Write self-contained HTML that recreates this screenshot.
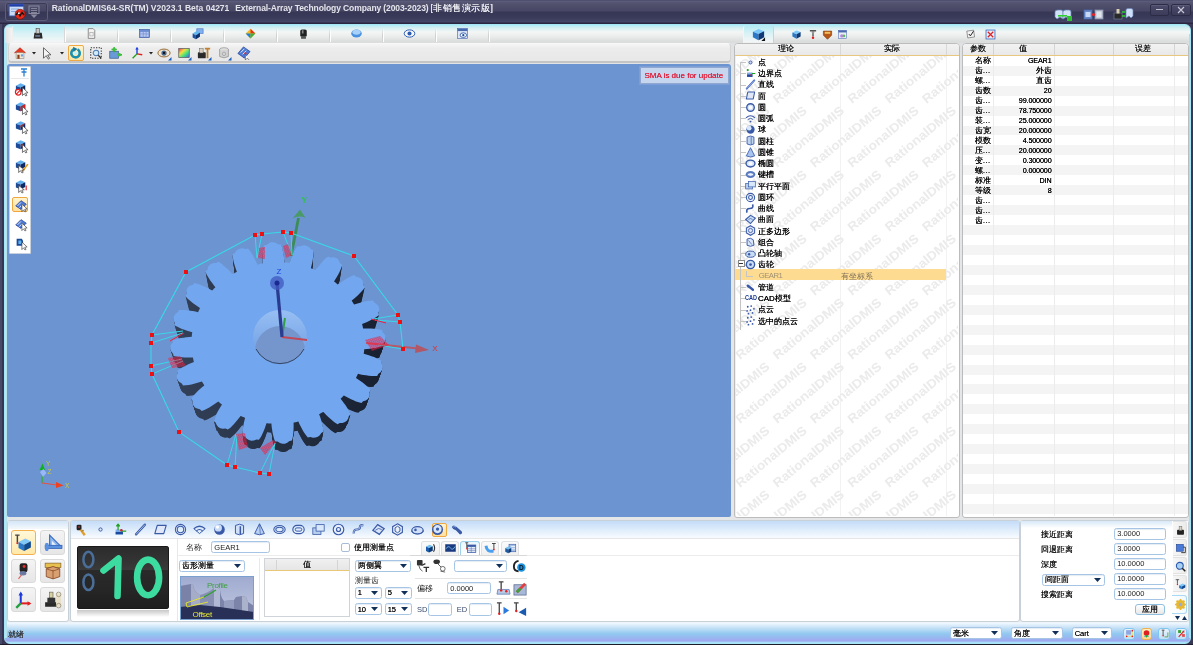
<!DOCTYPE html><html><head><meta charset="utf-8"><style>
*{box-sizing:border-box;margin:0;padding:0}
html,body{width:1193px;height:645px;overflow:hidden;background:linear-gradient(90deg,#484868 0,#484868 2px,#363654 2px,#363654 4px,#3a3a56 4px,#3a3a56 1191px,#383852 1191px);font-family:"Liberation Sans",sans-serif;color:#222}
.a{position:absolute}
.t{position:absolute;white-space:nowrap;line-height:1}
svg{overflow:visible}
body{will-change:transform}
</style></head><body>
<div class="a" style="left:0px;top:0px;width:1193px;height:24px;background:linear-gradient(#4a4a68 0,#5a5a7a 1.5px,#53536f 3px,#474765 11px,#363655 12px,#393959 17px,#444466 22px,#2a2540 23px)"></div>
<div class="a" style="left:4.5px;top:2px;width:43px;height:18.5px;border:1px solid #5e5e7c;border-radius:3px;box-shadow:inset 0 0 0 1px #3a3a56"></div>
<svg class="a" style="left:8px;top:3px" width="18" height="18" viewBox="0 0 18 18"><rect x="1.2" y="1.2" width="14.5" height="11.7" fill="#c8dcf8" stroke="#3a6ad0" stroke-width="0.8"/><rect x="1.2" y="1.2" width="14.5" height="2.4" fill="#1e3ea8"/><rect x="3" y="5.5" width="8" height="1" fill="#8aa8d8"/><rect x="3" y="8" width="6" height="1" fill="#8aa8d8"/><circle cx="12.1" cy="11.3" r="5" fill="#e82818" stroke="#801008" stroke-width="0.6"/><path d="M8,12 L10,9.5 L12,12.8 L14,9.5 L16,12" fill="none" stroke="#111" stroke-width="1.4"/><circle cx="10.8" cy="10.2" r="1" fill="#e8f0f0"/></svg>
<svg class="a" style="left:28px;top:5px" width="12" height="14" viewBox="0 0 12 14"><rect x="1" y="1" width="10" height="7.5" fill="none" stroke="#8a8aa0" stroke-width="1"/><rect x="3" y="3" width="6" height="0.9" fill="#8a8aa0"/><rect x="3" y="5" width="6" height="0.9" fill="#8a8aa0"/><rect x="3" y="7" width="6" height="0.9" fill="#8a8aa0"/><path d="M2.5,9.5 L9.5,9.5 L6,13Z" fill="#8a8aa0"/></svg>
<div class="t" style="left:51.7px;top:3.7px;font-size:8.5px;font-weight:bold;color:#e4e4ec">RationalDMIS64-SR(TM) V2023.1 Beta 04271</div>
<div class="t" style="left:235.3px;top:3.7px;font-size:8.5px;font-weight:bold;color:#e4e4ec;letter-spacing:-0.1px">External-Array Technology Company (2003-2023)</div>
<div class="t" style="left:430.5px;top:3.9px;font-size:8.6px;color:#e8e8f0;letter-spacing:0.5px;text-shadow:0 0 0.4px #fff">[非销售演示版]</div>
<svg class="a" style="left:1054px;top:9px" width="19" height="12" viewBox="0 0 19 12"><path d="M1,3 Q1,1 4,1 L7,1 Q9,1 9,3 L9,10 L6,8 L3,10 L1,8Z" fill="#cfe0f8" stroke="#6a88b8" stroke-width="0.7"/><path d="M9,3 Q9,1 12,1 L15,1 Q17,1 17,3 L17,8 L15,10 L12,8 L9,10Z" fill="#cfe0f8" stroke="#6a88b8" stroke-width="0.7"/><rect x="4" y="6" width="9" height="1.6" fill="#30d030"/><rect x="13" y="7" width="5" height="5" fill="#30c030"/></svg>
<svg class="a" style="left:1083px;top:9px" width="22" height="11" viewBox="0 0 22 11"><rect x="1" y="1" width="8" height="9" fill="#6a8ac8" stroke="#4a6aa8" stroke-width="0.8"/><rect x="2.5" y="3" width="5" height="5" fill="#c8d8f8"/><rect x="12" y="1" width="8" height="9" fill="#b8c0d0" stroke="#8890a8" stroke-width="0.8"/><rect x="13.5" y="2.5" width="5" height="6" fill="#e0e4ec"/><circle cx="10.5" cy="5.5" r="1.6" fill="#f02020"/></svg>
<svg class="a" style="left:1113px;top:8px" width="22" height="12" viewBox="0 0 22 12"><rect x="1" y="5" width="8" height="6" fill="#2a2a2a" stroke="#7a88a8" stroke-width="0.6"/><rect x="3.5" y="1" width="3" height="4.5" fill="#d8d0b0"/><path d="M13,2 Q13,0.5 15,0.5 L18,0.5 Q20,0.5 20,2.5 L20,8 L18,10 L16,8 L13,10Z" fill="#cfe0f8" stroke="#6a88b8" stroke-width="0.7"/><path d="M9,4 L12.5,4 M9,8 L12.5,8" stroke="#30d030" stroke-width="1.6"/></svg>
<div class="a" style="left:1149.5px;top:3.5px;width:19.5px;height:12px;border:1px solid #2c2c46;border-radius:2px;background:linear-gradient(#4c4c6a,#3c3c5a);box-shadow:inset 0 1px 0 #5c5c7a"></div>
<div class="a" style="left:1171px;top:3.5px;width:20px;height:12px;border:1px solid #2c2c46;border-radius:2px;background:linear-gradient(#4c4c6a,#3c3c5a);box-shadow:inset 0 1px 0 #5c5c7a"></div>
<div class="a" style="left:1155.5px;top:8.5px;width:7px;height:1.3px;background:#c0c0d0"></div>
<svg class="a" style="left:1177px;top:5.5px" width="8" height="8" viewBox="0 0 8 8"><path d="M1,1 L7,7 M7,1 L1,7" stroke="#c8c8d8" stroke-width="1.1"/></svg>
<div class="a" style="left:4px;top:24px;width:1187px;height:620px;border:1px solid #a4e6f6;border-radius:6px 6px 6px 6px;background:linear-gradient(#aeeaf6 0,#d6eef2 3px,#f4f6f6 7px,#eceeee 11px,#dadcdc 17px,#e0e2e4 19px,#e4e6e8 100px,#e4e6e8 596px,#f0f8ff 598px,#c4e0f6 603px,#90c8f0 609px,#a0a8f0 616px,#a8e0f8 617.5px)"></div>
<div class="a" style="left:1188.5px;top:34px;width:1.5px;height:604px;background:#a8e0f4"></div>
<div class="a" style="left:5px;top:34px;width:2px;height:604px;background:linear-gradient(90deg,#b0ecfc,#b8dce4)"></div>
<div class="a" style="left:0px;top:644px;width:1193px;height:1px;background:#201c30"></div>
<div class="a" style="left:65px;top:28px;width:1px;height:14px;background:linear-gradient(rgba(255,255,255,0),#ffffff 40%,#ffffff)"></div>
<div class="a" style="left:64px;top:28px;width:1px;height:14px;background:linear-gradient(rgba(200,200,200,0),#d0d0d0 50%,#d4d4d4)"></div>
<div class="a" style="left:118px;top:28px;width:1px;height:14px;background:linear-gradient(rgba(255,255,255,0),#ffffff 40%,#ffffff)"></div>
<div class="a" style="left:117px;top:28px;width:1px;height:14px;background:linear-gradient(rgba(200,200,200,0),#d0d0d0 50%,#d4d4d4)"></div>
<div class="a" style="left:171px;top:28px;width:1px;height:14px;background:linear-gradient(rgba(255,255,255,0),#ffffff 40%,#ffffff)"></div>
<div class="a" style="left:170px;top:28px;width:1px;height:14px;background:linear-gradient(rgba(200,200,200,0),#d0d0d0 50%,#d4d4d4)"></div>
<div class="a" style="left:224px;top:28px;width:1px;height:14px;background:linear-gradient(rgba(255,255,255,0),#ffffff 40%,#ffffff)"></div>
<div class="a" style="left:223px;top:28px;width:1px;height:14px;background:linear-gradient(rgba(200,200,200,0),#d0d0d0 50%,#d4d4d4)"></div>
<div class="a" style="left:277px;top:28px;width:1px;height:14px;background:linear-gradient(rgba(255,255,255,0),#ffffff 40%,#ffffff)"></div>
<div class="a" style="left:276px;top:28px;width:1px;height:14px;background:linear-gradient(rgba(200,200,200,0),#d0d0d0 50%,#d4d4d4)"></div>
<div class="a" style="left:330px;top:28px;width:1px;height:14px;background:linear-gradient(rgba(255,255,255,0),#ffffff 40%,#ffffff)"></div>
<div class="a" style="left:329px;top:28px;width:1px;height:14px;background:linear-gradient(rgba(200,200,200,0),#d0d0d0 50%,#d4d4d4)"></div>
<div class="a" style="left:383px;top:28px;width:1px;height:14px;background:linear-gradient(rgba(255,255,255,0),#ffffff 40%,#ffffff)"></div>
<div class="a" style="left:382px;top:28px;width:1px;height:14px;background:linear-gradient(rgba(200,200,200,0),#d0d0d0 50%,#d4d4d4)"></div>
<div class="a" style="left:436px;top:28px;width:1px;height:14px;background:linear-gradient(rgba(255,255,255,0),#ffffff 40%,#ffffff)"></div>
<div class="a" style="left:435px;top:28px;width:1px;height:14px;background:linear-gradient(rgba(200,200,200,0),#d0d0d0 50%,#d4d4d4)"></div>
<div class="a" style="left:489px;top:28px;width:1px;height:14px;background:linear-gradient(rgba(255,255,255,0),#ffffff 40%,#ffffff)"></div>
<div class="a" style="left:488px;top:28px;width:1px;height:14px;background:linear-gradient(rgba(200,200,200,0),#d0d0d0 50%,#d4d4d4)"></div>
<div class="a" style="left:12px;top:25.5px;width:53px;height:18px;background:linear-gradient(#b4eaf4,#d8f2f6 40%,#f2f6f6 85%,#ececec);border-left:1px solid #f0f0f0;border-right:1px solid #d8d8d8;border-radius:2px 2px 0 0"></div>
<div class="a" style="left:5px;top:28px;width:7px;height:15px;background:linear-gradient(90deg,#e0e0e0,#f4f4f4);border-radius:2px 0 0 0"></div>
<svg class="a" style="left:31.5px;top:26.5px" width="13" height="13" viewBox="0 0 16 16"><path d="M3,7 L12,7 L13,14 L2,14Z" fill="#2a2a2a"/><rect x="5" y="2" width="4" height="6" fill="#c8c8c8" stroke="#444" stroke-width="0.7"/><rect x="4" y="10" width="6" height="2" fill="#6a7a90"/></svg>
<svg class="a" style="left:84.5px;top:26.5px" width="13" height="13" viewBox="0 0 16 16"><path d="M4,2 L10,2 L12,4 L12,14 L4,14Z" fill="#f4f4f4" stroke="#777" stroke-width="1"/><rect x="6" y="7" width="4" height="4" fill="none" stroke="#999" stroke-width="0.7"/></svg>
<svg class="a" style="left:137.5px;top:26.5px" width="13" height="13" viewBox="0 0 16 16"><rect x="2" y="3" width="12" height="10" fill="#6a8cd0" stroke="#3a5aa0" stroke-width="0.8"/><rect x="3" y="6" width="10" height="6" fill="#b8c8f0"/><path d="M3,8.5 H13 M6.5,6 V12 M10,6 V12" stroke="#6a8cd0" stroke-width="0.8"/></svg>
<svg class="a" style="left:190.5px;top:26.5px" width="13" height="13" viewBox="0 0 16 16"><path d="M7,2 L15,2 L15,8 L7,8Z" fill="#80b0f0" stroke="#3a60b0" stroke-width="0.6"/><path d="M2,8 L7,5 L11,7 L6,10Z" fill="#60b8f0"/><path d="M2,8 L6,10 L6,15 L2,13Z" fill="#1a50a0"/><path d="M6,10 L11,7 L11,12 L6,15Z" fill="#0a3070"/></svg>
<svg class="a" style="left:243.5px;top:26.5px" width="13" height="13" viewBox="0 0 16 16"><path d="M8,2 L14,8 L8,14 L2,8Z" fill="#f0c020"/><path d="M8,2 L14,8 L8,8Z" fill="#e83020"/><path d="M2,8 L8,14 L8,8Z" fill="#2080e0"/><path d="M8,8 L14,8 L8,14Z" fill="#40b040"/></svg>
<svg class="a" style="left:296.5px;top:26.5px" width="13" height="13" viewBox="0 0 16 16"><rect x="4" y="3" width="8" height="9" rx="2" fill="#222"/><rect x="5" y="12" width="6" height="2.5" fill="#555"/><rect x="6" y="4" width="2" height="4" fill="#888"/></svg>
<svg class="a" style="left:349.5px;top:26.5px" width="13" height="13" viewBox="0 0 16 16"><ellipse cx="8" cy="8" rx="6.5" ry="5" fill="#4890e0"/><ellipse cx="8" cy="6.5" rx="5" ry="3" fill="#a8d0f8"/></svg>
<svg class="a" style="left:402.5px;top:26.5px" width="13" height="13" viewBox="0 0 16 16"><ellipse cx="8" cy="8" rx="6.5" ry="4.5" fill="#f8f8fc" stroke="#2a5ab0" stroke-width="1.2"/><circle cx="8" cy="8" r="2.5" fill="#2a5ab0"/></svg>
<svg class="a" style="left:455.5px;top:26.5px" width="13" height="13" viewBox="0 0 16 16"><rect x="2" y="2" width="12" height="12" fill="#dce6f8" stroke="#4a6ab0" stroke-width="0.8"/><rect x="2" y="2" width="12" height="3" fill="#4a6ab0"/><ellipse cx="9" cy="10" rx="4" ry="2.8" fill="#fff" stroke="#1a4aa0" stroke-width="1"/><circle cx="9" cy="10" r="1.4" fill="#1a4aa0"/></svg>
<div class="a" style="left:8px;top:42.5px;width:723px;height:20px;background:linear-gradient(#f6f6f6,#ececec 25%,#e8e8e8);border:1px solid #d4d4d4;border-top-color:#f8f8f8;border-bottom:2px solid #c4c4c4;border-radius:4px"></div>
<svg class="a" style="left:13.0px;top:45.5px" width="14" height="14" viewBox="0 0 16 16"><path d="M1.5,8 L8,2 L14.5,8" fill="#e83a20" stroke="#b02010" stroke-width="0.8"/><rect x="3.5" y="7.5" width="9" height="7" fill="#f0e8d8" stroke="#8a7060" stroke-width="0.6"/><rect x="5" y="10" width="2.5" height="4.5" fill="#8a3a10"/><rect x="9" y="9.5" width="2.5" height="2.5" fill="#6aa0e0"/></svg>
<svg class="a" style="left:31.5px;top:51.5px" width="4" height="2.5" viewBox="0 0 4 2.5"><path d="M0,0 L4,0 L2,2.5Z" fill="#222"/></svg>
<svg class="a" style="left:40.0px;top:45.5px" width="14" height="14" viewBox="0 0 16 16"><path d="M4,2 L4,14 L7,11 L9.5,15 L11,14 L8.7,10.3 L12.5,10Z" fill="#f4f4f4" stroke="#444" stroke-width="0.9"/></svg>
<svg class="a" style="left:59.5px;top:51.5px" width="4" height="2.5" viewBox="0 0 4 2.5"><path d="M0,0 L4,0 L2,2.5Z" fill="#222"/></svg>
<div class="a" style="left:68px;top:45px;width:15.5px;height:15.5px;background:linear-gradient(#fff4d0,#ffe4a0);border:1px solid #f0a840;border-radius:2px"></div>
<svg class="a" style="left:69.0px;top:46.0px" width="13" height="13" viewBox="0 0 16 16"><path d="M10.5,4.2 A5.2,5.2 0 1 1 6.5,3.8" fill="none" stroke="#1a90b0" stroke-width="3.2"/><path d="M5,0.8 L10.5,3.6 L5.5,7.5Z" fill="#1a7aa0"/><circle cx="8" cy="9" r="2.2" fill="#c8f0f8"/></svg>
<svg class="a" style="left:88.5px;top:45.5px" width="14" height="14" viewBox="0 0 16 16"><rect x="2" y="2" width="12" height="12" fill="none" stroke="#333" stroke-width="1.2" stroke-dasharray="1.5,1.5"/><circle cx="8" cy="8" r="3.2" fill="#d0e8f8" stroke="#4a7ab0" stroke-width="1.2"/><path d="M10.5,10.5 L14,14" stroke="#333" stroke-width="1.5"/></svg>
<svg class="a" style="left:108.0px;top:45.5px" width="14" height="14" viewBox="0 0 16 16"><rect x="2" y="6" width="10" height="8" fill="#6a9ad8" stroke="#3a5a90" stroke-width="0.8"/><path d="M7,1 L7,7 M4,4 H10 M11,10 H16" stroke="#30b030" stroke-width="1.5"/><circle cx="7" cy="4" r="2" fill="#40c040"/><circle cx="13" cy="10" r="2" fill="#40c040"/></svg>
<svg class="a" style="left:130.0px;top:45.5px" width="14" height="14" viewBox="0 0 16 16"><path d="M8,9 L8,2" stroke="#2040e0" stroke-width="1.6"/><path d="M6,4 L8,1 L10,4Z" fill="#2040e0"/><path d="M8,9 L14,10" stroke="#e02020" stroke-width="1.6"/><path d="M8,9 L3,14" stroke="#20a020" stroke-width="1.6"/></svg>
<svg class="a" style="left:148.5px;top:51.5px" width="4" height="2.5" viewBox="0 0 4 2.5"><path d="M0,0 L4,0 L2,2.5Z" fill="#222"/></svg>
<svg class="a" style="left:157.0px;top:45.5px" width="14" height="14" viewBox="0 0 16 16"><ellipse cx="8" cy="8" rx="7" ry="4.5" fill="#f0e4d0" stroke="#8a5a20" stroke-width="1"/><circle cx="8" cy="8" r="3" fill="#4a6a90"/><circle cx="8" cy="8" r="1.3" fill="#111"/></svg>
<svg class="a" style="left:168px;top:56.5px" width="3.5" height="3.5" viewBox="0 0 3.5 3.5"><path d="M3.5,0 L3.5,3.5 L0,3.5Z" fill="#1a60c0"/></svg>
<svg class="a" style="left:176.6px;top:45.5px" width="14" height="14" viewBox="0 0 16 16"><defs><linearGradient id="rb" x1="0" y1="0" x2="1" y2="1"><stop offset="0" stop-color="#f03060"/><stop offset="0.35" stop-color="#f0e040"/><stop offset="0.65" stop-color="#40e080"/><stop offset="1" stop-color="#4060f0"/></linearGradient></defs><rect x="2" y="3" width="12" height="10" fill="url(#rb)" stroke="#555" stroke-width="0.8"/></svg>
<svg class="a" style="left:187.6px;top:56.5px" width="3.5" height="3.5" viewBox="0 0 3.5 3.5"><path d="M3.5,0 L3.5,3.5 L0,3.5Z" fill="#1a60c0"/></svg>
<svg class="a" style="left:197.0px;top:45.5px" width="14" height="14" viewBox="0 0 16 16"><rect x="1" y="7" width="9" height="7" rx="1" fill="#2a2a2a"/><rect x="3" y="3" width="4" height="5" fill="#d8d0c0" stroke="#555" stroke-width="0.5"/><path d="M9,3 H15 M12,3 V14" stroke="#c08030" stroke-width="2"/></svg>
<svg class="a" style="left:208px;top:56.5px" width="3.5" height="3.5" viewBox="0 0 3.5 3.5"><path d="M3.5,0 L3.5,3.5 L0,3.5Z" fill="#1a60c0"/></svg>
<svg class="a" style="left:216.5px;top:45.5px" width="14" height="14" viewBox="0 0 16 16"><ellipse cx="8" cy="4" rx="5" ry="2" fill="#e8e8e8" stroke="#888" stroke-width="0.8"/><path d="M3,4 V12 Q8,15 13,12 V4" fill="#d4d4d4" stroke="#888" stroke-width="0.8"/><circle cx="8" cy="9" r="2" fill="none" stroke="#999" stroke-width="0.8"/></svg>
<svg class="a" style="left:227.5px;top:56.5px" width="3.5" height="3.5" viewBox="0 0 3.5 3.5"><path d="M3.5,0 L3.5,3.5 L0,3.5Z" fill="#1a60c0"/></svg>
<svg class="a" style="left:236.1px;top:45.0px" width="15" height="15" viewBox="0 0 16 16"><path d="M2,9 L8,2 L15,7 L9,14Z" fill="#4a7ad8" stroke="#2a4a98" stroke-width="0.8"/><path d="M5,8 L9,4 M7,10 L11,6" stroke="#f0f0ff" stroke-width="1"/><circle cx="10" cy="9" r="1.2" fill="#e03030"/><path d="M10,10 L10,16 L12,14 L14,16" fill="#fff" stroke="#333" stroke-width="0.6"/></svg>
<div class="a" style="left:7px;top:64px;width:724px;height:453px;background:#6c94d0;border-radius:3px 3px 2px 2px"></div>
<div class="a" style="left:640px;top:67px;width:88.5px;height:17px;background:#c6d6ee;border:1px solid #90a8d0;box-shadow:0 0 0 1px #7c9ed8"></div>
<div class="t" style="left:644.5px;top:71.8px;font-size:8px;color:#e0203c;text-shadow:0 0 0.3px #e0203c">SMA is due for update</div>
<div class="a" style="left:9px;top:65.5px;width:22px;height:188.5px;background:#fff;border:1px solid #c8d0dc;border-radius:1px"></div>
<div class="a" style="left:11px;top:77.5px;width:18px;height:1px;background:#e8e8e8"></div>
<svg class="a" style="left:20px;top:68px" width="8" height="9" viewBox="0 0 8 9"><path d="M1,1 H7 M4,1 V4 M1.5,4 H6.5 M4,4 V8.5" stroke="#2a80d0" stroke-width="1.3"/></svg>
<svg class="a" style="left:13.5px;top:81.1px" width="15" height="15" viewBox="0 0 16 16"><path d="M2,5 L7,2.5 L12,4.5 L7,7Z" fill="#60b0f0"/><path d="M2,5 L7,7 L7,12 L2,10Z" fill="#1a4a98"/><path d="M7,7 L12,4.5 L12,9.5 L7,12Z" fill="#0a2a68"/><circle cx="4.5" cy="12" r="3" fill="#fff" stroke="#e02020" stroke-width="1.3"/><path d="M2.5,14 L6.5,10" stroke="#e02020" stroke-width="1.2"/><path d="M9,7 L9,15.5 L11,13.5 L12.5,16 L13.8,15.3 L12.3,12.8 L15,12.5Z" fill="#fff" stroke="#333" stroke-width="0.7"/></svg>
<svg class="a" style="left:13.5px;top:100.2px" width="15" height="15" viewBox="0 0 16 16"><path d="M2,5 L7,2.5 L12,4.5 L7,7Z" fill="#60b0f0"/><path d="M2,5 L7,7 L7,12 L2,10Z" fill="#1a4a98"/><path d="M7,7 L12,4.5 L12,9.5 L7,12Z" fill="#0a2a68"/><path d="M7,7 L12,4.5 L12,9.5 L7,12Z" fill="#e02020"/><path d="M9,7 L9,15.5 L11,13.5 L12.5,16 L13.8,15.3 L12.3,12.8 L15,12.5Z" fill="#fff" stroke="#333" stroke-width="0.7"/></svg>
<svg class="a" style="left:13.5px;top:119.2px" width="15" height="15" viewBox="0 0 16 16"><path d="M2,5 L7,2.5 L12,4.5 L7,7Z" fill="#60b0f0"/><path d="M2,5 L7,7 L7,12 L2,10Z" fill="#1a4a98"/><path d="M7,7 L12,4.5 L12,9.5 L7,12Z" fill="#0a2a68"/><path d="M7,7 L12,4.5 L10,7 L7,9Z" fill="#e02020"/><path d="M9,7 L9,15.5 L11,13.5 L12.5,16 L13.8,15.3 L12.3,12.8 L15,12.5Z" fill="#fff" stroke="#333" stroke-width="0.7"/></svg>
<svg class="a" style="left:13.5px;top:138.2px" width="15" height="15" viewBox="0 0 16 16"><path d="M2,5 L7,2.5 L12,4.5 L7,7Z" fill="#60b0f0"/><path d="M2,5 L7,7 L7,12 L2,10Z" fill="#1a4a98"/><path d="M7,7 L12,4.5 L12,9.5 L7,12Z" fill="#0a2a68"/><circle cx="9" cy="8" r="1.6" fill="#e02020"/><path d="M9,7 L9,15.5 L11,13.5 L12.5,16 L13.8,15.3 L12.3,12.8 L15,12.5Z" fill="#fff" stroke="#333" stroke-width="0.7"/></svg>
<svg class="a" style="left:13.5px;top:157.5px" width="15" height="15" viewBox="0 0 16 16"><path d="M2,5 L7,2.5 L12,4.5 L7,7Z" fill="#60b0f0"/><path d="M2,5 L7,7 L7,12 L2,10Z" fill="#1a4a98"/><path d="M7,7 L12,4.5 L12,9.5 L7,12Z" fill="#0a2a68"/><path d="M8,14 L14,6 L15.5,7 L9.5,15Z" fill="#e0a020"/><path d="M5,8 L5,15.5 L7,13.5 L8.5,16 L9.8,15.3 L8.3,12.8 L11,12.5Z" fill="#fff" stroke="#333" stroke-width="0.7"/></svg>
<svg class="a" style="left:13.5px;top:177.5px" width="15" height="15" viewBox="0 0 16 16"><path d="M2,5 L7,2.5 L12,4.5 L7,7Z" fill="#60b0f0"/><path d="M2,5 L7,7 L7,12 L2,10Z" fill="#1a4a98"/><path d="M7,7 L12,4.5 L12,9.5 L7,12Z" fill="#0a2a68"/><path d="M13,8 L13,13" stroke="#e02020" stroke-width="1.2"/><path d="M5,8 L5,15.5 L7,13.5 L8.5,16 L9.8,15.3 L8.3,12.8 L11,12.5Z" fill="#fff" stroke="#333" stroke-width="0.7"/></svg>
<div class="a" style="left:12.4px;top:197.3px;width:15.5px;height:15px;background:linear-gradient(#fff4d0,#ffe0a0);border:1px solid #f0a840;border-radius:2px"></div>
<svg class="a" style="left:14.0px;top:197.8px" width="14" height="14" viewBox="0 0 16 16"><path d="M2,9 L8,3 L14,7 L8,13Z" fill="#4a7ad8" stroke="#1a3a88" stroke-width="0.8"/><path d="M4,9 L8,5 M6,11 L10,7" stroke="#fff" stroke-width="0.9"/><circle cx="9" cy="9" r="1" fill="#e02020"/><path d="M9,7 L9,15.5 L11,13.5 L12.5,16 L13.8,15.3 L12.3,12.8 L15,12.5Z" fill="#fff" stroke="#333" stroke-width="0.7"/></svg>
<svg class="a" style="left:14.0px;top:217.0px" width="14" height="14" viewBox="0 0 16 16"><path d="M2,9 L8,3 L14,7 L8,13Z" fill="#4a7ad8" stroke="#1a3a88" stroke-width="0.8"/><path d="M4,9 L8,5 M6,11 L10,7" stroke="#fff" stroke-width="0.9"/><path d="M9,7 L9,15.5 L11,13.5 L12.5,16 L13.8,15.3 L12.3,12.8 L15,12.5Z" fill="#fff" stroke="#333" stroke-width="0.7"/></svg>
<svg class="a" style="left:14.0px;top:235.5px" width="14" height="14" viewBox="0 0 16 16"><path d="M3,3 L9,3 Q12,7 9,11 L3,11Z" fill="#1a4a98"/><path d="M5,5 L8,5 Q9.5,7 8,9 L5,9Z" fill="#60b0f0"/><path d="M9,7 L9,15.5 L11,13.5 L12.5,16 L13.8,15.3 L12.3,12.8 L15,12.5Z" fill="#fff" stroke="#333" stroke-width="0.7"/></svg>
<svg class="a" style="left:0;top:0" width="1193" height="645" viewBox="0 0 1193 645"><defs><linearGradient id="wall" x1="0" y1="0" x2="1" y2="0"><stop offset="0" stop-color="#34425a"/><stop offset="0.5" stop-color="#243044"/><stop offset="1" stop-color="#182030"/></linearGradient><linearGradient id="bore" x1="0" y1="0" x2="0" y2="1"><stop offset="0" stop-color="#98c0f4"/><stop offset="1" stop-color="#6a98e0"/></linearGradient></defs><path transform="matrix(0.9620,0,0,0.9620,10.60,25.16)" d="M266.5,244.9L268.8,243.2L271.1,242.3L273.6,242.2L276.0,242.9L278.4,244.4L280.9,244.6L281.9,247.1L282.6,249.7L283.2,252.2L283.7,254.7L284.0,257.3L284.4,259.8L284.6,262.4L285.6,262.4L286.6,262.5L287.5,262.6L288.5,262.7L289.5,262.8L290.3,260.4L291.1,258.0L292.1,255.6L293.1,253.2L294.2,250.8L295.5,248.5L297.1,246.2L299.5,246.4L302.2,245.5L304.7,245.3L307.1,245.9L309.2,247.2L311.0,249.3L313.3,250.2L313.4,252.9L313.3,255.6L313.0,258.1L312.6,260.7L312.1,263.2L311.5,265.7L310.9,268.2L311.8,268.6L312.7,268.9L313.6,269.3L314.5,269.7L315.4,270.1L317.0,268.0L318.6,265.9L320.3,263.9L322.0,261.9L323.9,260.0L325.9,258.1L328.2,256.4L330.4,257.4L333.3,257.2L335.7,257.8L337.8,259.0L339.3,260.9L340.4,263.4L342.2,264.9L341.4,267.6L340.4,270.0L339.3,272.4L338.1,274.7L336.8,277.0L335.4,279.2L334.0,281.4L334.8,282.0L335.5,282.6L336.2,283.2L337.0,283.8L337.7,284.5L339.9,282.9L342.1,281.4L344.4,280.0L346.7,278.6L349.1,277.3L351.6,276.1L354.3,275.1L356.1,276.7L358.9,277.4L361.1,278.6L362.6,280.4L363.5,282.7L363.6,285.4L364.9,287.3L363.3,289.6L361.5,291.6L359.6,293.6L357.7,295.4L355.7,297.2L353.7,298.9L351.7,300.6L352.2,301.4L352.7,302.2L353.2,303.0L353.6,303.8L354.1,304.6L356.7,303.7L359.3,303.0L361.9,302.3L364.6,301.6L367.3,301.1L370.1,300.7L373.0,300.5L374.2,302.5L376.6,304.0L378.3,305.8L379.2,307.9L379.2,310.3L378.5,312.9L379.0,315.1L376.7,316.8L374.4,318.3L372.0,319.6L369.5,320.8L367.1,321.9L364.6,322.9L362.1,324.0L362.3,324.8L362.5,325.7L362.7,326.6L362.9,327.5L363.1,328.4L365.8,328.4L368.5,328.4L371.3,328.5L374.0,328.7L376.8,328.9L379.6,329.4L382.4,330.0L382.9,332.3L384.7,334.4L385.7,336.6L385.8,338.9L385.1,341.2L383.5,343.4L383.3,345.7L380.6,346.6L377.8,347.3L375.1,347.9L372.4,348.3L369.7,348.7L367.0,348.9L364.2,349.2L364.2,350.1L364.1,351.0L364.0,351.9L363.9,352.8L363.7,353.7L366.3,354.5L368.9,355.3L371.5,356.2L374.1,357.1L376.6,358.2L379.1,359.4L381.6,360.8L381.3,363.1L382.3,365.6L382.5,368.0L381.9,370.2L380.5,372.2L378.2,373.9L377.2,376.0L374.3,376.1L371.5,376.0L368.7,375.7L366.0,375.3L363.3,374.9L360.6,374.4L358.0,373.8L357.6,374.6L357.2,375.5L356.8,376.3L356.4,377.1L356.0,378.0L358.2,379.4L360.4,381.0L362.6,382.5L364.7,384.2L366.8,385.9L368.8,387.8L370.6,389.9L369.6,392.0L369.7,394.7L369.2,397.0L367.8,398.9L365.8,400.4L363.1,401.3L361.5,403.0L358.7,402.3L356.0,401.4L353.5,400.3L351.0,399.2L348.6,398.0L346.2,396.7L343.9,395.4L343.3,396.1L342.6,396.8L342.0,397.5L341.3,398.1L340.6,398.8L342.2,400.8L343.8,402.9L345.4,405.0L346.8,407.2L348.2,409.5L349.5,411.8L350.6,414.4L348.9,416.0L348.2,418.6L346.8,420.7L345.0,422.1L342.5,422.9L339.7,423.0L337.6,424.2L335.1,422.7L332.9,421.1L330.9,419.3L328.9,417.5L327.0,415.7L325.1,413.8L323.4,411.9L322.5,412.3L321.7,412.8L320.8,413.3L320.0,413.7L319.1,414.2L320.0,416.6L320.8,419.0L321.6,421.5L322.3,424.0L322.8,426.5L323.3,429.1L323.4,431.8L321.3,432.9L319.8,435.2L317.8,436.8L315.5,437.6L313.0,437.7L310.2,436.9L307.8,437.4L306.0,435.3L304.4,433.1L303.1,430.9L301.8,428.6L300.6,426.3L299.4,423.9L298.4,421.6L297.4,421.8L296.5,422.0L295.5,422.2L294.5,422.4L293.6,422.6L293.6,425.1L293.6,427.7L293.5,430.2L293.3,432.8L293.0,435.4L292.6,438.0L291.9,440.6L289.5,441.1L287.2,442.8L284.9,443.7L282.4,443.8L280.0,443.1L277.6,441.6L275.1,441.4L274.1,438.9L273.4,436.3L272.8,433.8L272.3,431.3L272.0,428.7L271.6,426.2L271.4,423.6L270.4,423.6L269.4,423.5L268.5,423.4L267.5,423.3L266.5,423.2L265.7,425.6L264.9,428.0L263.9,430.4L262.9,432.8L261.8,435.2L260.5,437.5L258.9,439.8L256.5,439.6L253.8,440.5L251.3,440.7L248.9,440.1L246.8,438.8L245.0,436.7L242.7,435.8L242.6,433.1L242.7,430.4L243.0,427.9L243.4,425.3L243.9,422.8L244.5,420.3L245.1,417.8L244.2,417.4L243.3,417.1L242.4,416.7L241.5,416.3L240.6,415.9L239.0,418.0L237.4,420.1L235.7,422.1L234.0,424.1L232.1,426.0L230.1,427.9L227.8,429.6L225.6,428.6L222.7,428.8L220.3,428.2L218.2,427.0L216.7,425.1L215.6,422.6L213.8,421.1L214.6,418.4L215.6,416.0L216.7,413.6L217.9,411.3L219.2,409.0L220.6,406.8L222.0,404.6L221.2,404.0L220.5,403.4L219.8,402.8L219.0,402.2L218.3,401.5L216.1,403.1L213.9,404.6L211.6,406.0L209.3,407.4L206.9,408.7L204.4,409.9L201.7,410.9L199.9,409.3L197.1,408.6L194.9,407.4L193.4,405.6L192.5,403.3L192.4,400.6L191.1,398.7L192.7,396.4L194.5,394.4L196.4,392.4L198.3,390.6L200.3,388.8L202.3,387.1L204.3,385.4L203.8,384.6L203.3,383.8L202.8,383.0L202.4,382.2L201.9,381.4L199.3,382.3L196.7,383.0L194.1,383.7L191.4,384.4L188.7,384.9L185.9,385.3L183.0,385.5L181.8,383.5L179.4,382.0L177.7,380.2L176.8,378.1L176.8,375.7L177.5,373.1L177.0,370.9L179.3,369.2L181.6,367.7L184.0,366.4L186.5,365.2L188.9,364.1L191.4,363.1L193.9,362.0L193.7,361.2L193.5,360.3L193.3,359.4L193.1,358.5L192.9,357.6L190.2,357.6L187.5,357.6L184.7,357.5L182.0,357.3L179.2,357.1L176.4,356.6L173.6,356.0L173.1,353.7L171.3,351.6L170.3,349.4L170.2,347.1L170.9,344.8L172.5,342.6L172.7,340.3L175.4,339.4L178.2,338.7L180.9,338.1L183.6,337.7L186.3,337.3L189.0,337.1L191.8,336.8L191.8,335.9L191.9,335.0L192.0,334.1L192.1,333.2L192.3,332.3L189.7,331.5L187.1,330.7L184.5,329.8L181.9,328.9L179.4,327.8L176.9,326.6L174.4,325.2L174.7,322.9L173.7,320.4L173.5,318.0L174.1,315.8L175.5,313.8L177.8,312.1L178.8,310.0L181.7,309.9L184.5,310.0L187.3,310.3L190.0,310.7L192.7,311.1L195.4,311.6L198.0,312.2L198.4,311.4L198.8,310.5L199.2,309.7L199.6,308.9L200.0,308.0L197.8,306.6L195.6,305.0L193.4,303.5L191.3,301.8L189.2,300.1L187.2,298.2L185.4,296.1L186.4,294.0L186.3,291.3L186.8,289.0L188.2,287.1L190.2,285.6L192.9,284.7L194.5,283.0L197.3,283.7L200.0,284.6L202.5,285.7L205.0,286.8L207.4,288.0L209.8,289.3L212.1,290.6L212.7,289.9L213.4,289.2L214.0,288.5L214.7,287.9L215.4,287.2L213.8,285.2L212.2,283.1L210.6,281.0L209.2,278.8L207.8,276.5L206.5,274.2L205.4,271.6L207.1,270.0L207.8,267.4L209.2,265.3L211.0,263.9L213.5,263.1L216.3,263.0L218.4,261.8L220.9,263.3L223.1,264.9L225.1,266.7L227.1,268.5L229.0,270.3L230.9,272.2L232.6,274.1L233.5,273.7L234.3,273.2L235.2,272.7L236.0,272.3L236.9,271.8L236.0,269.4L235.2,267.0L234.4,264.5L233.7,262.0L233.2,259.5L232.7,256.9L232.6,254.2L234.7,253.1L236.2,250.8L238.2,249.2L240.5,248.4L243.0,248.3L245.8,249.1L248.2,248.6L250.0,250.7L251.6,252.9L252.9,255.1L254.2,257.4L255.4,259.7L256.6,262.1L257.6,264.4L258.6,264.2L259.5,264.0L260.5,263.8L261.5,263.6L262.4,263.4L262.4,260.9L262.4,258.3L262.5,255.8L262.7,253.2L263.0,250.6L263.4,248.0L264.1,245.4Z" fill="url(#wall)"/><path transform="matrix(0.9644,0,0,0.9644,9.94,23.58)" d="M266.5,244.9L268.8,243.2L271.1,242.3L273.6,242.2L276.0,242.9L278.4,244.4L280.9,244.6L281.9,247.1L282.6,249.7L283.2,252.2L283.7,254.7L284.0,257.3L284.4,259.8L284.6,262.4L285.6,262.4L286.6,262.5L287.5,262.6L288.5,262.7L289.5,262.8L290.3,260.4L291.1,258.0L292.1,255.6L293.1,253.2L294.2,250.8L295.5,248.5L297.1,246.2L299.5,246.4L302.2,245.5L304.7,245.3L307.1,245.9L309.2,247.2L311.0,249.3L313.3,250.2L313.4,252.9L313.3,255.6L313.0,258.1L312.6,260.7L312.1,263.2L311.5,265.7L310.9,268.2L311.8,268.6L312.7,268.9L313.6,269.3L314.5,269.7L315.4,270.1L317.0,268.0L318.6,265.9L320.3,263.9L322.0,261.9L323.9,260.0L325.9,258.1L328.2,256.4L330.4,257.4L333.3,257.2L335.7,257.8L337.8,259.0L339.3,260.9L340.4,263.4L342.2,264.9L341.4,267.6L340.4,270.0L339.3,272.4L338.1,274.7L336.8,277.0L335.4,279.2L334.0,281.4L334.8,282.0L335.5,282.6L336.2,283.2L337.0,283.8L337.7,284.5L339.9,282.9L342.1,281.4L344.4,280.0L346.7,278.6L349.1,277.3L351.6,276.1L354.3,275.1L356.1,276.7L358.9,277.4L361.1,278.6L362.6,280.4L363.5,282.7L363.6,285.4L364.9,287.3L363.3,289.6L361.5,291.6L359.6,293.6L357.7,295.4L355.7,297.2L353.7,298.9L351.7,300.6L352.2,301.4L352.7,302.2L353.2,303.0L353.6,303.8L354.1,304.6L356.7,303.7L359.3,303.0L361.9,302.3L364.6,301.6L367.3,301.1L370.1,300.7L373.0,300.5L374.2,302.5L376.6,304.0L378.3,305.8L379.2,307.9L379.2,310.3L378.5,312.9L379.0,315.1L376.7,316.8L374.4,318.3L372.0,319.6L369.5,320.8L367.1,321.9L364.6,322.9L362.1,324.0L362.3,324.8L362.5,325.7L362.7,326.6L362.9,327.5L363.1,328.4L365.8,328.4L368.5,328.4L371.3,328.5L374.0,328.7L376.8,328.9L379.6,329.4L382.4,330.0L382.9,332.3L384.7,334.4L385.7,336.6L385.8,338.9L385.1,341.2L383.5,343.4L383.3,345.7L380.6,346.6L377.8,347.3L375.1,347.9L372.4,348.3L369.7,348.7L367.0,348.9L364.2,349.2L364.2,350.1L364.1,351.0L364.0,351.9L363.9,352.8L363.7,353.7L366.3,354.5L368.9,355.3L371.5,356.2L374.1,357.1L376.6,358.2L379.1,359.4L381.6,360.8L381.3,363.1L382.3,365.6L382.5,368.0L381.9,370.2L380.5,372.2L378.2,373.9L377.2,376.0L374.3,376.1L371.5,376.0L368.7,375.7L366.0,375.3L363.3,374.9L360.6,374.4L358.0,373.8L357.6,374.6L357.2,375.5L356.8,376.3L356.4,377.1L356.0,378.0L358.2,379.4L360.4,381.0L362.6,382.5L364.7,384.2L366.8,385.9L368.8,387.8L370.6,389.9L369.6,392.0L369.7,394.7L369.2,397.0L367.8,398.9L365.8,400.4L363.1,401.3L361.5,403.0L358.7,402.3L356.0,401.4L353.5,400.3L351.0,399.2L348.6,398.0L346.2,396.7L343.9,395.4L343.3,396.1L342.6,396.8L342.0,397.5L341.3,398.1L340.6,398.8L342.2,400.8L343.8,402.9L345.4,405.0L346.8,407.2L348.2,409.5L349.5,411.8L350.6,414.4L348.9,416.0L348.2,418.6L346.8,420.7L345.0,422.1L342.5,422.9L339.7,423.0L337.6,424.2L335.1,422.7L332.9,421.1L330.9,419.3L328.9,417.5L327.0,415.7L325.1,413.8L323.4,411.9L322.5,412.3L321.7,412.8L320.8,413.3L320.0,413.7L319.1,414.2L320.0,416.6L320.8,419.0L321.6,421.5L322.3,424.0L322.8,426.5L323.3,429.1L323.4,431.8L321.3,432.9L319.8,435.2L317.8,436.8L315.5,437.6L313.0,437.7L310.2,436.9L307.8,437.4L306.0,435.3L304.4,433.1L303.1,430.9L301.8,428.6L300.6,426.3L299.4,423.9L298.4,421.6L297.4,421.8L296.5,422.0L295.5,422.2L294.5,422.4L293.6,422.6L293.6,425.1L293.6,427.7L293.5,430.2L293.3,432.8L293.0,435.4L292.6,438.0L291.9,440.6L289.5,441.1L287.2,442.8L284.9,443.7L282.4,443.8L280.0,443.1L277.6,441.6L275.1,441.4L274.1,438.9L273.4,436.3L272.8,433.8L272.3,431.3L272.0,428.7L271.6,426.2L271.4,423.6L270.4,423.6L269.4,423.5L268.5,423.4L267.5,423.3L266.5,423.2L265.7,425.6L264.9,428.0L263.9,430.4L262.9,432.8L261.8,435.2L260.5,437.5L258.9,439.8L256.5,439.6L253.8,440.5L251.3,440.7L248.9,440.1L246.8,438.8L245.0,436.7L242.7,435.8L242.6,433.1L242.7,430.4L243.0,427.9L243.4,425.3L243.9,422.8L244.5,420.3L245.1,417.8L244.2,417.4L243.3,417.1L242.4,416.7L241.5,416.3L240.6,415.9L239.0,418.0L237.4,420.1L235.7,422.1L234.0,424.1L232.1,426.0L230.1,427.9L227.8,429.6L225.6,428.6L222.7,428.8L220.3,428.2L218.2,427.0L216.7,425.1L215.6,422.6L213.8,421.1L214.6,418.4L215.6,416.0L216.7,413.6L217.9,411.3L219.2,409.0L220.6,406.8L222.0,404.6L221.2,404.0L220.5,403.4L219.8,402.8L219.0,402.2L218.3,401.5L216.1,403.1L213.9,404.6L211.6,406.0L209.3,407.4L206.9,408.7L204.4,409.9L201.7,410.9L199.9,409.3L197.1,408.6L194.9,407.4L193.4,405.6L192.5,403.3L192.4,400.6L191.1,398.7L192.7,396.4L194.5,394.4L196.4,392.4L198.3,390.6L200.3,388.8L202.3,387.1L204.3,385.4L203.8,384.6L203.3,383.8L202.8,383.0L202.4,382.2L201.9,381.4L199.3,382.3L196.7,383.0L194.1,383.7L191.4,384.4L188.7,384.9L185.9,385.3L183.0,385.5L181.8,383.5L179.4,382.0L177.7,380.2L176.8,378.1L176.8,375.7L177.5,373.1L177.0,370.9L179.3,369.2L181.6,367.7L184.0,366.4L186.5,365.2L188.9,364.1L191.4,363.1L193.9,362.0L193.7,361.2L193.5,360.3L193.3,359.4L193.1,358.5L192.9,357.6L190.2,357.6L187.5,357.6L184.7,357.5L182.0,357.3L179.2,357.1L176.4,356.6L173.6,356.0L173.1,353.7L171.3,351.6L170.3,349.4L170.2,347.1L170.9,344.8L172.5,342.6L172.7,340.3L175.4,339.4L178.2,338.7L180.9,338.1L183.6,337.7L186.3,337.3L189.0,337.1L191.8,336.8L191.8,335.9L191.9,335.0L192.0,334.1L192.1,333.2L192.3,332.3L189.7,331.5L187.1,330.7L184.5,329.8L181.9,328.9L179.4,327.8L176.9,326.6L174.4,325.2L174.7,322.9L173.7,320.4L173.5,318.0L174.1,315.8L175.5,313.8L177.8,312.1L178.8,310.0L181.7,309.9L184.5,310.0L187.3,310.3L190.0,310.7L192.7,311.1L195.4,311.6L198.0,312.2L198.4,311.4L198.8,310.5L199.2,309.7L199.6,308.9L200.0,308.0L197.8,306.6L195.6,305.0L193.4,303.5L191.3,301.8L189.2,300.1L187.2,298.2L185.4,296.1L186.4,294.0L186.3,291.3L186.8,289.0L188.2,287.1L190.2,285.6L192.9,284.7L194.5,283.0L197.3,283.7L200.0,284.6L202.5,285.7L205.0,286.8L207.4,288.0L209.8,289.3L212.1,290.6L212.7,289.9L213.4,289.2L214.0,288.5L214.7,287.9L215.4,287.2L213.8,285.2L212.2,283.1L210.6,281.0L209.2,278.8L207.8,276.5L206.5,274.2L205.4,271.6L207.1,270.0L207.8,267.4L209.2,265.3L211.0,263.9L213.5,263.1L216.3,263.0L218.4,261.8L220.9,263.3L223.1,264.9L225.1,266.7L227.1,268.5L229.0,270.3L230.9,272.2L232.6,274.1L233.5,273.7L234.3,273.2L235.2,272.7L236.0,272.3L236.9,271.8L236.0,269.4L235.2,267.0L234.4,264.5L233.7,262.0L233.2,259.5L232.7,256.9L232.6,254.2L234.7,253.1L236.2,250.8L238.2,249.2L240.5,248.4L243.0,248.3L245.8,249.1L248.2,248.6L250.0,250.7L251.6,252.9L252.9,255.1L254.2,257.4L255.4,259.7L256.6,262.1L257.6,264.4L258.6,264.2L259.5,264.0L260.5,263.8L261.5,263.6L262.4,263.4L262.4,260.9L262.4,258.3L262.5,255.8L262.7,253.2L263.0,250.6L263.4,248.0L264.1,245.4Z" fill="url(#wall)"/><path transform="matrix(0.9667,0,0,0.9667,9.28,22.01)" d="M266.5,244.9L268.8,243.2L271.1,242.3L273.6,242.2L276.0,242.9L278.4,244.4L280.9,244.6L281.9,247.1L282.6,249.7L283.2,252.2L283.7,254.7L284.0,257.3L284.4,259.8L284.6,262.4L285.6,262.4L286.6,262.5L287.5,262.6L288.5,262.7L289.5,262.8L290.3,260.4L291.1,258.0L292.1,255.6L293.1,253.2L294.2,250.8L295.5,248.5L297.1,246.2L299.5,246.4L302.2,245.5L304.7,245.3L307.1,245.9L309.2,247.2L311.0,249.3L313.3,250.2L313.4,252.9L313.3,255.6L313.0,258.1L312.6,260.7L312.1,263.2L311.5,265.7L310.9,268.2L311.8,268.6L312.7,268.9L313.6,269.3L314.5,269.7L315.4,270.1L317.0,268.0L318.6,265.9L320.3,263.9L322.0,261.9L323.9,260.0L325.9,258.1L328.2,256.4L330.4,257.4L333.3,257.2L335.7,257.8L337.8,259.0L339.3,260.9L340.4,263.4L342.2,264.9L341.4,267.6L340.4,270.0L339.3,272.4L338.1,274.7L336.8,277.0L335.4,279.2L334.0,281.4L334.8,282.0L335.5,282.6L336.2,283.2L337.0,283.8L337.7,284.5L339.9,282.9L342.1,281.4L344.4,280.0L346.7,278.6L349.1,277.3L351.6,276.1L354.3,275.1L356.1,276.7L358.9,277.4L361.1,278.6L362.6,280.4L363.5,282.7L363.6,285.4L364.9,287.3L363.3,289.6L361.5,291.6L359.6,293.6L357.7,295.4L355.7,297.2L353.7,298.9L351.7,300.6L352.2,301.4L352.7,302.2L353.2,303.0L353.6,303.8L354.1,304.6L356.7,303.7L359.3,303.0L361.9,302.3L364.6,301.6L367.3,301.1L370.1,300.7L373.0,300.5L374.2,302.5L376.6,304.0L378.3,305.8L379.2,307.9L379.2,310.3L378.5,312.9L379.0,315.1L376.7,316.8L374.4,318.3L372.0,319.6L369.5,320.8L367.1,321.9L364.6,322.9L362.1,324.0L362.3,324.8L362.5,325.7L362.7,326.6L362.9,327.5L363.1,328.4L365.8,328.4L368.5,328.4L371.3,328.5L374.0,328.7L376.8,328.9L379.6,329.4L382.4,330.0L382.9,332.3L384.7,334.4L385.7,336.6L385.8,338.9L385.1,341.2L383.5,343.4L383.3,345.7L380.6,346.6L377.8,347.3L375.1,347.9L372.4,348.3L369.7,348.7L367.0,348.9L364.2,349.2L364.2,350.1L364.1,351.0L364.0,351.9L363.9,352.8L363.7,353.7L366.3,354.5L368.9,355.3L371.5,356.2L374.1,357.1L376.6,358.2L379.1,359.4L381.6,360.8L381.3,363.1L382.3,365.6L382.5,368.0L381.9,370.2L380.5,372.2L378.2,373.9L377.2,376.0L374.3,376.1L371.5,376.0L368.7,375.7L366.0,375.3L363.3,374.9L360.6,374.4L358.0,373.8L357.6,374.6L357.2,375.5L356.8,376.3L356.4,377.1L356.0,378.0L358.2,379.4L360.4,381.0L362.6,382.5L364.7,384.2L366.8,385.9L368.8,387.8L370.6,389.9L369.6,392.0L369.7,394.7L369.2,397.0L367.8,398.9L365.8,400.4L363.1,401.3L361.5,403.0L358.7,402.3L356.0,401.4L353.5,400.3L351.0,399.2L348.6,398.0L346.2,396.7L343.9,395.4L343.3,396.1L342.6,396.8L342.0,397.5L341.3,398.1L340.6,398.8L342.2,400.8L343.8,402.9L345.4,405.0L346.8,407.2L348.2,409.5L349.5,411.8L350.6,414.4L348.9,416.0L348.2,418.6L346.8,420.7L345.0,422.1L342.5,422.9L339.7,423.0L337.6,424.2L335.1,422.7L332.9,421.1L330.9,419.3L328.9,417.5L327.0,415.7L325.1,413.8L323.4,411.9L322.5,412.3L321.7,412.8L320.8,413.3L320.0,413.7L319.1,414.2L320.0,416.6L320.8,419.0L321.6,421.5L322.3,424.0L322.8,426.5L323.3,429.1L323.4,431.8L321.3,432.9L319.8,435.2L317.8,436.8L315.5,437.6L313.0,437.7L310.2,436.9L307.8,437.4L306.0,435.3L304.4,433.1L303.1,430.9L301.8,428.6L300.6,426.3L299.4,423.9L298.4,421.6L297.4,421.8L296.5,422.0L295.5,422.2L294.5,422.4L293.6,422.6L293.6,425.1L293.6,427.7L293.5,430.2L293.3,432.8L293.0,435.4L292.6,438.0L291.9,440.6L289.5,441.1L287.2,442.8L284.9,443.7L282.4,443.8L280.0,443.1L277.6,441.6L275.1,441.4L274.1,438.9L273.4,436.3L272.8,433.8L272.3,431.3L272.0,428.7L271.6,426.2L271.4,423.6L270.4,423.6L269.4,423.5L268.5,423.4L267.5,423.3L266.5,423.2L265.7,425.6L264.9,428.0L263.9,430.4L262.9,432.8L261.8,435.2L260.5,437.5L258.9,439.8L256.5,439.6L253.8,440.5L251.3,440.7L248.9,440.1L246.8,438.8L245.0,436.7L242.7,435.8L242.6,433.1L242.7,430.4L243.0,427.9L243.4,425.3L243.9,422.8L244.5,420.3L245.1,417.8L244.2,417.4L243.3,417.1L242.4,416.7L241.5,416.3L240.6,415.9L239.0,418.0L237.4,420.1L235.7,422.1L234.0,424.1L232.1,426.0L230.1,427.9L227.8,429.6L225.6,428.6L222.7,428.8L220.3,428.2L218.2,427.0L216.7,425.1L215.6,422.6L213.8,421.1L214.6,418.4L215.6,416.0L216.7,413.6L217.9,411.3L219.2,409.0L220.6,406.8L222.0,404.6L221.2,404.0L220.5,403.4L219.8,402.8L219.0,402.2L218.3,401.5L216.1,403.1L213.9,404.6L211.6,406.0L209.3,407.4L206.9,408.7L204.4,409.9L201.7,410.9L199.9,409.3L197.1,408.6L194.9,407.4L193.4,405.6L192.5,403.3L192.4,400.6L191.1,398.7L192.7,396.4L194.5,394.4L196.4,392.4L198.3,390.6L200.3,388.8L202.3,387.1L204.3,385.4L203.8,384.6L203.3,383.8L202.8,383.0L202.4,382.2L201.9,381.4L199.3,382.3L196.7,383.0L194.1,383.7L191.4,384.4L188.7,384.9L185.9,385.3L183.0,385.5L181.8,383.5L179.4,382.0L177.7,380.2L176.8,378.1L176.8,375.7L177.5,373.1L177.0,370.9L179.3,369.2L181.6,367.7L184.0,366.4L186.5,365.2L188.9,364.1L191.4,363.1L193.9,362.0L193.7,361.2L193.5,360.3L193.3,359.4L193.1,358.5L192.9,357.6L190.2,357.6L187.5,357.6L184.7,357.5L182.0,357.3L179.2,357.1L176.4,356.6L173.6,356.0L173.1,353.7L171.3,351.6L170.3,349.4L170.2,347.1L170.9,344.8L172.5,342.6L172.7,340.3L175.4,339.4L178.2,338.7L180.9,338.1L183.6,337.7L186.3,337.3L189.0,337.1L191.8,336.8L191.8,335.9L191.9,335.0L192.0,334.1L192.1,333.2L192.3,332.3L189.7,331.5L187.1,330.7L184.5,329.8L181.9,328.9L179.4,327.8L176.9,326.6L174.4,325.2L174.7,322.9L173.7,320.4L173.5,318.0L174.1,315.8L175.5,313.8L177.8,312.1L178.8,310.0L181.7,309.9L184.5,310.0L187.3,310.3L190.0,310.7L192.7,311.1L195.4,311.6L198.0,312.2L198.4,311.4L198.8,310.5L199.2,309.7L199.6,308.9L200.0,308.0L197.8,306.6L195.6,305.0L193.4,303.5L191.3,301.8L189.2,300.1L187.2,298.2L185.4,296.1L186.4,294.0L186.3,291.3L186.8,289.0L188.2,287.1L190.2,285.6L192.9,284.7L194.5,283.0L197.3,283.7L200.0,284.6L202.5,285.7L205.0,286.8L207.4,288.0L209.8,289.3L212.1,290.6L212.7,289.9L213.4,289.2L214.0,288.5L214.7,287.9L215.4,287.2L213.8,285.2L212.2,283.1L210.6,281.0L209.2,278.8L207.8,276.5L206.5,274.2L205.4,271.6L207.1,270.0L207.8,267.4L209.2,265.3L211.0,263.9L213.5,263.1L216.3,263.0L218.4,261.8L220.9,263.3L223.1,264.9L225.1,266.7L227.1,268.5L229.0,270.3L230.9,272.2L232.6,274.1L233.5,273.7L234.3,273.2L235.2,272.7L236.0,272.3L236.9,271.8L236.0,269.4L235.2,267.0L234.4,264.5L233.7,262.0L233.2,259.5L232.7,256.9L232.6,254.2L234.7,253.1L236.2,250.8L238.2,249.2L240.5,248.4L243.0,248.3L245.8,249.1L248.2,248.6L250.0,250.7L251.6,252.9L252.9,255.1L254.2,257.4L255.4,259.7L256.6,262.1L257.6,264.4L258.6,264.2L259.5,264.0L260.5,263.8L261.5,263.6L262.4,263.4L262.4,260.9L262.4,258.3L262.5,255.8L262.7,253.2L263.0,250.6L263.4,248.0L264.1,245.4Z" fill="url(#wall)"/><path transform="matrix(0.9691,0,0,0.9691,8.61,20.44)" d="M266.5,244.9L268.8,243.2L271.1,242.3L273.6,242.2L276.0,242.9L278.4,244.4L280.9,244.6L281.9,247.1L282.6,249.7L283.2,252.2L283.7,254.7L284.0,257.3L284.4,259.8L284.6,262.4L285.6,262.4L286.6,262.5L287.5,262.6L288.5,262.7L289.5,262.8L290.3,260.4L291.1,258.0L292.1,255.6L293.1,253.2L294.2,250.8L295.5,248.5L297.1,246.2L299.5,246.4L302.2,245.5L304.7,245.3L307.1,245.9L309.2,247.2L311.0,249.3L313.3,250.2L313.4,252.9L313.3,255.6L313.0,258.1L312.6,260.7L312.1,263.2L311.5,265.7L310.9,268.2L311.8,268.6L312.7,268.9L313.6,269.3L314.5,269.7L315.4,270.1L317.0,268.0L318.6,265.9L320.3,263.9L322.0,261.9L323.9,260.0L325.9,258.1L328.2,256.4L330.4,257.4L333.3,257.2L335.7,257.8L337.8,259.0L339.3,260.9L340.4,263.4L342.2,264.9L341.4,267.6L340.4,270.0L339.3,272.4L338.1,274.7L336.8,277.0L335.4,279.2L334.0,281.4L334.8,282.0L335.5,282.6L336.2,283.2L337.0,283.8L337.7,284.5L339.9,282.9L342.1,281.4L344.4,280.0L346.7,278.6L349.1,277.3L351.6,276.1L354.3,275.1L356.1,276.7L358.9,277.4L361.1,278.6L362.6,280.4L363.5,282.7L363.6,285.4L364.9,287.3L363.3,289.6L361.5,291.6L359.6,293.6L357.7,295.4L355.7,297.2L353.7,298.9L351.7,300.6L352.2,301.4L352.7,302.2L353.2,303.0L353.6,303.8L354.1,304.6L356.7,303.7L359.3,303.0L361.9,302.3L364.6,301.6L367.3,301.1L370.1,300.7L373.0,300.5L374.2,302.5L376.6,304.0L378.3,305.8L379.2,307.9L379.2,310.3L378.5,312.9L379.0,315.1L376.7,316.8L374.4,318.3L372.0,319.6L369.5,320.8L367.1,321.9L364.6,322.9L362.1,324.0L362.3,324.8L362.5,325.7L362.7,326.6L362.9,327.5L363.1,328.4L365.8,328.4L368.5,328.4L371.3,328.5L374.0,328.7L376.8,328.9L379.6,329.4L382.4,330.0L382.9,332.3L384.7,334.4L385.7,336.6L385.8,338.9L385.1,341.2L383.5,343.4L383.3,345.7L380.6,346.6L377.8,347.3L375.1,347.9L372.4,348.3L369.7,348.7L367.0,348.9L364.2,349.2L364.2,350.1L364.1,351.0L364.0,351.9L363.9,352.8L363.7,353.7L366.3,354.5L368.9,355.3L371.5,356.2L374.1,357.1L376.6,358.2L379.1,359.4L381.6,360.8L381.3,363.1L382.3,365.6L382.5,368.0L381.9,370.2L380.5,372.2L378.2,373.9L377.2,376.0L374.3,376.1L371.5,376.0L368.7,375.7L366.0,375.3L363.3,374.9L360.6,374.4L358.0,373.8L357.6,374.6L357.2,375.5L356.8,376.3L356.4,377.1L356.0,378.0L358.2,379.4L360.4,381.0L362.6,382.5L364.7,384.2L366.8,385.9L368.8,387.8L370.6,389.9L369.6,392.0L369.7,394.7L369.2,397.0L367.8,398.9L365.8,400.4L363.1,401.3L361.5,403.0L358.7,402.3L356.0,401.4L353.5,400.3L351.0,399.2L348.6,398.0L346.2,396.7L343.9,395.4L343.3,396.1L342.6,396.8L342.0,397.5L341.3,398.1L340.6,398.8L342.2,400.8L343.8,402.9L345.4,405.0L346.8,407.2L348.2,409.5L349.5,411.8L350.6,414.4L348.9,416.0L348.2,418.6L346.8,420.7L345.0,422.1L342.5,422.9L339.7,423.0L337.6,424.2L335.1,422.7L332.9,421.1L330.9,419.3L328.9,417.5L327.0,415.7L325.1,413.8L323.4,411.9L322.5,412.3L321.7,412.8L320.8,413.3L320.0,413.7L319.1,414.2L320.0,416.6L320.8,419.0L321.6,421.5L322.3,424.0L322.8,426.5L323.3,429.1L323.4,431.8L321.3,432.9L319.8,435.2L317.8,436.8L315.5,437.6L313.0,437.7L310.2,436.9L307.8,437.4L306.0,435.3L304.4,433.1L303.1,430.9L301.8,428.6L300.6,426.3L299.4,423.9L298.4,421.6L297.4,421.8L296.5,422.0L295.5,422.2L294.5,422.4L293.6,422.6L293.6,425.1L293.6,427.7L293.5,430.2L293.3,432.8L293.0,435.4L292.6,438.0L291.9,440.6L289.5,441.1L287.2,442.8L284.9,443.7L282.4,443.8L280.0,443.1L277.6,441.6L275.1,441.4L274.1,438.9L273.4,436.3L272.8,433.8L272.3,431.3L272.0,428.7L271.6,426.2L271.4,423.6L270.4,423.6L269.4,423.5L268.5,423.4L267.5,423.3L266.5,423.2L265.7,425.6L264.9,428.0L263.9,430.4L262.9,432.8L261.8,435.2L260.5,437.5L258.9,439.8L256.5,439.6L253.8,440.5L251.3,440.7L248.9,440.1L246.8,438.8L245.0,436.7L242.7,435.8L242.6,433.1L242.7,430.4L243.0,427.9L243.4,425.3L243.9,422.8L244.5,420.3L245.1,417.8L244.2,417.4L243.3,417.1L242.4,416.7L241.5,416.3L240.6,415.9L239.0,418.0L237.4,420.1L235.7,422.1L234.0,424.1L232.1,426.0L230.1,427.9L227.8,429.6L225.6,428.6L222.7,428.8L220.3,428.2L218.2,427.0L216.7,425.1L215.6,422.6L213.8,421.1L214.6,418.4L215.6,416.0L216.7,413.6L217.9,411.3L219.2,409.0L220.6,406.8L222.0,404.6L221.2,404.0L220.5,403.4L219.8,402.8L219.0,402.2L218.3,401.5L216.1,403.1L213.9,404.6L211.6,406.0L209.3,407.4L206.9,408.7L204.4,409.9L201.7,410.9L199.9,409.3L197.1,408.6L194.9,407.4L193.4,405.6L192.5,403.3L192.4,400.6L191.1,398.7L192.7,396.4L194.5,394.4L196.4,392.4L198.3,390.6L200.3,388.8L202.3,387.1L204.3,385.4L203.8,384.6L203.3,383.8L202.8,383.0L202.4,382.2L201.9,381.4L199.3,382.3L196.7,383.0L194.1,383.7L191.4,384.4L188.7,384.9L185.9,385.3L183.0,385.5L181.8,383.5L179.4,382.0L177.7,380.2L176.8,378.1L176.8,375.7L177.5,373.1L177.0,370.9L179.3,369.2L181.6,367.7L184.0,366.4L186.5,365.2L188.9,364.1L191.4,363.1L193.9,362.0L193.7,361.2L193.5,360.3L193.3,359.4L193.1,358.5L192.9,357.6L190.2,357.6L187.5,357.6L184.7,357.5L182.0,357.3L179.2,357.1L176.4,356.6L173.6,356.0L173.1,353.7L171.3,351.6L170.3,349.4L170.2,347.1L170.9,344.8L172.5,342.6L172.7,340.3L175.4,339.4L178.2,338.7L180.9,338.1L183.6,337.7L186.3,337.3L189.0,337.1L191.8,336.8L191.8,335.9L191.9,335.0L192.0,334.1L192.1,333.2L192.3,332.3L189.7,331.5L187.1,330.7L184.5,329.8L181.9,328.9L179.4,327.8L176.9,326.6L174.4,325.2L174.7,322.9L173.7,320.4L173.5,318.0L174.1,315.8L175.5,313.8L177.8,312.1L178.8,310.0L181.7,309.9L184.5,310.0L187.3,310.3L190.0,310.7L192.7,311.1L195.4,311.6L198.0,312.2L198.4,311.4L198.8,310.5L199.2,309.7L199.6,308.9L200.0,308.0L197.8,306.6L195.6,305.0L193.4,303.5L191.3,301.8L189.2,300.1L187.2,298.2L185.4,296.1L186.4,294.0L186.3,291.3L186.8,289.0L188.2,287.1L190.2,285.6L192.9,284.7L194.5,283.0L197.3,283.7L200.0,284.6L202.5,285.7L205.0,286.8L207.4,288.0L209.8,289.3L212.1,290.6L212.7,289.9L213.4,289.2L214.0,288.5L214.7,287.9L215.4,287.2L213.8,285.2L212.2,283.1L210.6,281.0L209.2,278.8L207.8,276.5L206.5,274.2L205.4,271.6L207.1,270.0L207.8,267.4L209.2,265.3L211.0,263.9L213.5,263.1L216.3,263.0L218.4,261.8L220.9,263.3L223.1,264.9L225.1,266.7L227.1,268.5L229.0,270.3L230.9,272.2L232.6,274.1L233.5,273.7L234.3,273.2L235.2,272.7L236.0,272.3L236.9,271.8L236.0,269.4L235.2,267.0L234.4,264.5L233.7,262.0L233.2,259.5L232.7,256.9L232.6,254.2L234.7,253.1L236.2,250.8L238.2,249.2L240.5,248.4L243.0,248.3L245.8,249.1L248.2,248.6L250.0,250.7L251.6,252.9L252.9,255.1L254.2,257.4L255.4,259.7L256.6,262.1L257.6,264.4L258.6,264.2L259.5,264.0L260.5,263.8L261.5,263.6L262.4,263.4L262.4,260.9L262.4,258.3L262.5,255.8L262.7,253.2L263.0,250.6L263.4,248.0L264.1,245.4Z" fill="url(#wall)"/><path transform="matrix(0.9715,0,0,0.9715,7.95,18.87)" d="M266.5,244.9L268.8,243.2L271.1,242.3L273.6,242.2L276.0,242.9L278.4,244.4L280.9,244.6L281.9,247.1L282.6,249.7L283.2,252.2L283.7,254.7L284.0,257.3L284.4,259.8L284.6,262.4L285.6,262.4L286.6,262.5L287.5,262.6L288.5,262.7L289.5,262.8L290.3,260.4L291.1,258.0L292.1,255.6L293.1,253.2L294.2,250.8L295.5,248.5L297.1,246.2L299.5,246.4L302.2,245.5L304.7,245.3L307.1,245.9L309.2,247.2L311.0,249.3L313.3,250.2L313.4,252.9L313.3,255.6L313.0,258.1L312.6,260.7L312.1,263.2L311.5,265.7L310.9,268.2L311.8,268.6L312.7,268.9L313.6,269.3L314.5,269.7L315.4,270.1L317.0,268.0L318.6,265.9L320.3,263.9L322.0,261.9L323.9,260.0L325.9,258.1L328.2,256.4L330.4,257.4L333.3,257.2L335.7,257.8L337.8,259.0L339.3,260.9L340.4,263.4L342.2,264.9L341.4,267.6L340.4,270.0L339.3,272.4L338.1,274.7L336.8,277.0L335.4,279.2L334.0,281.4L334.8,282.0L335.5,282.6L336.2,283.2L337.0,283.8L337.7,284.5L339.9,282.9L342.1,281.4L344.4,280.0L346.7,278.6L349.1,277.3L351.6,276.1L354.3,275.1L356.1,276.7L358.9,277.4L361.1,278.6L362.6,280.4L363.5,282.7L363.6,285.4L364.9,287.3L363.3,289.6L361.5,291.6L359.6,293.6L357.7,295.4L355.7,297.2L353.7,298.9L351.7,300.6L352.2,301.4L352.7,302.2L353.2,303.0L353.6,303.8L354.1,304.6L356.7,303.7L359.3,303.0L361.9,302.3L364.6,301.6L367.3,301.1L370.1,300.7L373.0,300.5L374.2,302.5L376.6,304.0L378.3,305.8L379.2,307.9L379.2,310.3L378.5,312.9L379.0,315.1L376.7,316.8L374.4,318.3L372.0,319.6L369.5,320.8L367.1,321.9L364.6,322.9L362.1,324.0L362.3,324.8L362.5,325.7L362.7,326.6L362.9,327.5L363.1,328.4L365.8,328.4L368.5,328.4L371.3,328.5L374.0,328.7L376.8,328.9L379.6,329.4L382.4,330.0L382.9,332.3L384.7,334.4L385.7,336.6L385.8,338.9L385.1,341.2L383.5,343.4L383.3,345.7L380.6,346.6L377.8,347.3L375.1,347.9L372.4,348.3L369.7,348.7L367.0,348.9L364.2,349.2L364.2,350.1L364.1,351.0L364.0,351.9L363.9,352.8L363.7,353.7L366.3,354.5L368.9,355.3L371.5,356.2L374.1,357.1L376.6,358.2L379.1,359.4L381.6,360.8L381.3,363.1L382.3,365.6L382.5,368.0L381.9,370.2L380.5,372.2L378.2,373.9L377.2,376.0L374.3,376.1L371.5,376.0L368.7,375.7L366.0,375.3L363.3,374.9L360.6,374.4L358.0,373.8L357.6,374.6L357.2,375.5L356.8,376.3L356.4,377.1L356.0,378.0L358.2,379.4L360.4,381.0L362.6,382.5L364.7,384.2L366.8,385.9L368.8,387.8L370.6,389.9L369.6,392.0L369.7,394.7L369.2,397.0L367.8,398.9L365.8,400.4L363.1,401.3L361.5,403.0L358.7,402.3L356.0,401.4L353.5,400.3L351.0,399.2L348.6,398.0L346.2,396.7L343.9,395.4L343.3,396.1L342.6,396.8L342.0,397.5L341.3,398.1L340.6,398.8L342.2,400.8L343.8,402.9L345.4,405.0L346.8,407.2L348.2,409.5L349.5,411.8L350.6,414.4L348.9,416.0L348.2,418.6L346.8,420.7L345.0,422.1L342.5,422.9L339.7,423.0L337.6,424.2L335.1,422.7L332.9,421.1L330.9,419.3L328.9,417.5L327.0,415.7L325.1,413.8L323.4,411.9L322.5,412.3L321.7,412.8L320.8,413.3L320.0,413.7L319.1,414.2L320.0,416.6L320.8,419.0L321.6,421.5L322.3,424.0L322.8,426.5L323.3,429.1L323.4,431.8L321.3,432.9L319.8,435.2L317.8,436.8L315.5,437.6L313.0,437.7L310.2,436.9L307.8,437.4L306.0,435.3L304.4,433.1L303.1,430.9L301.8,428.6L300.6,426.3L299.4,423.9L298.4,421.6L297.4,421.8L296.5,422.0L295.5,422.2L294.5,422.4L293.6,422.6L293.6,425.1L293.6,427.7L293.5,430.2L293.3,432.8L293.0,435.4L292.6,438.0L291.9,440.6L289.5,441.1L287.2,442.8L284.9,443.7L282.4,443.8L280.0,443.1L277.6,441.6L275.1,441.4L274.1,438.9L273.4,436.3L272.8,433.8L272.3,431.3L272.0,428.7L271.6,426.2L271.4,423.6L270.4,423.6L269.4,423.5L268.5,423.4L267.5,423.3L266.5,423.2L265.7,425.6L264.9,428.0L263.9,430.4L262.9,432.8L261.8,435.2L260.5,437.5L258.9,439.8L256.5,439.6L253.8,440.5L251.3,440.7L248.9,440.1L246.8,438.8L245.0,436.7L242.7,435.8L242.6,433.1L242.7,430.4L243.0,427.9L243.4,425.3L243.9,422.8L244.5,420.3L245.1,417.8L244.2,417.4L243.3,417.1L242.4,416.7L241.5,416.3L240.6,415.9L239.0,418.0L237.4,420.1L235.7,422.1L234.0,424.1L232.1,426.0L230.1,427.9L227.8,429.6L225.6,428.6L222.7,428.8L220.3,428.2L218.2,427.0L216.7,425.1L215.6,422.6L213.8,421.1L214.6,418.4L215.6,416.0L216.7,413.6L217.9,411.3L219.2,409.0L220.6,406.8L222.0,404.6L221.2,404.0L220.5,403.4L219.8,402.8L219.0,402.2L218.3,401.5L216.1,403.1L213.9,404.6L211.6,406.0L209.3,407.4L206.9,408.7L204.4,409.9L201.7,410.9L199.9,409.3L197.1,408.6L194.9,407.4L193.4,405.6L192.5,403.3L192.4,400.6L191.1,398.7L192.7,396.4L194.5,394.4L196.4,392.4L198.3,390.6L200.3,388.8L202.3,387.1L204.3,385.4L203.8,384.6L203.3,383.8L202.8,383.0L202.4,382.2L201.9,381.4L199.3,382.3L196.7,383.0L194.1,383.7L191.4,384.4L188.7,384.9L185.9,385.3L183.0,385.5L181.8,383.5L179.4,382.0L177.7,380.2L176.8,378.1L176.8,375.7L177.5,373.1L177.0,370.9L179.3,369.2L181.6,367.7L184.0,366.4L186.5,365.2L188.9,364.1L191.4,363.1L193.9,362.0L193.7,361.2L193.5,360.3L193.3,359.4L193.1,358.5L192.9,357.6L190.2,357.6L187.5,357.6L184.7,357.5L182.0,357.3L179.2,357.1L176.4,356.6L173.6,356.0L173.1,353.7L171.3,351.6L170.3,349.4L170.2,347.1L170.9,344.8L172.5,342.6L172.7,340.3L175.4,339.4L178.2,338.7L180.9,338.1L183.6,337.7L186.3,337.3L189.0,337.1L191.8,336.8L191.8,335.9L191.9,335.0L192.0,334.1L192.1,333.2L192.3,332.3L189.7,331.5L187.1,330.7L184.5,329.8L181.9,328.9L179.4,327.8L176.9,326.6L174.4,325.2L174.7,322.9L173.7,320.4L173.5,318.0L174.1,315.8L175.5,313.8L177.8,312.1L178.8,310.0L181.7,309.9L184.5,310.0L187.3,310.3L190.0,310.7L192.7,311.1L195.4,311.6L198.0,312.2L198.4,311.4L198.8,310.5L199.2,309.7L199.6,308.9L200.0,308.0L197.8,306.6L195.6,305.0L193.4,303.5L191.3,301.8L189.2,300.1L187.2,298.2L185.4,296.1L186.4,294.0L186.3,291.3L186.8,289.0L188.2,287.1L190.2,285.6L192.9,284.7L194.5,283.0L197.3,283.7L200.0,284.6L202.5,285.7L205.0,286.8L207.4,288.0L209.8,289.3L212.1,290.6L212.7,289.9L213.4,289.2L214.0,288.5L214.7,287.9L215.4,287.2L213.8,285.2L212.2,283.1L210.6,281.0L209.2,278.8L207.8,276.5L206.5,274.2L205.4,271.6L207.1,270.0L207.8,267.4L209.2,265.3L211.0,263.9L213.5,263.1L216.3,263.0L218.4,261.8L220.9,263.3L223.1,264.9L225.1,266.7L227.1,268.5L229.0,270.3L230.9,272.2L232.6,274.1L233.5,273.7L234.3,273.2L235.2,272.7L236.0,272.3L236.9,271.8L236.0,269.4L235.2,267.0L234.4,264.5L233.7,262.0L233.2,259.5L232.7,256.9L232.6,254.2L234.7,253.1L236.2,250.8L238.2,249.2L240.5,248.4L243.0,248.3L245.8,249.1L248.2,248.6L250.0,250.7L251.6,252.9L252.9,255.1L254.2,257.4L255.4,259.7L256.6,262.1L257.6,264.4L258.6,264.2L259.5,264.0L260.5,263.8L261.5,263.6L262.4,263.4L262.4,260.9L262.4,258.3L262.5,255.8L262.7,253.2L263.0,250.6L263.4,248.0L264.1,245.4Z" fill="url(#wall)"/><path transform="matrix(0.9739,0,0,0.9739,7.29,17.29)" d="M266.5,244.9L268.8,243.2L271.1,242.3L273.6,242.2L276.0,242.9L278.4,244.4L280.9,244.6L281.9,247.1L282.6,249.7L283.2,252.2L283.7,254.7L284.0,257.3L284.4,259.8L284.6,262.4L285.6,262.4L286.6,262.5L287.5,262.6L288.5,262.7L289.5,262.8L290.3,260.4L291.1,258.0L292.1,255.6L293.1,253.2L294.2,250.8L295.5,248.5L297.1,246.2L299.5,246.4L302.2,245.5L304.7,245.3L307.1,245.9L309.2,247.2L311.0,249.3L313.3,250.2L313.4,252.9L313.3,255.6L313.0,258.1L312.6,260.7L312.1,263.2L311.5,265.7L310.9,268.2L311.8,268.6L312.7,268.9L313.6,269.3L314.5,269.7L315.4,270.1L317.0,268.0L318.6,265.9L320.3,263.9L322.0,261.9L323.9,260.0L325.9,258.1L328.2,256.4L330.4,257.4L333.3,257.2L335.7,257.8L337.8,259.0L339.3,260.9L340.4,263.4L342.2,264.9L341.4,267.6L340.4,270.0L339.3,272.4L338.1,274.7L336.8,277.0L335.4,279.2L334.0,281.4L334.8,282.0L335.5,282.6L336.2,283.2L337.0,283.8L337.7,284.5L339.9,282.9L342.1,281.4L344.4,280.0L346.7,278.6L349.1,277.3L351.6,276.1L354.3,275.1L356.1,276.7L358.9,277.4L361.1,278.6L362.6,280.4L363.5,282.7L363.6,285.4L364.9,287.3L363.3,289.6L361.5,291.6L359.6,293.6L357.7,295.4L355.7,297.2L353.7,298.9L351.7,300.6L352.2,301.4L352.7,302.2L353.2,303.0L353.6,303.8L354.1,304.6L356.7,303.7L359.3,303.0L361.9,302.3L364.6,301.6L367.3,301.1L370.1,300.7L373.0,300.5L374.2,302.5L376.6,304.0L378.3,305.8L379.2,307.9L379.2,310.3L378.5,312.9L379.0,315.1L376.7,316.8L374.4,318.3L372.0,319.6L369.5,320.8L367.1,321.9L364.6,322.9L362.1,324.0L362.3,324.8L362.5,325.7L362.7,326.6L362.9,327.5L363.1,328.4L365.8,328.4L368.5,328.4L371.3,328.5L374.0,328.7L376.8,328.9L379.6,329.4L382.4,330.0L382.9,332.3L384.7,334.4L385.7,336.6L385.8,338.9L385.1,341.2L383.5,343.4L383.3,345.7L380.6,346.6L377.8,347.3L375.1,347.9L372.4,348.3L369.7,348.7L367.0,348.9L364.2,349.2L364.2,350.1L364.1,351.0L364.0,351.9L363.9,352.8L363.7,353.7L366.3,354.5L368.9,355.3L371.5,356.2L374.1,357.1L376.6,358.2L379.1,359.4L381.6,360.8L381.3,363.1L382.3,365.6L382.5,368.0L381.9,370.2L380.5,372.2L378.2,373.9L377.2,376.0L374.3,376.1L371.5,376.0L368.7,375.7L366.0,375.3L363.3,374.9L360.6,374.4L358.0,373.8L357.6,374.6L357.2,375.5L356.8,376.3L356.4,377.1L356.0,378.0L358.2,379.4L360.4,381.0L362.6,382.5L364.7,384.2L366.8,385.9L368.8,387.8L370.6,389.9L369.6,392.0L369.7,394.7L369.2,397.0L367.8,398.9L365.8,400.4L363.1,401.3L361.5,403.0L358.7,402.3L356.0,401.4L353.5,400.3L351.0,399.2L348.6,398.0L346.2,396.7L343.9,395.4L343.3,396.1L342.6,396.8L342.0,397.5L341.3,398.1L340.6,398.8L342.2,400.8L343.8,402.9L345.4,405.0L346.8,407.2L348.2,409.5L349.5,411.8L350.6,414.4L348.9,416.0L348.2,418.6L346.8,420.7L345.0,422.1L342.5,422.9L339.7,423.0L337.6,424.2L335.1,422.7L332.9,421.1L330.9,419.3L328.9,417.5L327.0,415.7L325.1,413.8L323.4,411.9L322.5,412.3L321.7,412.8L320.8,413.3L320.0,413.7L319.1,414.2L320.0,416.6L320.8,419.0L321.6,421.5L322.3,424.0L322.8,426.5L323.3,429.1L323.4,431.8L321.3,432.9L319.8,435.2L317.8,436.8L315.5,437.6L313.0,437.7L310.2,436.9L307.8,437.4L306.0,435.3L304.4,433.1L303.1,430.9L301.8,428.6L300.6,426.3L299.4,423.9L298.4,421.6L297.4,421.8L296.5,422.0L295.5,422.2L294.5,422.4L293.6,422.6L293.6,425.1L293.6,427.7L293.5,430.2L293.3,432.8L293.0,435.4L292.6,438.0L291.9,440.6L289.5,441.1L287.2,442.8L284.9,443.7L282.4,443.8L280.0,443.1L277.6,441.6L275.1,441.4L274.1,438.9L273.4,436.3L272.8,433.8L272.3,431.3L272.0,428.7L271.6,426.2L271.4,423.6L270.4,423.6L269.4,423.5L268.5,423.4L267.5,423.3L266.5,423.2L265.7,425.6L264.9,428.0L263.9,430.4L262.9,432.8L261.8,435.2L260.5,437.5L258.9,439.8L256.5,439.6L253.8,440.5L251.3,440.7L248.9,440.1L246.8,438.8L245.0,436.7L242.7,435.8L242.6,433.1L242.7,430.4L243.0,427.9L243.4,425.3L243.9,422.8L244.5,420.3L245.1,417.8L244.2,417.4L243.3,417.1L242.4,416.7L241.5,416.3L240.6,415.9L239.0,418.0L237.4,420.1L235.7,422.1L234.0,424.1L232.1,426.0L230.1,427.9L227.8,429.6L225.6,428.6L222.7,428.8L220.3,428.2L218.2,427.0L216.7,425.1L215.6,422.6L213.8,421.1L214.6,418.4L215.6,416.0L216.7,413.6L217.9,411.3L219.2,409.0L220.6,406.8L222.0,404.6L221.2,404.0L220.5,403.4L219.8,402.8L219.0,402.2L218.3,401.5L216.1,403.1L213.9,404.6L211.6,406.0L209.3,407.4L206.9,408.7L204.4,409.9L201.7,410.9L199.9,409.3L197.1,408.6L194.9,407.4L193.4,405.6L192.5,403.3L192.4,400.6L191.1,398.7L192.7,396.4L194.5,394.4L196.4,392.4L198.3,390.6L200.3,388.8L202.3,387.1L204.3,385.4L203.8,384.6L203.3,383.8L202.8,383.0L202.4,382.2L201.9,381.4L199.3,382.3L196.7,383.0L194.1,383.7L191.4,384.4L188.7,384.9L185.9,385.3L183.0,385.5L181.8,383.5L179.4,382.0L177.7,380.2L176.8,378.1L176.8,375.7L177.5,373.1L177.0,370.9L179.3,369.2L181.6,367.7L184.0,366.4L186.5,365.2L188.9,364.1L191.4,363.1L193.9,362.0L193.7,361.2L193.5,360.3L193.3,359.4L193.1,358.5L192.9,357.6L190.2,357.6L187.5,357.6L184.7,357.5L182.0,357.3L179.2,357.1L176.4,356.6L173.6,356.0L173.1,353.7L171.3,351.6L170.3,349.4L170.2,347.1L170.9,344.8L172.5,342.6L172.7,340.3L175.4,339.4L178.2,338.7L180.9,338.1L183.6,337.7L186.3,337.3L189.0,337.1L191.8,336.8L191.8,335.9L191.9,335.0L192.0,334.1L192.1,333.2L192.3,332.3L189.7,331.5L187.1,330.7L184.5,329.8L181.9,328.9L179.4,327.8L176.9,326.6L174.4,325.2L174.7,322.9L173.7,320.4L173.5,318.0L174.1,315.8L175.5,313.8L177.8,312.1L178.8,310.0L181.7,309.9L184.5,310.0L187.3,310.3L190.0,310.7L192.7,311.1L195.4,311.6L198.0,312.2L198.4,311.4L198.8,310.5L199.2,309.7L199.6,308.9L200.0,308.0L197.8,306.6L195.6,305.0L193.4,303.5L191.3,301.8L189.2,300.1L187.2,298.2L185.4,296.1L186.4,294.0L186.3,291.3L186.8,289.0L188.2,287.1L190.2,285.6L192.9,284.7L194.5,283.0L197.3,283.7L200.0,284.6L202.5,285.7L205.0,286.8L207.4,288.0L209.8,289.3L212.1,290.6L212.7,289.9L213.4,289.2L214.0,288.5L214.7,287.9L215.4,287.2L213.8,285.2L212.2,283.1L210.6,281.0L209.2,278.8L207.8,276.5L206.5,274.2L205.4,271.6L207.1,270.0L207.8,267.4L209.2,265.3L211.0,263.9L213.5,263.1L216.3,263.0L218.4,261.8L220.9,263.3L223.1,264.9L225.1,266.7L227.1,268.5L229.0,270.3L230.9,272.2L232.6,274.1L233.5,273.7L234.3,273.2L235.2,272.7L236.0,272.3L236.9,271.8L236.0,269.4L235.2,267.0L234.4,264.5L233.7,262.0L233.2,259.5L232.7,256.9L232.6,254.2L234.7,253.1L236.2,250.8L238.2,249.2L240.5,248.4L243.0,248.3L245.8,249.1L248.2,248.6L250.0,250.7L251.6,252.9L252.9,255.1L254.2,257.4L255.4,259.7L256.6,262.1L257.6,264.4L258.6,264.2L259.5,264.0L260.5,263.8L261.5,263.6L262.4,263.4L262.4,260.9L262.4,258.3L262.5,255.8L262.7,253.2L263.0,250.6L263.4,248.0L264.1,245.4Z" fill="url(#wall)"/><path transform="matrix(0.9762,0,0,0.9762,6.63,15.72)" d="M266.5,244.9L268.8,243.2L271.1,242.3L273.6,242.2L276.0,242.9L278.4,244.4L280.9,244.6L281.9,247.1L282.6,249.7L283.2,252.2L283.7,254.7L284.0,257.3L284.4,259.8L284.6,262.4L285.6,262.4L286.6,262.5L287.5,262.6L288.5,262.7L289.5,262.8L290.3,260.4L291.1,258.0L292.1,255.6L293.1,253.2L294.2,250.8L295.5,248.5L297.1,246.2L299.5,246.4L302.2,245.5L304.7,245.3L307.1,245.9L309.2,247.2L311.0,249.3L313.3,250.2L313.4,252.9L313.3,255.6L313.0,258.1L312.6,260.7L312.1,263.2L311.5,265.7L310.9,268.2L311.8,268.6L312.7,268.9L313.6,269.3L314.5,269.7L315.4,270.1L317.0,268.0L318.6,265.9L320.3,263.9L322.0,261.9L323.9,260.0L325.9,258.1L328.2,256.4L330.4,257.4L333.3,257.2L335.7,257.8L337.8,259.0L339.3,260.9L340.4,263.4L342.2,264.9L341.4,267.6L340.4,270.0L339.3,272.4L338.1,274.7L336.8,277.0L335.4,279.2L334.0,281.4L334.8,282.0L335.5,282.6L336.2,283.2L337.0,283.8L337.7,284.5L339.9,282.9L342.1,281.4L344.4,280.0L346.7,278.6L349.1,277.3L351.6,276.1L354.3,275.1L356.1,276.7L358.9,277.4L361.1,278.6L362.6,280.4L363.5,282.7L363.6,285.4L364.9,287.3L363.3,289.6L361.5,291.6L359.6,293.6L357.7,295.4L355.7,297.2L353.7,298.9L351.7,300.6L352.2,301.4L352.7,302.2L353.2,303.0L353.6,303.8L354.1,304.6L356.7,303.7L359.3,303.0L361.9,302.3L364.6,301.6L367.3,301.1L370.1,300.7L373.0,300.5L374.2,302.5L376.6,304.0L378.3,305.8L379.2,307.9L379.2,310.3L378.5,312.9L379.0,315.1L376.7,316.8L374.4,318.3L372.0,319.6L369.5,320.8L367.1,321.9L364.6,322.9L362.1,324.0L362.3,324.8L362.5,325.7L362.7,326.6L362.9,327.5L363.1,328.4L365.8,328.4L368.5,328.4L371.3,328.5L374.0,328.7L376.8,328.9L379.6,329.4L382.4,330.0L382.9,332.3L384.7,334.4L385.7,336.6L385.8,338.9L385.1,341.2L383.5,343.4L383.3,345.7L380.6,346.6L377.8,347.3L375.1,347.9L372.4,348.3L369.7,348.7L367.0,348.9L364.2,349.2L364.2,350.1L364.1,351.0L364.0,351.9L363.9,352.8L363.7,353.7L366.3,354.5L368.9,355.3L371.5,356.2L374.1,357.1L376.6,358.2L379.1,359.4L381.6,360.8L381.3,363.1L382.3,365.6L382.5,368.0L381.9,370.2L380.5,372.2L378.2,373.9L377.2,376.0L374.3,376.1L371.5,376.0L368.7,375.7L366.0,375.3L363.3,374.9L360.6,374.4L358.0,373.8L357.6,374.6L357.2,375.5L356.8,376.3L356.4,377.1L356.0,378.0L358.2,379.4L360.4,381.0L362.6,382.5L364.7,384.2L366.8,385.9L368.8,387.8L370.6,389.9L369.6,392.0L369.7,394.7L369.2,397.0L367.8,398.9L365.8,400.4L363.1,401.3L361.5,403.0L358.7,402.3L356.0,401.4L353.5,400.3L351.0,399.2L348.6,398.0L346.2,396.7L343.9,395.4L343.3,396.1L342.6,396.8L342.0,397.5L341.3,398.1L340.6,398.8L342.2,400.8L343.8,402.9L345.4,405.0L346.8,407.2L348.2,409.5L349.5,411.8L350.6,414.4L348.9,416.0L348.2,418.6L346.8,420.7L345.0,422.1L342.5,422.9L339.7,423.0L337.6,424.2L335.1,422.7L332.9,421.1L330.9,419.3L328.9,417.5L327.0,415.7L325.1,413.8L323.4,411.9L322.5,412.3L321.7,412.8L320.8,413.3L320.0,413.7L319.1,414.2L320.0,416.6L320.8,419.0L321.6,421.5L322.3,424.0L322.8,426.5L323.3,429.1L323.4,431.8L321.3,432.9L319.8,435.2L317.8,436.8L315.5,437.6L313.0,437.7L310.2,436.9L307.8,437.4L306.0,435.3L304.4,433.1L303.1,430.9L301.8,428.6L300.6,426.3L299.4,423.9L298.4,421.6L297.4,421.8L296.5,422.0L295.5,422.2L294.5,422.4L293.6,422.6L293.6,425.1L293.6,427.7L293.5,430.2L293.3,432.8L293.0,435.4L292.6,438.0L291.9,440.6L289.5,441.1L287.2,442.8L284.9,443.7L282.4,443.8L280.0,443.1L277.6,441.6L275.1,441.4L274.1,438.9L273.4,436.3L272.8,433.8L272.3,431.3L272.0,428.7L271.6,426.2L271.4,423.6L270.4,423.6L269.4,423.5L268.5,423.4L267.5,423.3L266.5,423.2L265.7,425.6L264.9,428.0L263.9,430.4L262.9,432.8L261.8,435.2L260.5,437.5L258.9,439.8L256.5,439.6L253.8,440.5L251.3,440.7L248.9,440.1L246.8,438.8L245.0,436.7L242.7,435.8L242.6,433.1L242.7,430.4L243.0,427.9L243.4,425.3L243.9,422.8L244.5,420.3L245.1,417.8L244.2,417.4L243.3,417.1L242.4,416.7L241.5,416.3L240.6,415.9L239.0,418.0L237.4,420.1L235.7,422.1L234.0,424.1L232.1,426.0L230.1,427.9L227.8,429.6L225.6,428.6L222.7,428.8L220.3,428.2L218.2,427.0L216.7,425.1L215.6,422.6L213.8,421.1L214.6,418.4L215.6,416.0L216.7,413.6L217.9,411.3L219.2,409.0L220.6,406.8L222.0,404.6L221.2,404.0L220.5,403.4L219.8,402.8L219.0,402.2L218.3,401.5L216.1,403.1L213.9,404.6L211.6,406.0L209.3,407.4L206.9,408.7L204.4,409.9L201.7,410.9L199.9,409.3L197.1,408.6L194.9,407.4L193.4,405.6L192.5,403.3L192.4,400.6L191.1,398.7L192.7,396.4L194.5,394.4L196.4,392.4L198.3,390.6L200.3,388.8L202.3,387.1L204.3,385.4L203.8,384.6L203.3,383.8L202.8,383.0L202.4,382.2L201.9,381.4L199.3,382.3L196.7,383.0L194.1,383.7L191.4,384.4L188.7,384.9L185.9,385.3L183.0,385.5L181.8,383.5L179.4,382.0L177.7,380.2L176.8,378.1L176.8,375.7L177.5,373.1L177.0,370.9L179.3,369.2L181.6,367.7L184.0,366.4L186.5,365.2L188.9,364.1L191.4,363.1L193.9,362.0L193.7,361.2L193.5,360.3L193.3,359.4L193.1,358.5L192.9,357.6L190.2,357.6L187.5,357.6L184.7,357.5L182.0,357.3L179.2,357.1L176.4,356.6L173.6,356.0L173.1,353.7L171.3,351.6L170.3,349.4L170.2,347.1L170.9,344.8L172.5,342.6L172.7,340.3L175.4,339.4L178.2,338.7L180.9,338.1L183.6,337.7L186.3,337.3L189.0,337.1L191.8,336.8L191.8,335.9L191.9,335.0L192.0,334.1L192.1,333.2L192.3,332.3L189.7,331.5L187.1,330.7L184.5,329.8L181.9,328.9L179.4,327.8L176.9,326.6L174.4,325.2L174.7,322.9L173.7,320.4L173.5,318.0L174.1,315.8L175.5,313.8L177.8,312.1L178.8,310.0L181.7,309.9L184.5,310.0L187.3,310.3L190.0,310.7L192.7,311.1L195.4,311.6L198.0,312.2L198.4,311.4L198.8,310.5L199.2,309.7L199.6,308.9L200.0,308.0L197.8,306.6L195.6,305.0L193.4,303.5L191.3,301.8L189.2,300.1L187.2,298.2L185.4,296.1L186.4,294.0L186.3,291.3L186.8,289.0L188.2,287.1L190.2,285.6L192.9,284.7L194.5,283.0L197.3,283.7L200.0,284.6L202.5,285.7L205.0,286.8L207.4,288.0L209.8,289.3L212.1,290.6L212.7,289.9L213.4,289.2L214.0,288.5L214.7,287.9L215.4,287.2L213.8,285.2L212.2,283.1L210.6,281.0L209.2,278.8L207.8,276.5L206.5,274.2L205.4,271.6L207.1,270.0L207.8,267.4L209.2,265.3L211.0,263.9L213.5,263.1L216.3,263.0L218.4,261.8L220.9,263.3L223.1,264.9L225.1,266.7L227.1,268.5L229.0,270.3L230.9,272.2L232.6,274.1L233.5,273.7L234.3,273.2L235.2,272.7L236.0,272.3L236.9,271.8L236.0,269.4L235.2,267.0L234.4,264.5L233.7,262.0L233.2,259.5L232.7,256.9L232.6,254.2L234.7,253.1L236.2,250.8L238.2,249.2L240.5,248.4L243.0,248.3L245.8,249.1L248.2,248.6L250.0,250.7L251.6,252.9L252.9,255.1L254.2,257.4L255.4,259.7L256.6,262.1L257.6,264.4L258.6,264.2L259.5,264.0L260.5,263.8L261.5,263.6L262.4,263.4L262.4,260.9L262.4,258.3L262.5,255.8L262.7,253.2L263.0,250.6L263.4,248.0L264.1,245.4Z" fill="url(#wall)"/><path transform="matrix(0.9786,0,0,0.9786,5.96,14.15)" d="M266.5,244.9L268.8,243.2L271.1,242.3L273.6,242.2L276.0,242.9L278.4,244.4L280.9,244.6L281.9,247.1L282.6,249.7L283.2,252.2L283.7,254.7L284.0,257.3L284.4,259.8L284.6,262.4L285.6,262.4L286.6,262.5L287.5,262.6L288.5,262.7L289.5,262.8L290.3,260.4L291.1,258.0L292.1,255.6L293.1,253.2L294.2,250.8L295.5,248.5L297.1,246.2L299.5,246.4L302.2,245.5L304.7,245.3L307.1,245.9L309.2,247.2L311.0,249.3L313.3,250.2L313.4,252.9L313.3,255.6L313.0,258.1L312.6,260.7L312.1,263.2L311.5,265.7L310.9,268.2L311.8,268.6L312.7,268.9L313.6,269.3L314.5,269.7L315.4,270.1L317.0,268.0L318.6,265.9L320.3,263.9L322.0,261.9L323.9,260.0L325.9,258.1L328.2,256.4L330.4,257.4L333.3,257.2L335.7,257.8L337.8,259.0L339.3,260.9L340.4,263.4L342.2,264.9L341.4,267.6L340.4,270.0L339.3,272.4L338.1,274.7L336.8,277.0L335.4,279.2L334.0,281.4L334.8,282.0L335.5,282.6L336.2,283.2L337.0,283.8L337.7,284.5L339.9,282.9L342.1,281.4L344.4,280.0L346.7,278.6L349.1,277.3L351.6,276.1L354.3,275.1L356.1,276.7L358.9,277.4L361.1,278.6L362.6,280.4L363.5,282.7L363.6,285.4L364.9,287.3L363.3,289.6L361.5,291.6L359.6,293.6L357.7,295.4L355.7,297.2L353.7,298.9L351.7,300.6L352.2,301.4L352.7,302.2L353.2,303.0L353.6,303.8L354.1,304.6L356.7,303.7L359.3,303.0L361.9,302.3L364.6,301.6L367.3,301.1L370.1,300.7L373.0,300.5L374.2,302.5L376.6,304.0L378.3,305.8L379.2,307.9L379.2,310.3L378.5,312.9L379.0,315.1L376.7,316.8L374.4,318.3L372.0,319.6L369.5,320.8L367.1,321.9L364.6,322.9L362.1,324.0L362.3,324.8L362.5,325.7L362.7,326.6L362.9,327.5L363.1,328.4L365.8,328.4L368.5,328.4L371.3,328.5L374.0,328.7L376.8,328.9L379.6,329.4L382.4,330.0L382.9,332.3L384.7,334.4L385.7,336.6L385.8,338.9L385.1,341.2L383.5,343.4L383.3,345.7L380.6,346.6L377.8,347.3L375.1,347.9L372.4,348.3L369.7,348.7L367.0,348.9L364.2,349.2L364.2,350.1L364.1,351.0L364.0,351.9L363.9,352.8L363.7,353.7L366.3,354.5L368.9,355.3L371.5,356.2L374.1,357.1L376.6,358.2L379.1,359.4L381.6,360.8L381.3,363.1L382.3,365.6L382.5,368.0L381.9,370.2L380.5,372.2L378.2,373.9L377.2,376.0L374.3,376.1L371.5,376.0L368.7,375.7L366.0,375.3L363.3,374.9L360.6,374.4L358.0,373.8L357.6,374.6L357.2,375.5L356.8,376.3L356.4,377.1L356.0,378.0L358.2,379.4L360.4,381.0L362.6,382.5L364.7,384.2L366.8,385.9L368.8,387.8L370.6,389.9L369.6,392.0L369.7,394.7L369.2,397.0L367.8,398.9L365.8,400.4L363.1,401.3L361.5,403.0L358.7,402.3L356.0,401.4L353.5,400.3L351.0,399.2L348.6,398.0L346.2,396.7L343.9,395.4L343.3,396.1L342.6,396.8L342.0,397.5L341.3,398.1L340.6,398.8L342.2,400.8L343.8,402.9L345.4,405.0L346.8,407.2L348.2,409.5L349.5,411.8L350.6,414.4L348.9,416.0L348.2,418.6L346.8,420.7L345.0,422.1L342.5,422.9L339.7,423.0L337.6,424.2L335.1,422.7L332.9,421.1L330.9,419.3L328.9,417.5L327.0,415.7L325.1,413.8L323.4,411.9L322.5,412.3L321.7,412.8L320.8,413.3L320.0,413.7L319.1,414.2L320.0,416.6L320.8,419.0L321.6,421.5L322.3,424.0L322.8,426.5L323.3,429.1L323.4,431.8L321.3,432.9L319.8,435.2L317.8,436.8L315.5,437.6L313.0,437.7L310.2,436.9L307.8,437.4L306.0,435.3L304.4,433.1L303.1,430.9L301.8,428.6L300.6,426.3L299.4,423.9L298.4,421.6L297.4,421.8L296.5,422.0L295.5,422.2L294.5,422.4L293.6,422.6L293.6,425.1L293.6,427.7L293.5,430.2L293.3,432.8L293.0,435.4L292.6,438.0L291.9,440.6L289.5,441.1L287.2,442.8L284.9,443.7L282.4,443.8L280.0,443.1L277.6,441.6L275.1,441.4L274.1,438.9L273.4,436.3L272.8,433.8L272.3,431.3L272.0,428.7L271.6,426.2L271.4,423.6L270.4,423.6L269.4,423.5L268.5,423.4L267.5,423.3L266.5,423.2L265.7,425.6L264.9,428.0L263.9,430.4L262.9,432.8L261.8,435.2L260.5,437.5L258.9,439.8L256.5,439.6L253.8,440.5L251.3,440.7L248.9,440.1L246.8,438.8L245.0,436.7L242.7,435.8L242.6,433.1L242.7,430.4L243.0,427.9L243.4,425.3L243.9,422.8L244.5,420.3L245.1,417.8L244.2,417.4L243.3,417.1L242.4,416.7L241.5,416.3L240.6,415.9L239.0,418.0L237.4,420.1L235.7,422.1L234.0,424.1L232.1,426.0L230.1,427.9L227.8,429.6L225.6,428.6L222.7,428.8L220.3,428.2L218.2,427.0L216.7,425.1L215.6,422.6L213.8,421.1L214.6,418.4L215.6,416.0L216.7,413.6L217.9,411.3L219.2,409.0L220.6,406.8L222.0,404.6L221.2,404.0L220.5,403.4L219.8,402.8L219.0,402.2L218.3,401.5L216.1,403.1L213.9,404.6L211.6,406.0L209.3,407.4L206.9,408.7L204.4,409.9L201.7,410.9L199.9,409.3L197.1,408.6L194.9,407.4L193.4,405.6L192.5,403.3L192.4,400.6L191.1,398.7L192.7,396.4L194.5,394.4L196.4,392.4L198.3,390.6L200.3,388.8L202.3,387.1L204.3,385.4L203.8,384.6L203.3,383.8L202.8,383.0L202.4,382.2L201.9,381.4L199.3,382.3L196.7,383.0L194.1,383.7L191.4,384.4L188.7,384.9L185.9,385.3L183.0,385.5L181.8,383.5L179.4,382.0L177.7,380.2L176.8,378.1L176.8,375.7L177.5,373.1L177.0,370.9L179.3,369.2L181.6,367.7L184.0,366.4L186.5,365.2L188.9,364.1L191.4,363.1L193.9,362.0L193.7,361.2L193.5,360.3L193.3,359.4L193.1,358.5L192.9,357.6L190.2,357.6L187.5,357.6L184.7,357.5L182.0,357.3L179.2,357.1L176.4,356.6L173.6,356.0L173.1,353.7L171.3,351.6L170.3,349.4L170.2,347.1L170.9,344.8L172.5,342.6L172.7,340.3L175.4,339.4L178.2,338.7L180.9,338.1L183.6,337.7L186.3,337.3L189.0,337.1L191.8,336.8L191.8,335.9L191.9,335.0L192.0,334.1L192.1,333.2L192.3,332.3L189.7,331.5L187.1,330.7L184.5,329.8L181.9,328.9L179.4,327.8L176.9,326.6L174.4,325.2L174.7,322.9L173.7,320.4L173.5,318.0L174.1,315.8L175.5,313.8L177.8,312.1L178.8,310.0L181.7,309.9L184.5,310.0L187.3,310.3L190.0,310.7L192.7,311.1L195.4,311.6L198.0,312.2L198.4,311.4L198.8,310.5L199.2,309.7L199.6,308.9L200.0,308.0L197.8,306.6L195.6,305.0L193.4,303.5L191.3,301.8L189.2,300.1L187.2,298.2L185.4,296.1L186.4,294.0L186.3,291.3L186.8,289.0L188.2,287.1L190.2,285.6L192.9,284.7L194.5,283.0L197.3,283.7L200.0,284.6L202.5,285.7L205.0,286.8L207.4,288.0L209.8,289.3L212.1,290.6L212.7,289.9L213.4,289.2L214.0,288.5L214.7,287.9L215.4,287.2L213.8,285.2L212.2,283.1L210.6,281.0L209.2,278.8L207.8,276.5L206.5,274.2L205.4,271.6L207.1,270.0L207.8,267.4L209.2,265.3L211.0,263.9L213.5,263.1L216.3,263.0L218.4,261.8L220.9,263.3L223.1,264.9L225.1,266.7L227.1,268.5L229.0,270.3L230.9,272.2L232.6,274.1L233.5,273.7L234.3,273.2L235.2,272.7L236.0,272.3L236.9,271.8L236.0,269.4L235.2,267.0L234.4,264.5L233.7,262.0L233.2,259.5L232.7,256.9L232.6,254.2L234.7,253.1L236.2,250.8L238.2,249.2L240.5,248.4L243.0,248.3L245.8,249.1L248.2,248.6L250.0,250.7L251.6,252.9L252.9,255.1L254.2,257.4L255.4,259.7L256.6,262.1L257.6,264.4L258.6,264.2L259.5,264.0L260.5,263.8L261.5,263.6L262.4,263.4L262.4,260.9L262.4,258.3L262.5,255.8L262.7,253.2L263.0,250.6L263.4,248.0L264.1,245.4Z" fill="url(#wall)"/><path transform="matrix(0.9810,0,0,0.9810,5.30,12.58)" d="M266.5,244.9L268.8,243.2L271.1,242.3L273.6,242.2L276.0,242.9L278.4,244.4L280.9,244.6L281.9,247.1L282.6,249.7L283.2,252.2L283.7,254.7L284.0,257.3L284.4,259.8L284.6,262.4L285.6,262.4L286.6,262.5L287.5,262.6L288.5,262.7L289.5,262.8L290.3,260.4L291.1,258.0L292.1,255.6L293.1,253.2L294.2,250.8L295.5,248.5L297.1,246.2L299.5,246.4L302.2,245.5L304.7,245.3L307.1,245.9L309.2,247.2L311.0,249.3L313.3,250.2L313.4,252.9L313.3,255.6L313.0,258.1L312.6,260.7L312.1,263.2L311.5,265.7L310.9,268.2L311.8,268.6L312.7,268.9L313.6,269.3L314.5,269.7L315.4,270.1L317.0,268.0L318.6,265.9L320.3,263.9L322.0,261.9L323.9,260.0L325.9,258.1L328.2,256.4L330.4,257.4L333.3,257.2L335.7,257.8L337.8,259.0L339.3,260.9L340.4,263.4L342.2,264.9L341.4,267.6L340.4,270.0L339.3,272.4L338.1,274.7L336.8,277.0L335.4,279.2L334.0,281.4L334.8,282.0L335.5,282.6L336.2,283.2L337.0,283.8L337.7,284.5L339.9,282.9L342.1,281.4L344.4,280.0L346.7,278.6L349.1,277.3L351.6,276.1L354.3,275.1L356.1,276.7L358.9,277.4L361.1,278.6L362.6,280.4L363.5,282.7L363.6,285.4L364.9,287.3L363.3,289.6L361.5,291.6L359.6,293.6L357.7,295.4L355.7,297.2L353.7,298.9L351.7,300.6L352.2,301.4L352.7,302.2L353.2,303.0L353.6,303.8L354.1,304.6L356.7,303.7L359.3,303.0L361.9,302.3L364.6,301.6L367.3,301.1L370.1,300.7L373.0,300.5L374.2,302.5L376.6,304.0L378.3,305.8L379.2,307.9L379.2,310.3L378.5,312.9L379.0,315.1L376.7,316.8L374.4,318.3L372.0,319.6L369.5,320.8L367.1,321.9L364.6,322.9L362.1,324.0L362.3,324.8L362.5,325.7L362.7,326.6L362.9,327.5L363.1,328.4L365.8,328.4L368.5,328.4L371.3,328.5L374.0,328.7L376.8,328.9L379.6,329.4L382.4,330.0L382.9,332.3L384.7,334.4L385.7,336.6L385.8,338.9L385.1,341.2L383.5,343.4L383.3,345.7L380.6,346.6L377.8,347.3L375.1,347.9L372.4,348.3L369.7,348.7L367.0,348.9L364.2,349.2L364.2,350.1L364.1,351.0L364.0,351.9L363.9,352.8L363.7,353.7L366.3,354.5L368.9,355.3L371.5,356.2L374.1,357.1L376.6,358.2L379.1,359.4L381.6,360.8L381.3,363.1L382.3,365.6L382.5,368.0L381.9,370.2L380.5,372.2L378.2,373.9L377.2,376.0L374.3,376.1L371.5,376.0L368.7,375.7L366.0,375.3L363.3,374.9L360.6,374.4L358.0,373.8L357.6,374.6L357.2,375.5L356.8,376.3L356.4,377.1L356.0,378.0L358.2,379.4L360.4,381.0L362.6,382.5L364.7,384.2L366.8,385.9L368.8,387.8L370.6,389.9L369.6,392.0L369.7,394.7L369.2,397.0L367.8,398.9L365.8,400.4L363.1,401.3L361.5,403.0L358.7,402.3L356.0,401.4L353.5,400.3L351.0,399.2L348.6,398.0L346.2,396.7L343.9,395.4L343.3,396.1L342.6,396.8L342.0,397.5L341.3,398.1L340.6,398.8L342.2,400.8L343.8,402.9L345.4,405.0L346.8,407.2L348.2,409.5L349.5,411.8L350.6,414.4L348.9,416.0L348.2,418.6L346.8,420.7L345.0,422.1L342.5,422.9L339.7,423.0L337.6,424.2L335.1,422.7L332.9,421.1L330.9,419.3L328.9,417.5L327.0,415.7L325.1,413.8L323.4,411.9L322.5,412.3L321.7,412.8L320.8,413.3L320.0,413.7L319.1,414.2L320.0,416.6L320.8,419.0L321.6,421.5L322.3,424.0L322.8,426.5L323.3,429.1L323.4,431.8L321.3,432.9L319.8,435.2L317.8,436.8L315.5,437.6L313.0,437.7L310.2,436.9L307.8,437.4L306.0,435.3L304.4,433.1L303.1,430.9L301.8,428.6L300.6,426.3L299.4,423.9L298.4,421.6L297.4,421.8L296.5,422.0L295.5,422.2L294.5,422.4L293.6,422.6L293.6,425.1L293.6,427.7L293.5,430.2L293.3,432.8L293.0,435.4L292.6,438.0L291.9,440.6L289.5,441.1L287.2,442.8L284.9,443.7L282.4,443.8L280.0,443.1L277.6,441.6L275.1,441.4L274.1,438.9L273.4,436.3L272.8,433.8L272.3,431.3L272.0,428.7L271.6,426.2L271.4,423.6L270.4,423.6L269.4,423.5L268.5,423.4L267.5,423.3L266.5,423.2L265.7,425.6L264.9,428.0L263.9,430.4L262.9,432.8L261.8,435.2L260.5,437.5L258.9,439.8L256.5,439.6L253.8,440.5L251.3,440.7L248.9,440.1L246.8,438.8L245.0,436.7L242.7,435.8L242.6,433.1L242.7,430.4L243.0,427.9L243.4,425.3L243.9,422.8L244.5,420.3L245.1,417.8L244.2,417.4L243.3,417.1L242.4,416.7L241.5,416.3L240.6,415.9L239.0,418.0L237.4,420.1L235.7,422.1L234.0,424.1L232.1,426.0L230.1,427.9L227.8,429.6L225.6,428.6L222.7,428.8L220.3,428.2L218.2,427.0L216.7,425.1L215.6,422.6L213.8,421.1L214.6,418.4L215.6,416.0L216.7,413.6L217.9,411.3L219.2,409.0L220.6,406.8L222.0,404.6L221.2,404.0L220.5,403.4L219.8,402.8L219.0,402.2L218.3,401.5L216.1,403.1L213.9,404.6L211.6,406.0L209.3,407.4L206.9,408.7L204.4,409.9L201.7,410.9L199.9,409.3L197.1,408.6L194.9,407.4L193.4,405.6L192.5,403.3L192.4,400.6L191.1,398.7L192.7,396.4L194.5,394.4L196.4,392.4L198.3,390.6L200.3,388.8L202.3,387.1L204.3,385.4L203.8,384.6L203.3,383.8L202.8,383.0L202.4,382.2L201.9,381.4L199.3,382.3L196.7,383.0L194.1,383.7L191.4,384.4L188.7,384.9L185.9,385.3L183.0,385.5L181.8,383.5L179.4,382.0L177.7,380.2L176.8,378.1L176.8,375.7L177.5,373.1L177.0,370.9L179.3,369.2L181.6,367.7L184.0,366.4L186.5,365.2L188.9,364.1L191.4,363.1L193.9,362.0L193.7,361.2L193.5,360.3L193.3,359.4L193.1,358.5L192.9,357.6L190.2,357.6L187.5,357.6L184.7,357.5L182.0,357.3L179.2,357.1L176.4,356.6L173.6,356.0L173.1,353.7L171.3,351.6L170.3,349.4L170.2,347.1L170.9,344.8L172.5,342.6L172.7,340.3L175.4,339.4L178.2,338.7L180.9,338.1L183.6,337.7L186.3,337.3L189.0,337.1L191.8,336.8L191.8,335.9L191.9,335.0L192.0,334.1L192.1,333.2L192.3,332.3L189.7,331.5L187.1,330.7L184.5,329.8L181.9,328.9L179.4,327.8L176.9,326.6L174.4,325.2L174.7,322.9L173.7,320.4L173.5,318.0L174.1,315.8L175.5,313.8L177.8,312.1L178.8,310.0L181.7,309.9L184.5,310.0L187.3,310.3L190.0,310.7L192.7,311.1L195.4,311.6L198.0,312.2L198.4,311.4L198.8,310.5L199.2,309.7L199.6,308.9L200.0,308.0L197.8,306.6L195.6,305.0L193.4,303.5L191.3,301.8L189.2,300.1L187.2,298.2L185.4,296.1L186.4,294.0L186.3,291.3L186.8,289.0L188.2,287.1L190.2,285.6L192.9,284.7L194.5,283.0L197.3,283.7L200.0,284.6L202.5,285.7L205.0,286.8L207.4,288.0L209.8,289.3L212.1,290.6L212.7,289.9L213.4,289.2L214.0,288.5L214.7,287.9L215.4,287.2L213.8,285.2L212.2,283.1L210.6,281.0L209.2,278.8L207.8,276.5L206.5,274.2L205.4,271.6L207.1,270.0L207.8,267.4L209.2,265.3L211.0,263.9L213.5,263.1L216.3,263.0L218.4,261.8L220.9,263.3L223.1,264.9L225.1,266.7L227.1,268.5L229.0,270.3L230.9,272.2L232.6,274.1L233.5,273.7L234.3,273.2L235.2,272.7L236.0,272.3L236.9,271.8L236.0,269.4L235.2,267.0L234.4,264.5L233.7,262.0L233.2,259.5L232.7,256.9L232.6,254.2L234.7,253.1L236.2,250.8L238.2,249.2L240.5,248.4L243.0,248.3L245.8,249.1L248.2,248.6L250.0,250.7L251.6,252.9L252.9,255.1L254.2,257.4L255.4,259.7L256.6,262.1L257.6,264.4L258.6,264.2L259.5,264.0L260.5,263.8L261.5,263.6L262.4,263.4L262.4,260.9L262.4,258.3L262.5,255.8L262.7,253.2L263.0,250.6L263.4,248.0L264.1,245.4Z" fill="url(#wall)"/><path transform="matrix(0.9834,0,0,0.9834,4.64,11.01)" d="M266.5,244.9L268.8,243.2L271.1,242.3L273.6,242.2L276.0,242.9L278.4,244.4L280.9,244.6L281.9,247.1L282.6,249.7L283.2,252.2L283.7,254.7L284.0,257.3L284.4,259.8L284.6,262.4L285.6,262.4L286.6,262.5L287.5,262.6L288.5,262.7L289.5,262.8L290.3,260.4L291.1,258.0L292.1,255.6L293.1,253.2L294.2,250.8L295.5,248.5L297.1,246.2L299.5,246.4L302.2,245.5L304.7,245.3L307.1,245.9L309.2,247.2L311.0,249.3L313.3,250.2L313.4,252.9L313.3,255.6L313.0,258.1L312.6,260.7L312.1,263.2L311.5,265.7L310.9,268.2L311.8,268.6L312.7,268.9L313.6,269.3L314.5,269.7L315.4,270.1L317.0,268.0L318.6,265.9L320.3,263.9L322.0,261.9L323.9,260.0L325.9,258.1L328.2,256.4L330.4,257.4L333.3,257.2L335.7,257.8L337.8,259.0L339.3,260.9L340.4,263.4L342.2,264.9L341.4,267.6L340.4,270.0L339.3,272.4L338.1,274.7L336.8,277.0L335.4,279.2L334.0,281.4L334.8,282.0L335.5,282.6L336.2,283.2L337.0,283.8L337.7,284.5L339.9,282.9L342.1,281.4L344.4,280.0L346.7,278.6L349.1,277.3L351.6,276.1L354.3,275.1L356.1,276.7L358.9,277.4L361.1,278.6L362.6,280.4L363.5,282.7L363.6,285.4L364.9,287.3L363.3,289.6L361.5,291.6L359.6,293.6L357.7,295.4L355.7,297.2L353.7,298.9L351.7,300.6L352.2,301.4L352.7,302.2L353.2,303.0L353.6,303.8L354.1,304.6L356.7,303.7L359.3,303.0L361.9,302.3L364.6,301.6L367.3,301.1L370.1,300.7L373.0,300.5L374.2,302.5L376.6,304.0L378.3,305.8L379.2,307.9L379.2,310.3L378.5,312.9L379.0,315.1L376.7,316.8L374.4,318.3L372.0,319.6L369.5,320.8L367.1,321.9L364.6,322.9L362.1,324.0L362.3,324.8L362.5,325.7L362.7,326.6L362.9,327.5L363.1,328.4L365.8,328.4L368.5,328.4L371.3,328.5L374.0,328.7L376.8,328.9L379.6,329.4L382.4,330.0L382.9,332.3L384.7,334.4L385.7,336.6L385.8,338.9L385.1,341.2L383.5,343.4L383.3,345.7L380.6,346.6L377.8,347.3L375.1,347.9L372.4,348.3L369.7,348.7L367.0,348.9L364.2,349.2L364.2,350.1L364.1,351.0L364.0,351.9L363.9,352.8L363.7,353.7L366.3,354.5L368.9,355.3L371.5,356.2L374.1,357.1L376.6,358.2L379.1,359.4L381.6,360.8L381.3,363.1L382.3,365.6L382.5,368.0L381.9,370.2L380.5,372.2L378.2,373.9L377.2,376.0L374.3,376.1L371.5,376.0L368.7,375.7L366.0,375.3L363.3,374.9L360.6,374.4L358.0,373.8L357.6,374.6L357.2,375.5L356.8,376.3L356.4,377.1L356.0,378.0L358.2,379.4L360.4,381.0L362.6,382.5L364.7,384.2L366.8,385.9L368.8,387.8L370.6,389.9L369.6,392.0L369.7,394.7L369.2,397.0L367.8,398.9L365.8,400.4L363.1,401.3L361.5,403.0L358.7,402.3L356.0,401.4L353.5,400.3L351.0,399.2L348.6,398.0L346.2,396.7L343.9,395.4L343.3,396.1L342.6,396.8L342.0,397.5L341.3,398.1L340.6,398.8L342.2,400.8L343.8,402.9L345.4,405.0L346.8,407.2L348.2,409.5L349.5,411.8L350.6,414.4L348.9,416.0L348.2,418.6L346.8,420.7L345.0,422.1L342.5,422.9L339.7,423.0L337.6,424.2L335.1,422.7L332.9,421.1L330.9,419.3L328.9,417.5L327.0,415.7L325.1,413.8L323.4,411.9L322.5,412.3L321.7,412.8L320.8,413.3L320.0,413.7L319.1,414.2L320.0,416.6L320.8,419.0L321.6,421.5L322.3,424.0L322.8,426.5L323.3,429.1L323.4,431.8L321.3,432.9L319.8,435.2L317.8,436.8L315.5,437.6L313.0,437.7L310.2,436.9L307.8,437.4L306.0,435.3L304.4,433.1L303.1,430.9L301.8,428.6L300.6,426.3L299.4,423.9L298.4,421.6L297.4,421.8L296.5,422.0L295.5,422.2L294.5,422.4L293.6,422.6L293.6,425.1L293.6,427.7L293.5,430.2L293.3,432.8L293.0,435.4L292.6,438.0L291.9,440.6L289.5,441.1L287.2,442.8L284.9,443.7L282.4,443.8L280.0,443.1L277.6,441.6L275.1,441.4L274.1,438.9L273.4,436.3L272.8,433.8L272.3,431.3L272.0,428.7L271.6,426.2L271.4,423.6L270.4,423.6L269.4,423.5L268.5,423.4L267.5,423.3L266.5,423.2L265.7,425.6L264.9,428.0L263.9,430.4L262.9,432.8L261.8,435.2L260.5,437.5L258.9,439.8L256.5,439.6L253.8,440.5L251.3,440.7L248.9,440.1L246.8,438.8L245.0,436.7L242.7,435.8L242.6,433.1L242.7,430.4L243.0,427.9L243.4,425.3L243.9,422.8L244.5,420.3L245.1,417.8L244.2,417.4L243.3,417.1L242.4,416.7L241.5,416.3L240.6,415.9L239.0,418.0L237.4,420.1L235.7,422.1L234.0,424.1L232.1,426.0L230.1,427.9L227.8,429.6L225.6,428.6L222.7,428.8L220.3,428.2L218.2,427.0L216.7,425.1L215.6,422.6L213.8,421.1L214.6,418.4L215.6,416.0L216.7,413.6L217.9,411.3L219.2,409.0L220.6,406.8L222.0,404.6L221.2,404.0L220.5,403.4L219.8,402.8L219.0,402.2L218.3,401.5L216.1,403.1L213.9,404.6L211.6,406.0L209.3,407.4L206.9,408.7L204.4,409.9L201.7,410.9L199.9,409.3L197.1,408.6L194.9,407.4L193.4,405.6L192.5,403.3L192.4,400.6L191.1,398.7L192.7,396.4L194.5,394.4L196.4,392.4L198.3,390.6L200.3,388.8L202.3,387.1L204.3,385.4L203.8,384.6L203.3,383.8L202.8,383.0L202.4,382.2L201.9,381.4L199.3,382.3L196.7,383.0L194.1,383.7L191.4,384.4L188.7,384.9L185.9,385.3L183.0,385.5L181.8,383.5L179.4,382.0L177.7,380.2L176.8,378.1L176.8,375.7L177.5,373.1L177.0,370.9L179.3,369.2L181.6,367.7L184.0,366.4L186.5,365.2L188.9,364.1L191.4,363.1L193.9,362.0L193.7,361.2L193.5,360.3L193.3,359.4L193.1,358.5L192.9,357.6L190.2,357.6L187.5,357.6L184.7,357.5L182.0,357.3L179.2,357.1L176.4,356.6L173.6,356.0L173.1,353.7L171.3,351.6L170.3,349.4L170.2,347.1L170.9,344.8L172.5,342.6L172.7,340.3L175.4,339.4L178.2,338.7L180.9,338.1L183.6,337.7L186.3,337.3L189.0,337.1L191.8,336.8L191.8,335.9L191.9,335.0L192.0,334.1L192.1,333.2L192.3,332.3L189.7,331.5L187.1,330.7L184.5,329.8L181.9,328.9L179.4,327.8L176.9,326.6L174.4,325.2L174.7,322.9L173.7,320.4L173.5,318.0L174.1,315.8L175.5,313.8L177.8,312.1L178.8,310.0L181.7,309.9L184.5,310.0L187.3,310.3L190.0,310.7L192.7,311.1L195.4,311.6L198.0,312.2L198.4,311.4L198.8,310.5L199.2,309.7L199.6,308.9L200.0,308.0L197.8,306.6L195.6,305.0L193.4,303.5L191.3,301.8L189.2,300.1L187.2,298.2L185.4,296.1L186.4,294.0L186.3,291.3L186.8,289.0L188.2,287.1L190.2,285.6L192.9,284.7L194.5,283.0L197.3,283.7L200.0,284.6L202.5,285.7L205.0,286.8L207.4,288.0L209.8,289.3L212.1,290.6L212.7,289.9L213.4,289.2L214.0,288.5L214.7,287.9L215.4,287.2L213.8,285.2L212.2,283.1L210.6,281.0L209.2,278.8L207.8,276.5L206.5,274.2L205.4,271.6L207.1,270.0L207.8,267.4L209.2,265.3L211.0,263.9L213.5,263.1L216.3,263.0L218.4,261.8L220.9,263.3L223.1,264.9L225.1,266.7L227.1,268.5L229.0,270.3L230.9,272.2L232.6,274.1L233.5,273.7L234.3,273.2L235.2,272.7L236.0,272.3L236.9,271.8L236.0,269.4L235.2,267.0L234.4,264.5L233.7,262.0L233.2,259.5L232.7,256.9L232.6,254.2L234.7,253.1L236.2,250.8L238.2,249.2L240.5,248.4L243.0,248.3L245.8,249.1L248.2,248.6L250.0,250.7L251.6,252.9L252.9,255.1L254.2,257.4L255.4,259.7L256.6,262.1L257.6,264.4L258.6,264.2L259.5,264.0L260.5,263.8L261.5,263.6L262.4,263.4L262.4,260.9L262.4,258.3L262.5,255.8L262.7,253.2L263.0,250.6L263.4,248.0L264.1,245.4Z" fill="url(#wall)"/><path transform="matrix(0.9858,0,0,0.9858,3.98,9.43)" d="M266.5,244.9L268.8,243.2L271.1,242.3L273.6,242.2L276.0,242.9L278.4,244.4L280.9,244.6L281.9,247.1L282.6,249.7L283.2,252.2L283.7,254.7L284.0,257.3L284.4,259.8L284.6,262.4L285.6,262.4L286.6,262.5L287.5,262.6L288.5,262.7L289.5,262.8L290.3,260.4L291.1,258.0L292.1,255.6L293.1,253.2L294.2,250.8L295.5,248.5L297.1,246.2L299.5,246.4L302.2,245.5L304.7,245.3L307.1,245.9L309.2,247.2L311.0,249.3L313.3,250.2L313.4,252.9L313.3,255.6L313.0,258.1L312.6,260.7L312.1,263.2L311.5,265.7L310.9,268.2L311.8,268.6L312.7,268.9L313.6,269.3L314.5,269.7L315.4,270.1L317.0,268.0L318.6,265.9L320.3,263.9L322.0,261.9L323.9,260.0L325.9,258.1L328.2,256.4L330.4,257.4L333.3,257.2L335.7,257.8L337.8,259.0L339.3,260.9L340.4,263.4L342.2,264.9L341.4,267.6L340.4,270.0L339.3,272.4L338.1,274.7L336.8,277.0L335.4,279.2L334.0,281.4L334.8,282.0L335.5,282.6L336.2,283.2L337.0,283.8L337.7,284.5L339.9,282.9L342.1,281.4L344.4,280.0L346.7,278.6L349.1,277.3L351.6,276.1L354.3,275.1L356.1,276.7L358.9,277.4L361.1,278.6L362.6,280.4L363.5,282.7L363.6,285.4L364.9,287.3L363.3,289.6L361.5,291.6L359.6,293.6L357.7,295.4L355.7,297.2L353.7,298.9L351.7,300.6L352.2,301.4L352.7,302.2L353.2,303.0L353.6,303.8L354.1,304.6L356.7,303.7L359.3,303.0L361.9,302.3L364.6,301.6L367.3,301.1L370.1,300.7L373.0,300.5L374.2,302.5L376.6,304.0L378.3,305.8L379.2,307.9L379.2,310.3L378.5,312.9L379.0,315.1L376.7,316.8L374.4,318.3L372.0,319.6L369.5,320.8L367.1,321.9L364.6,322.9L362.1,324.0L362.3,324.8L362.5,325.7L362.7,326.6L362.9,327.5L363.1,328.4L365.8,328.4L368.5,328.4L371.3,328.5L374.0,328.7L376.8,328.9L379.6,329.4L382.4,330.0L382.9,332.3L384.7,334.4L385.7,336.6L385.8,338.9L385.1,341.2L383.5,343.4L383.3,345.7L380.6,346.6L377.8,347.3L375.1,347.9L372.4,348.3L369.7,348.7L367.0,348.9L364.2,349.2L364.2,350.1L364.1,351.0L364.0,351.9L363.9,352.8L363.7,353.7L366.3,354.5L368.9,355.3L371.5,356.2L374.1,357.1L376.6,358.2L379.1,359.4L381.6,360.8L381.3,363.1L382.3,365.6L382.5,368.0L381.9,370.2L380.5,372.2L378.2,373.9L377.2,376.0L374.3,376.1L371.5,376.0L368.7,375.7L366.0,375.3L363.3,374.9L360.6,374.4L358.0,373.8L357.6,374.6L357.2,375.5L356.8,376.3L356.4,377.1L356.0,378.0L358.2,379.4L360.4,381.0L362.6,382.5L364.7,384.2L366.8,385.9L368.8,387.8L370.6,389.9L369.6,392.0L369.7,394.7L369.2,397.0L367.8,398.9L365.8,400.4L363.1,401.3L361.5,403.0L358.7,402.3L356.0,401.4L353.5,400.3L351.0,399.2L348.6,398.0L346.2,396.7L343.9,395.4L343.3,396.1L342.6,396.8L342.0,397.5L341.3,398.1L340.6,398.8L342.2,400.8L343.8,402.9L345.4,405.0L346.8,407.2L348.2,409.5L349.5,411.8L350.6,414.4L348.9,416.0L348.2,418.6L346.8,420.7L345.0,422.1L342.5,422.9L339.7,423.0L337.6,424.2L335.1,422.7L332.9,421.1L330.9,419.3L328.9,417.5L327.0,415.7L325.1,413.8L323.4,411.9L322.5,412.3L321.7,412.8L320.8,413.3L320.0,413.7L319.1,414.2L320.0,416.6L320.8,419.0L321.6,421.5L322.3,424.0L322.8,426.5L323.3,429.1L323.4,431.8L321.3,432.9L319.8,435.2L317.8,436.8L315.5,437.6L313.0,437.7L310.2,436.9L307.8,437.4L306.0,435.3L304.4,433.1L303.1,430.9L301.8,428.6L300.6,426.3L299.4,423.9L298.4,421.6L297.4,421.8L296.5,422.0L295.5,422.2L294.5,422.4L293.6,422.6L293.6,425.1L293.6,427.7L293.5,430.2L293.3,432.8L293.0,435.4L292.6,438.0L291.9,440.6L289.5,441.1L287.2,442.8L284.9,443.7L282.4,443.8L280.0,443.1L277.6,441.6L275.1,441.4L274.1,438.9L273.4,436.3L272.8,433.8L272.3,431.3L272.0,428.7L271.6,426.2L271.4,423.6L270.4,423.6L269.4,423.5L268.5,423.4L267.5,423.3L266.5,423.2L265.7,425.6L264.9,428.0L263.9,430.4L262.9,432.8L261.8,435.2L260.5,437.5L258.9,439.8L256.5,439.6L253.8,440.5L251.3,440.7L248.9,440.1L246.8,438.8L245.0,436.7L242.7,435.8L242.6,433.1L242.7,430.4L243.0,427.9L243.4,425.3L243.9,422.8L244.5,420.3L245.1,417.8L244.2,417.4L243.3,417.1L242.4,416.7L241.5,416.3L240.6,415.9L239.0,418.0L237.4,420.1L235.7,422.1L234.0,424.1L232.1,426.0L230.1,427.9L227.8,429.6L225.6,428.6L222.7,428.8L220.3,428.2L218.2,427.0L216.7,425.1L215.6,422.6L213.8,421.1L214.6,418.4L215.6,416.0L216.7,413.6L217.9,411.3L219.2,409.0L220.6,406.8L222.0,404.6L221.2,404.0L220.5,403.4L219.8,402.8L219.0,402.2L218.3,401.5L216.1,403.1L213.9,404.6L211.6,406.0L209.3,407.4L206.9,408.7L204.4,409.9L201.7,410.9L199.9,409.3L197.1,408.6L194.9,407.4L193.4,405.6L192.5,403.3L192.4,400.6L191.1,398.7L192.7,396.4L194.5,394.4L196.4,392.4L198.3,390.6L200.3,388.8L202.3,387.1L204.3,385.4L203.8,384.6L203.3,383.8L202.8,383.0L202.4,382.2L201.9,381.4L199.3,382.3L196.7,383.0L194.1,383.7L191.4,384.4L188.7,384.9L185.9,385.3L183.0,385.5L181.8,383.5L179.4,382.0L177.7,380.2L176.8,378.1L176.8,375.7L177.5,373.1L177.0,370.9L179.3,369.2L181.6,367.7L184.0,366.4L186.5,365.2L188.9,364.1L191.4,363.1L193.9,362.0L193.7,361.2L193.5,360.3L193.3,359.4L193.1,358.5L192.9,357.6L190.2,357.6L187.5,357.6L184.7,357.5L182.0,357.3L179.2,357.1L176.4,356.6L173.6,356.0L173.1,353.7L171.3,351.6L170.3,349.4L170.2,347.1L170.9,344.8L172.5,342.6L172.7,340.3L175.4,339.4L178.2,338.7L180.9,338.1L183.6,337.7L186.3,337.3L189.0,337.1L191.8,336.8L191.8,335.9L191.9,335.0L192.0,334.1L192.1,333.2L192.3,332.3L189.7,331.5L187.1,330.7L184.5,329.8L181.9,328.9L179.4,327.8L176.9,326.6L174.4,325.2L174.7,322.9L173.7,320.4L173.5,318.0L174.1,315.8L175.5,313.8L177.8,312.1L178.8,310.0L181.7,309.9L184.5,310.0L187.3,310.3L190.0,310.7L192.7,311.1L195.4,311.6L198.0,312.2L198.4,311.4L198.8,310.5L199.2,309.7L199.6,308.9L200.0,308.0L197.8,306.6L195.6,305.0L193.4,303.5L191.3,301.8L189.2,300.1L187.2,298.2L185.4,296.1L186.4,294.0L186.3,291.3L186.8,289.0L188.2,287.1L190.2,285.6L192.9,284.7L194.5,283.0L197.3,283.7L200.0,284.6L202.5,285.7L205.0,286.8L207.4,288.0L209.8,289.3L212.1,290.6L212.7,289.9L213.4,289.2L214.0,288.5L214.7,287.9L215.4,287.2L213.8,285.2L212.2,283.1L210.6,281.0L209.2,278.8L207.8,276.5L206.5,274.2L205.4,271.6L207.1,270.0L207.8,267.4L209.2,265.3L211.0,263.9L213.5,263.1L216.3,263.0L218.4,261.8L220.9,263.3L223.1,264.9L225.1,266.7L227.1,268.5L229.0,270.3L230.9,272.2L232.6,274.1L233.5,273.7L234.3,273.2L235.2,272.7L236.0,272.3L236.9,271.8L236.0,269.4L235.2,267.0L234.4,264.5L233.7,262.0L233.2,259.5L232.7,256.9L232.6,254.2L234.7,253.1L236.2,250.8L238.2,249.2L240.5,248.4L243.0,248.3L245.8,249.1L248.2,248.6L250.0,250.7L251.6,252.9L252.9,255.1L254.2,257.4L255.4,259.7L256.6,262.1L257.6,264.4L258.6,264.2L259.5,264.0L260.5,263.8L261.5,263.6L262.4,263.4L262.4,260.9L262.4,258.3L262.5,255.8L262.7,253.2L263.0,250.6L263.4,248.0L264.1,245.4Z" fill="url(#wall)"/><path transform="matrix(0.9881,0,0,0.9881,3.31,7.86)" d="M266.5,244.9L268.8,243.2L271.1,242.3L273.6,242.2L276.0,242.9L278.4,244.4L280.9,244.6L281.9,247.1L282.6,249.7L283.2,252.2L283.7,254.7L284.0,257.3L284.4,259.8L284.6,262.4L285.6,262.4L286.6,262.5L287.5,262.6L288.5,262.7L289.5,262.8L290.3,260.4L291.1,258.0L292.1,255.6L293.1,253.2L294.2,250.8L295.5,248.5L297.1,246.2L299.5,246.4L302.2,245.5L304.7,245.3L307.1,245.9L309.2,247.2L311.0,249.3L313.3,250.2L313.4,252.9L313.3,255.6L313.0,258.1L312.6,260.7L312.1,263.2L311.5,265.7L310.9,268.2L311.8,268.6L312.7,268.9L313.6,269.3L314.5,269.7L315.4,270.1L317.0,268.0L318.6,265.9L320.3,263.9L322.0,261.9L323.9,260.0L325.9,258.1L328.2,256.4L330.4,257.4L333.3,257.2L335.7,257.8L337.8,259.0L339.3,260.9L340.4,263.4L342.2,264.9L341.4,267.6L340.4,270.0L339.3,272.4L338.1,274.7L336.8,277.0L335.4,279.2L334.0,281.4L334.8,282.0L335.5,282.6L336.2,283.2L337.0,283.8L337.7,284.5L339.9,282.9L342.1,281.4L344.4,280.0L346.7,278.6L349.1,277.3L351.6,276.1L354.3,275.1L356.1,276.7L358.9,277.4L361.1,278.6L362.6,280.4L363.5,282.7L363.6,285.4L364.9,287.3L363.3,289.6L361.5,291.6L359.6,293.6L357.7,295.4L355.7,297.2L353.7,298.9L351.7,300.6L352.2,301.4L352.7,302.2L353.2,303.0L353.6,303.8L354.1,304.6L356.7,303.7L359.3,303.0L361.9,302.3L364.6,301.6L367.3,301.1L370.1,300.7L373.0,300.5L374.2,302.5L376.6,304.0L378.3,305.8L379.2,307.9L379.2,310.3L378.5,312.9L379.0,315.1L376.7,316.8L374.4,318.3L372.0,319.6L369.5,320.8L367.1,321.9L364.6,322.9L362.1,324.0L362.3,324.8L362.5,325.7L362.7,326.6L362.9,327.5L363.1,328.4L365.8,328.4L368.5,328.4L371.3,328.5L374.0,328.7L376.8,328.9L379.6,329.4L382.4,330.0L382.9,332.3L384.7,334.4L385.7,336.6L385.8,338.9L385.1,341.2L383.5,343.4L383.3,345.7L380.6,346.6L377.8,347.3L375.1,347.9L372.4,348.3L369.7,348.7L367.0,348.9L364.2,349.2L364.2,350.1L364.1,351.0L364.0,351.9L363.9,352.8L363.7,353.7L366.3,354.5L368.9,355.3L371.5,356.2L374.1,357.1L376.6,358.2L379.1,359.4L381.6,360.8L381.3,363.1L382.3,365.6L382.5,368.0L381.9,370.2L380.5,372.2L378.2,373.9L377.2,376.0L374.3,376.1L371.5,376.0L368.7,375.7L366.0,375.3L363.3,374.9L360.6,374.4L358.0,373.8L357.6,374.6L357.2,375.5L356.8,376.3L356.4,377.1L356.0,378.0L358.2,379.4L360.4,381.0L362.6,382.5L364.7,384.2L366.8,385.9L368.8,387.8L370.6,389.9L369.6,392.0L369.7,394.7L369.2,397.0L367.8,398.9L365.8,400.4L363.1,401.3L361.5,403.0L358.7,402.3L356.0,401.4L353.5,400.3L351.0,399.2L348.6,398.0L346.2,396.7L343.9,395.4L343.3,396.1L342.6,396.8L342.0,397.5L341.3,398.1L340.6,398.8L342.2,400.8L343.8,402.9L345.4,405.0L346.8,407.2L348.2,409.5L349.5,411.8L350.6,414.4L348.9,416.0L348.2,418.6L346.8,420.7L345.0,422.1L342.5,422.9L339.7,423.0L337.6,424.2L335.1,422.7L332.9,421.1L330.9,419.3L328.9,417.5L327.0,415.7L325.1,413.8L323.4,411.9L322.5,412.3L321.7,412.8L320.8,413.3L320.0,413.7L319.1,414.2L320.0,416.6L320.8,419.0L321.6,421.5L322.3,424.0L322.8,426.5L323.3,429.1L323.4,431.8L321.3,432.9L319.8,435.2L317.8,436.8L315.5,437.6L313.0,437.7L310.2,436.9L307.8,437.4L306.0,435.3L304.4,433.1L303.1,430.9L301.8,428.6L300.6,426.3L299.4,423.9L298.4,421.6L297.4,421.8L296.5,422.0L295.5,422.2L294.5,422.4L293.6,422.6L293.6,425.1L293.6,427.7L293.5,430.2L293.3,432.8L293.0,435.4L292.6,438.0L291.9,440.6L289.5,441.1L287.2,442.8L284.9,443.7L282.4,443.8L280.0,443.1L277.6,441.6L275.1,441.4L274.1,438.9L273.4,436.3L272.8,433.8L272.3,431.3L272.0,428.7L271.6,426.2L271.4,423.6L270.4,423.6L269.4,423.5L268.5,423.4L267.5,423.3L266.5,423.2L265.7,425.6L264.9,428.0L263.9,430.4L262.9,432.8L261.8,435.2L260.5,437.5L258.9,439.8L256.5,439.6L253.8,440.5L251.3,440.7L248.9,440.1L246.8,438.8L245.0,436.7L242.7,435.8L242.6,433.1L242.7,430.4L243.0,427.9L243.4,425.3L243.9,422.8L244.5,420.3L245.1,417.8L244.2,417.4L243.3,417.1L242.4,416.7L241.5,416.3L240.6,415.9L239.0,418.0L237.4,420.1L235.7,422.1L234.0,424.1L232.1,426.0L230.1,427.9L227.8,429.6L225.6,428.6L222.7,428.8L220.3,428.2L218.2,427.0L216.7,425.1L215.6,422.6L213.8,421.1L214.6,418.4L215.6,416.0L216.7,413.6L217.9,411.3L219.2,409.0L220.6,406.8L222.0,404.6L221.2,404.0L220.5,403.4L219.8,402.8L219.0,402.2L218.3,401.5L216.1,403.1L213.9,404.6L211.6,406.0L209.3,407.4L206.9,408.7L204.4,409.9L201.7,410.9L199.9,409.3L197.1,408.6L194.9,407.4L193.4,405.6L192.5,403.3L192.4,400.6L191.1,398.7L192.7,396.4L194.5,394.4L196.4,392.4L198.3,390.6L200.3,388.8L202.3,387.1L204.3,385.4L203.8,384.6L203.3,383.8L202.8,383.0L202.4,382.2L201.9,381.4L199.3,382.3L196.7,383.0L194.1,383.7L191.4,384.4L188.7,384.9L185.9,385.3L183.0,385.5L181.8,383.5L179.4,382.0L177.7,380.2L176.8,378.1L176.8,375.7L177.5,373.1L177.0,370.9L179.3,369.2L181.6,367.7L184.0,366.4L186.5,365.2L188.9,364.1L191.4,363.1L193.9,362.0L193.7,361.2L193.5,360.3L193.3,359.4L193.1,358.5L192.9,357.6L190.2,357.6L187.5,357.6L184.7,357.5L182.0,357.3L179.2,357.1L176.4,356.6L173.6,356.0L173.1,353.7L171.3,351.6L170.3,349.4L170.2,347.1L170.9,344.8L172.5,342.6L172.7,340.3L175.4,339.4L178.2,338.7L180.9,338.1L183.6,337.7L186.3,337.3L189.0,337.1L191.8,336.8L191.8,335.9L191.9,335.0L192.0,334.1L192.1,333.2L192.3,332.3L189.7,331.5L187.1,330.7L184.5,329.8L181.9,328.9L179.4,327.8L176.9,326.6L174.4,325.2L174.7,322.9L173.7,320.4L173.5,318.0L174.1,315.8L175.5,313.8L177.8,312.1L178.8,310.0L181.7,309.9L184.5,310.0L187.3,310.3L190.0,310.7L192.7,311.1L195.4,311.6L198.0,312.2L198.4,311.4L198.8,310.5L199.2,309.7L199.6,308.9L200.0,308.0L197.8,306.6L195.6,305.0L193.4,303.5L191.3,301.8L189.2,300.1L187.2,298.2L185.4,296.1L186.4,294.0L186.3,291.3L186.8,289.0L188.2,287.1L190.2,285.6L192.9,284.7L194.5,283.0L197.3,283.7L200.0,284.6L202.5,285.7L205.0,286.8L207.4,288.0L209.8,289.3L212.1,290.6L212.7,289.9L213.4,289.2L214.0,288.5L214.7,287.9L215.4,287.2L213.8,285.2L212.2,283.1L210.6,281.0L209.2,278.8L207.8,276.5L206.5,274.2L205.4,271.6L207.1,270.0L207.8,267.4L209.2,265.3L211.0,263.9L213.5,263.1L216.3,263.0L218.4,261.8L220.9,263.3L223.1,264.9L225.1,266.7L227.1,268.5L229.0,270.3L230.9,272.2L232.6,274.1L233.5,273.7L234.3,273.2L235.2,272.7L236.0,272.3L236.9,271.8L236.0,269.4L235.2,267.0L234.4,264.5L233.7,262.0L233.2,259.5L232.7,256.9L232.6,254.2L234.7,253.1L236.2,250.8L238.2,249.2L240.5,248.4L243.0,248.3L245.8,249.1L248.2,248.6L250.0,250.7L251.6,252.9L252.9,255.1L254.2,257.4L255.4,259.7L256.6,262.1L257.6,264.4L258.6,264.2L259.5,264.0L260.5,263.8L261.5,263.6L262.4,263.4L262.4,260.9L262.4,258.3L262.5,255.8L262.7,253.2L263.0,250.6L263.4,248.0L264.1,245.4Z" fill="url(#wall)"/><path transform="matrix(0.9905,0,0,0.9905,2.65,6.29)" d="M266.5,244.9L268.8,243.2L271.1,242.3L273.6,242.2L276.0,242.9L278.4,244.4L280.9,244.6L281.9,247.1L282.6,249.7L283.2,252.2L283.7,254.7L284.0,257.3L284.4,259.8L284.6,262.4L285.6,262.4L286.6,262.5L287.5,262.6L288.5,262.7L289.5,262.8L290.3,260.4L291.1,258.0L292.1,255.6L293.1,253.2L294.2,250.8L295.5,248.5L297.1,246.2L299.5,246.4L302.2,245.5L304.7,245.3L307.1,245.9L309.2,247.2L311.0,249.3L313.3,250.2L313.4,252.9L313.3,255.6L313.0,258.1L312.6,260.7L312.1,263.2L311.5,265.7L310.9,268.2L311.8,268.6L312.7,268.9L313.6,269.3L314.5,269.7L315.4,270.1L317.0,268.0L318.6,265.9L320.3,263.9L322.0,261.9L323.9,260.0L325.9,258.1L328.2,256.4L330.4,257.4L333.3,257.2L335.7,257.8L337.8,259.0L339.3,260.9L340.4,263.4L342.2,264.9L341.4,267.6L340.4,270.0L339.3,272.4L338.1,274.7L336.8,277.0L335.4,279.2L334.0,281.4L334.8,282.0L335.5,282.6L336.2,283.2L337.0,283.8L337.7,284.5L339.9,282.9L342.1,281.4L344.4,280.0L346.7,278.6L349.1,277.3L351.6,276.1L354.3,275.1L356.1,276.7L358.9,277.4L361.1,278.6L362.6,280.4L363.5,282.7L363.6,285.4L364.9,287.3L363.3,289.6L361.5,291.6L359.6,293.6L357.7,295.4L355.7,297.2L353.7,298.9L351.7,300.6L352.2,301.4L352.7,302.2L353.2,303.0L353.6,303.8L354.1,304.6L356.7,303.7L359.3,303.0L361.9,302.3L364.6,301.6L367.3,301.1L370.1,300.7L373.0,300.5L374.2,302.5L376.6,304.0L378.3,305.8L379.2,307.9L379.2,310.3L378.5,312.9L379.0,315.1L376.7,316.8L374.4,318.3L372.0,319.6L369.5,320.8L367.1,321.9L364.6,322.9L362.1,324.0L362.3,324.8L362.5,325.7L362.7,326.6L362.9,327.5L363.1,328.4L365.8,328.4L368.5,328.4L371.3,328.5L374.0,328.7L376.8,328.9L379.6,329.4L382.4,330.0L382.9,332.3L384.7,334.4L385.7,336.6L385.8,338.9L385.1,341.2L383.5,343.4L383.3,345.7L380.6,346.6L377.8,347.3L375.1,347.9L372.4,348.3L369.7,348.7L367.0,348.9L364.2,349.2L364.2,350.1L364.1,351.0L364.0,351.9L363.9,352.8L363.7,353.7L366.3,354.5L368.9,355.3L371.5,356.2L374.1,357.1L376.6,358.2L379.1,359.4L381.6,360.8L381.3,363.1L382.3,365.6L382.5,368.0L381.9,370.2L380.5,372.2L378.2,373.9L377.2,376.0L374.3,376.1L371.5,376.0L368.7,375.7L366.0,375.3L363.3,374.9L360.6,374.4L358.0,373.8L357.6,374.6L357.2,375.5L356.8,376.3L356.4,377.1L356.0,378.0L358.2,379.4L360.4,381.0L362.6,382.5L364.7,384.2L366.8,385.9L368.8,387.8L370.6,389.9L369.6,392.0L369.7,394.7L369.2,397.0L367.8,398.9L365.8,400.4L363.1,401.3L361.5,403.0L358.7,402.3L356.0,401.4L353.5,400.3L351.0,399.2L348.6,398.0L346.2,396.7L343.9,395.4L343.3,396.1L342.6,396.8L342.0,397.5L341.3,398.1L340.6,398.8L342.2,400.8L343.8,402.9L345.4,405.0L346.8,407.2L348.2,409.5L349.5,411.8L350.6,414.4L348.9,416.0L348.2,418.6L346.8,420.7L345.0,422.1L342.5,422.9L339.7,423.0L337.6,424.2L335.1,422.7L332.9,421.1L330.9,419.3L328.9,417.5L327.0,415.7L325.1,413.8L323.4,411.9L322.5,412.3L321.7,412.8L320.8,413.3L320.0,413.7L319.1,414.2L320.0,416.6L320.8,419.0L321.6,421.5L322.3,424.0L322.8,426.5L323.3,429.1L323.4,431.8L321.3,432.9L319.8,435.2L317.8,436.8L315.5,437.6L313.0,437.7L310.2,436.9L307.8,437.4L306.0,435.3L304.4,433.1L303.1,430.9L301.8,428.6L300.6,426.3L299.4,423.9L298.4,421.6L297.4,421.8L296.5,422.0L295.5,422.2L294.5,422.4L293.6,422.6L293.6,425.1L293.6,427.7L293.5,430.2L293.3,432.8L293.0,435.4L292.6,438.0L291.9,440.6L289.5,441.1L287.2,442.8L284.9,443.7L282.4,443.8L280.0,443.1L277.6,441.6L275.1,441.4L274.1,438.9L273.4,436.3L272.8,433.8L272.3,431.3L272.0,428.7L271.6,426.2L271.4,423.6L270.4,423.6L269.4,423.5L268.5,423.4L267.5,423.3L266.5,423.2L265.7,425.6L264.9,428.0L263.9,430.4L262.9,432.8L261.8,435.2L260.5,437.5L258.9,439.8L256.5,439.6L253.8,440.5L251.3,440.7L248.9,440.1L246.8,438.8L245.0,436.7L242.7,435.8L242.6,433.1L242.7,430.4L243.0,427.9L243.4,425.3L243.9,422.8L244.5,420.3L245.1,417.8L244.2,417.4L243.3,417.1L242.4,416.7L241.5,416.3L240.6,415.9L239.0,418.0L237.4,420.1L235.7,422.1L234.0,424.1L232.1,426.0L230.1,427.9L227.8,429.6L225.6,428.6L222.7,428.8L220.3,428.2L218.2,427.0L216.7,425.1L215.6,422.6L213.8,421.1L214.6,418.4L215.6,416.0L216.7,413.6L217.9,411.3L219.2,409.0L220.6,406.8L222.0,404.6L221.2,404.0L220.5,403.4L219.8,402.8L219.0,402.2L218.3,401.5L216.1,403.1L213.9,404.6L211.6,406.0L209.3,407.4L206.9,408.7L204.4,409.9L201.7,410.9L199.9,409.3L197.1,408.6L194.9,407.4L193.4,405.6L192.5,403.3L192.4,400.6L191.1,398.7L192.7,396.4L194.5,394.4L196.4,392.4L198.3,390.6L200.3,388.8L202.3,387.1L204.3,385.4L203.8,384.6L203.3,383.8L202.8,383.0L202.4,382.2L201.9,381.4L199.3,382.3L196.7,383.0L194.1,383.7L191.4,384.4L188.7,384.9L185.9,385.3L183.0,385.5L181.8,383.5L179.4,382.0L177.7,380.2L176.8,378.1L176.8,375.7L177.5,373.1L177.0,370.9L179.3,369.2L181.6,367.7L184.0,366.4L186.5,365.2L188.9,364.1L191.4,363.1L193.9,362.0L193.7,361.2L193.5,360.3L193.3,359.4L193.1,358.5L192.9,357.6L190.2,357.6L187.5,357.6L184.7,357.5L182.0,357.3L179.2,357.1L176.4,356.6L173.6,356.0L173.1,353.7L171.3,351.6L170.3,349.4L170.2,347.1L170.9,344.8L172.5,342.6L172.7,340.3L175.4,339.4L178.2,338.7L180.9,338.1L183.6,337.7L186.3,337.3L189.0,337.1L191.8,336.8L191.8,335.9L191.9,335.0L192.0,334.1L192.1,333.2L192.3,332.3L189.7,331.5L187.1,330.7L184.5,329.8L181.9,328.9L179.4,327.8L176.9,326.6L174.4,325.2L174.7,322.9L173.7,320.4L173.5,318.0L174.1,315.8L175.5,313.8L177.8,312.1L178.8,310.0L181.7,309.9L184.5,310.0L187.3,310.3L190.0,310.7L192.7,311.1L195.4,311.6L198.0,312.2L198.4,311.4L198.8,310.5L199.2,309.7L199.6,308.9L200.0,308.0L197.8,306.6L195.6,305.0L193.4,303.5L191.3,301.8L189.2,300.1L187.2,298.2L185.4,296.1L186.4,294.0L186.3,291.3L186.8,289.0L188.2,287.1L190.2,285.6L192.9,284.7L194.5,283.0L197.3,283.7L200.0,284.6L202.5,285.7L205.0,286.8L207.4,288.0L209.8,289.3L212.1,290.6L212.7,289.9L213.4,289.2L214.0,288.5L214.7,287.9L215.4,287.2L213.8,285.2L212.2,283.1L210.6,281.0L209.2,278.8L207.8,276.5L206.5,274.2L205.4,271.6L207.1,270.0L207.8,267.4L209.2,265.3L211.0,263.9L213.5,263.1L216.3,263.0L218.4,261.8L220.9,263.3L223.1,264.9L225.1,266.7L227.1,268.5L229.0,270.3L230.9,272.2L232.6,274.1L233.5,273.7L234.3,273.2L235.2,272.7L236.0,272.3L236.9,271.8L236.0,269.4L235.2,267.0L234.4,264.5L233.7,262.0L233.2,259.5L232.7,256.9L232.6,254.2L234.7,253.1L236.2,250.8L238.2,249.2L240.5,248.4L243.0,248.3L245.8,249.1L248.2,248.6L250.0,250.7L251.6,252.9L252.9,255.1L254.2,257.4L255.4,259.7L256.6,262.1L257.6,264.4L258.6,264.2L259.5,264.0L260.5,263.8L261.5,263.6L262.4,263.4L262.4,260.9L262.4,258.3L262.5,255.8L262.7,253.2L263.0,250.6L263.4,248.0L264.1,245.4Z" fill="url(#wall)"/><path transform="matrix(0.9929,0,0,0.9929,1.99,4.72)" d="M266.5,244.9L268.8,243.2L271.1,242.3L273.6,242.2L276.0,242.9L278.4,244.4L280.9,244.6L281.9,247.1L282.6,249.7L283.2,252.2L283.7,254.7L284.0,257.3L284.4,259.8L284.6,262.4L285.6,262.4L286.6,262.5L287.5,262.6L288.5,262.7L289.5,262.8L290.3,260.4L291.1,258.0L292.1,255.6L293.1,253.2L294.2,250.8L295.5,248.5L297.1,246.2L299.5,246.4L302.2,245.5L304.7,245.3L307.1,245.9L309.2,247.2L311.0,249.3L313.3,250.2L313.4,252.9L313.3,255.6L313.0,258.1L312.6,260.7L312.1,263.2L311.5,265.7L310.9,268.2L311.8,268.6L312.7,268.9L313.6,269.3L314.5,269.7L315.4,270.1L317.0,268.0L318.6,265.9L320.3,263.9L322.0,261.9L323.9,260.0L325.9,258.1L328.2,256.4L330.4,257.4L333.3,257.2L335.7,257.8L337.8,259.0L339.3,260.9L340.4,263.4L342.2,264.9L341.4,267.6L340.4,270.0L339.3,272.4L338.1,274.7L336.8,277.0L335.4,279.2L334.0,281.4L334.8,282.0L335.5,282.6L336.2,283.2L337.0,283.8L337.7,284.5L339.9,282.9L342.1,281.4L344.4,280.0L346.7,278.6L349.1,277.3L351.6,276.1L354.3,275.1L356.1,276.7L358.9,277.4L361.1,278.6L362.6,280.4L363.5,282.7L363.6,285.4L364.9,287.3L363.3,289.6L361.5,291.6L359.6,293.6L357.7,295.4L355.7,297.2L353.7,298.9L351.7,300.6L352.2,301.4L352.7,302.2L353.2,303.0L353.6,303.8L354.1,304.6L356.7,303.7L359.3,303.0L361.9,302.3L364.6,301.6L367.3,301.1L370.1,300.7L373.0,300.5L374.2,302.5L376.6,304.0L378.3,305.8L379.2,307.9L379.2,310.3L378.5,312.9L379.0,315.1L376.7,316.8L374.4,318.3L372.0,319.6L369.5,320.8L367.1,321.9L364.6,322.9L362.1,324.0L362.3,324.8L362.5,325.7L362.7,326.6L362.9,327.5L363.1,328.4L365.8,328.4L368.5,328.4L371.3,328.5L374.0,328.7L376.8,328.9L379.6,329.4L382.4,330.0L382.9,332.3L384.7,334.4L385.7,336.6L385.8,338.9L385.1,341.2L383.5,343.4L383.3,345.7L380.6,346.6L377.8,347.3L375.1,347.9L372.4,348.3L369.7,348.7L367.0,348.9L364.2,349.2L364.2,350.1L364.1,351.0L364.0,351.9L363.9,352.8L363.7,353.7L366.3,354.5L368.9,355.3L371.5,356.2L374.1,357.1L376.6,358.2L379.1,359.4L381.6,360.8L381.3,363.1L382.3,365.6L382.5,368.0L381.9,370.2L380.5,372.2L378.2,373.9L377.2,376.0L374.3,376.1L371.5,376.0L368.7,375.7L366.0,375.3L363.3,374.9L360.6,374.4L358.0,373.8L357.6,374.6L357.2,375.5L356.8,376.3L356.4,377.1L356.0,378.0L358.2,379.4L360.4,381.0L362.6,382.5L364.7,384.2L366.8,385.9L368.8,387.8L370.6,389.9L369.6,392.0L369.7,394.7L369.2,397.0L367.8,398.9L365.8,400.4L363.1,401.3L361.5,403.0L358.7,402.3L356.0,401.4L353.5,400.3L351.0,399.2L348.6,398.0L346.2,396.7L343.9,395.4L343.3,396.1L342.6,396.8L342.0,397.5L341.3,398.1L340.6,398.8L342.2,400.8L343.8,402.9L345.4,405.0L346.8,407.2L348.2,409.5L349.5,411.8L350.6,414.4L348.9,416.0L348.2,418.6L346.8,420.7L345.0,422.1L342.5,422.9L339.7,423.0L337.6,424.2L335.1,422.7L332.9,421.1L330.9,419.3L328.9,417.5L327.0,415.7L325.1,413.8L323.4,411.9L322.5,412.3L321.7,412.8L320.8,413.3L320.0,413.7L319.1,414.2L320.0,416.6L320.8,419.0L321.6,421.5L322.3,424.0L322.8,426.5L323.3,429.1L323.4,431.8L321.3,432.9L319.8,435.2L317.8,436.8L315.5,437.6L313.0,437.7L310.2,436.9L307.8,437.4L306.0,435.3L304.4,433.1L303.1,430.9L301.8,428.6L300.6,426.3L299.4,423.9L298.4,421.6L297.4,421.8L296.5,422.0L295.5,422.2L294.5,422.4L293.6,422.6L293.6,425.1L293.6,427.7L293.5,430.2L293.3,432.8L293.0,435.4L292.6,438.0L291.9,440.6L289.5,441.1L287.2,442.8L284.9,443.7L282.4,443.8L280.0,443.1L277.6,441.6L275.1,441.4L274.1,438.9L273.4,436.3L272.8,433.8L272.3,431.3L272.0,428.7L271.6,426.2L271.4,423.6L270.4,423.6L269.4,423.5L268.5,423.4L267.5,423.3L266.5,423.2L265.7,425.6L264.9,428.0L263.9,430.4L262.9,432.8L261.8,435.2L260.5,437.5L258.9,439.8L256.5,439.6L253.8,440.5L251.3,440.7L248.9,440.1L246.8,438.8L245.0,436.7L242.7,435.8L242.6,433.1L242.7,430.4L243.0,427.9L243.4,425.3L243.9,422.8L244.5,420.3L245.1,417.8L244.2,417.4L243.3,417.1L242.4,416.7L241.5,416.3L240.6,415.9L239.0,418.0L237.4,420.1L235.7,422.1L234.0,424.1L232.1,426.0L230.1,427.9L227.8,429.6L225.6,428.6L222.7,428.8L220.3,428.2L218.2,427.0L216.7,425.1L215.6,422.6L213.8,421.1L214.6,418.4L215.6,416.0L216.7,413.6L217.9,411.3L219.2,409.0L220.6,406.8L222.0,404.6L221.2,404.0L220.5,403.4L219.8,402.8L219.0,402.2L218.3,401.5L216.1,403.1L213.9,404.6L211.6,406.0L209.3,407.4L206.9,408.7L204.4,409.9L201.7,410.9L199.9,409.3L197.1,408.6L194.9,407.4L193.4,405.6L192.5,403.3L192.4,400.6L191.1,398.7L192.7,396.4L194.5,394.4L196.4,392.4L198.3,390.6L200.3,388.8L202.3,387.1L204.3,385.4L203.8,384.6L203.3,383.8L202.8,383.0L202.4,382.2L201.9,381.4L199.3,382.3L196.7,383.0L194.1,383.7L191.4,384.4L188.7,384.9L185.9,385.3L183.0,385.5L181.8,383.5L179.4,382.0L177.7,380.2L176.8,378.1L176.8,375.7L177.5,373.1L177.0,370.9L179.3,369.2L181.6,367.7L184.0,366.4L186.5,365.2L188.9,364.1L191.4,363.1L193.9,362.0L193.7,361.2L193.5,360.3L193.3,359.4L193.1,358.5L192.9,357.6L190.2,357.6L187.5,357.6L184.7,357.5L182.0,357.3L179.2,357.1L176.4,356.6L173.6,356.0L173.1,353.7L171.3,351.6L170.3,349.4L170.2,347.1L170.9,344.8L172.5,342.6L172.7,340.3L175.4,339.4L178.2,338.7L180.9,338.1L183.6,337.7L186.3,337.3L189.0,337.1L191.8,336.8L191.8,335.9L191.9,335.0L192.0,334.1L192.1,333.2L192.3,332.3L189.7,331.5L187.1,330.7L184.5,329.8L181.9,328.9L179.4,327.8L176.9,326.6L174.4,325.2L174.7,322.9L173.7,320.4L173.5,318.0L174.1,315.8L175.5,313.8L177.8,312.1L178.8,310.0L181.7,309.9L184.5,310.0L187.3,310.3L190.0,310.7L192.7,311.1L195.4,311.6L198.0,312.2L198.4,311.4L198.8,310.5L199.2,309.7L199.6,308.9L200.0,308.0L197.8,306.6L195.6,305.0L193.4,303.5L191.3,301.8L189.2,300.1L187.2,298.2L185.4,296.1L186.4,294.0L186.3,291.3L186.8,289.0L188.2,287.1L190.2,285.6L192.9,284.7L194.5,283.0L197.3,283.7L200.0,284.6L202.5,285.7L205.0,286.8L207.4,288.0L209.8,289.3L212.1,290.6L212.7,289.9L213.4,289.2L214.0,288.5L214.7,287.9L215.4,287.2L213.8,285.2L212.2,283.1L210.6,281.0L209.2,278.8L207.8,276.5L206.5,274.2L205.4,271.6L207.1,270.0L207.8,267.4L209.2,265.3L211.0,263.9L213.5,263.1L216.3,263.0L218.4,261.8L220.9,263.3L223.1,264.9L225.1,266.7L227.1,268.5L229.0,270.3L230.9,272.2L232.6,274.1L233.5,273.7L234.3,273.2L235.2,272.7L236.0,272.3L236.9,271.8L236.0,269.4L235.2,267.0L234.4,264.5L233.7,262.0L233.2,259.5L232.7,256.9L232.6,254.2L234.7,253.1L236.2,250.8L238.2,249.2L240.5,248.4L243.0,248.3L245.8,249.1L248.2,248.6L250.0,250.7L251.6,252.9L252.9,255.1L254.2,257.4L255.4,259.7L256.6,262.1L257.6,264.4L258.6,264.2L259.5,264.0L260.5,263.8L261.5,263.6L262.4,263.4L262.4,260.9L262.4,258.3L262.5,255.8L262.7,253.2L263.0,250.6L263.4,248.0L264.1,245.4Z" fill="url(#wall)"/><path transform="matrix(0.9952,0,0,0.9952,1.33,3.14)" d="M266.5,244.9L268.8,243.2L271.1,242.3L273.6,242.2L276.0,242.9L278.4,244.4L280.9,244.6L281.9,247.1L282.6,249.7L283.2,252.2L283.7,254.7L284.0,257.3L284.4,259.8L284.6,262.4L285.6,262.4L286.6,262.5L287.5,262.6L288.5,262.7L289.5,262.8L290.3,260.4L291.1,258.0L292.1,255.6L293.1,253.2L294.2,250.8L295.5,248.5L297.1,246.2L299.5,246.4L302.2,245.5L304.7,245.3L307.1,245.9L309.2,247.2L311.0,249.3L313.3,250.2L313.4,252.9L313.3,255.6L313.0,258.1L312.6,260.7L312.1,263.2L311.5,265.7L310.9,268.2L311.8,268.6L312.7,268.9L313.6,269.3L314.5,269.7L315.4,270.1L317.0,268.0L318.6,265.9L320.3,263.9L322.0,261.9L323.9,260.0L325.9,258.1L328.2,256.4L330.4,257.4L333.3,257.2L335.7,257.8L337.8,259.0L339.3,260.9L340.4,263.4L342.2,264.9L341.4,267.6L340.4,270.0L339.3,272.4L338.1,274.7L336.8,277.0L335.4,279.2L334.0,281.4L334.8,282.0L335.5,282.6L336.2,283.2L337.0,283.8L337.7,284.5L339.9,282.9L342.1,281.4L344.4,280.0L346.7,278.6L349.1,277.3L351.6,276.1L354.3,275.1L356.1,276.7L358.9,277.4L361.1,278.6L362.6,280.4L363.5,282.7L363.6,285.4L364.9,287.3L363.3,289.6L361.5,291.6L359.6,293.6L357.7,295.4L355.7,297.2L353.7,298.9L351.7,300.6L352.2,301.4L352.7,302.2L353.2,303.0L353.6,303.8L354.1,304.6L356.7,303.7L359.3,303.0L361.9,302.3L364.6,301.6L367.3,301.1L370.1,300.7L373.0,300.5L374.2,302.5L376.6,304.0L378.3,305.8L379.2,307.9L379.2,310.3L378.5,312.9L379.0,315.1L376.7,316.8L374.4,318.3L372.0,319.6L369.5,320.8L367.1,321.9L364.6,322.9L362.1,324.0L362.3,324.8L362.5,325.7L362.7,326.6L362.9,327.5L363.1,328.4L365.8,328.4L368.5,328.4L371.3,328.5L374.0,328.7L376.8,328.9L379.6,329.4L382.4,330.0L382.9,332.3L384.7,334.4L385.7,336.6L385.8,338.9L385.1,341.2L383.5,343.4L383.3,345.7L380.6,346.6L377.8,347.3L375.1,347.9L372.4,348.3L369.7,348.7L367.0,348.9L364.2,349.2L364.2,350.1L364.1,351.0L364.0,351.9L363.9,352.8L363.7,353.7L366.3,354.5L368.9,355.3L371.5,356.2L374.1,357.1L376.6,358.2L379.1,359.4L381.6,360.8L381.3,363.1L382.3,365.6L382.5,368.0L381.9,370.2L380.5,372.2L378.2,373.9L377.2,376.0L374.3,376.1L371.5,376.0L368.7,375.7L366.0,375.3L363.3,374.9L360.6,374.4L358.0,373.8L357.6,374.6L357.2,375.5L356.8,376.3L356.4,377.1L356.0,378.0L358.2,379.4L360.4,381.0L362.6,382.5L364.7,384.2L366.8,385.9L368.8,387.8L370.6,389.9L369.6,392.0L369.7,394.7L369.2,397.0L367.8,398.9L365.8,400.4L363.1,401.3L361.5,403.0L358.7,402.3L356.0,401.4L353.5,400.3L351.0,399.2L348.6,398.0L346.2,396.7L343.9,395.4L343.3,396.1L342.6,396.8L342.0,397.5L341.3,398.1L340.6,398.8L342.2,400.8L343.8,402.9L345.4,405.0L346.8,407.2L348.2,409.5L349.5,411.8L350.6,414.4L348.9,416.0L348.2,418.6L346.8,420.7L345.0,422.1L342.5,422.9L339.7,423.0L337.6,424.2L335.1,422.7L332.9,421.1L330.9,419.3L328.9,417.5L327.0,415.7L325.1,413.8L323.4,411.9L322.5,412.3L321.7,412.8L320.8,413.3L320.0,413.7L319.1,414.2L320.0,416.6L320.8,419.0L321.6,421.5L322.3,424.0L322.8,426.5L323.3,429.1L323.4,431.8L321.3,432.9L319.8,435.2L317.8,436.8L315.5,437.6L313.0,437.7L310.2,436.9L307.8,437.4L306.0,435.3L304.4,433.1L303.1,430.9L301.8,428.6L300.6,426.3L299.4,423.9L298.4,421.6L297.4,421.8L296.5,422.0L295.5,422.2L294.5,422.4L293.6,422.6L293.6,425.1L293.6,427.7L293.5,430.2L293.3,432.8L293.0,435.4L292.6,438.0L291.9,440.6L289.5,441.1L287.2,442.8L284.9,443.7L282.4,443.8L280.0,443.1L277.6,441.6L275.1,441.4L274.1,438.9L273.4,436.3L272.8,433.8L272.3,431.3L272.0,428.7L271.6,426.2L271.4,423.6L270.4,423.6L269.4,423.5L268.5,423.4L267.5,423.3L266.5,423.2L265.7,425.6L264.9,428.0L263.9,430.4L262.9,432.8L261.8,435.2L260.5,437.5L258.9,439.8L256.5,439.6L253.8,440.5L251.3,440.7L248.9,440.1L246.8,438.8L245.0,436.7L242.7,435.8L242.6,433.1L242.7,430.4L243.0,427.9L243.4,425.3L243.9,422.8L244.5,420.3L245.1,417.8L244.2,417.4L243.3,417.1L242.4,416.7L241.5,416.3L240.6,415.9L239.0,418.0L237.4,420.1L235.7,422.1L234.0,424.1L232.1,426.0L230.1,427.9L227.8,429.6L225.6,428.6L222.7,428.8L220.3,428.2L218.2,427.0L216.7,425.1L215.6,422.6L213.8,421.1L214.6,418.4L215.6,416.0L216.7,413.6L217.9,411.3L219.2,409.0L220.6,406.8L222.0,404.6L221.2,404.0L220.5,403.4L219.8,402.8L219.0,402.2L218.3,401.5L216.1,403.1L213.9,404.6L211.6,406.0L209.3,407.4L206.9,408.7L204.4,409.9L201.7,410.9L199.9,409.3L197.1,408.6L194.9,407.4L193.4,405.6L192.5,403.3L192.4,400.6L191.1,398.7L192.7,396.4L194.5,394.4L196.4,392.4L198.3,390.6L200.3,388.8L202.3,387.1L204.3,385.4L203.8,384.6L203.3,383.8L202.8,383.0L202.4,382.2L201.9,381.4L199.3,382.3L196.7,383.0L194.1,383.7L191.4,384.4L188.7,384.9L185.9,385.3L183.0,385.5L181.8,383.5L179.4,382.0L177.7,380.2L176.8,378.1L176.8,375.7L177.5,373.1L177.0,370.9L179.3,369.2L181.6,367.7L184.0,366.4L186.5,365.2L188.9,364.1L191.4,363.1L193.9,362.0L193.7,361.2L193.5,360.3L193.3,359.4L193.1,358.5L192.9,357.6L190.2,357.6L187.5,357.6L184.7,357.5L182.0,357.3L179.2,357.1L176.4,356.6L173.6,356.0L173.1,353.7L171.3,351.6L170.3,349.4L170.2,347.1L170.9,344.8L172.5,342.6L172.7,340.3L175.4,339.4L178.2,338.7L180.9,338.1L183.6,337.7L186.3,337.3L189.0,337.1L191.8,336.8L191.8,335.9L191.9,335.0L192.0,334.1L192.1,333.2L192.3,332.3L189.7,331.5L187.1,330.7L184.5,329.8L181.9,328.9L179.4,327.8L176.9,326.6L174.4,325.2L174.7,322.9L173.7,320.4L173.5,318.0L174.1,315.8L175.5,313.8L177.8,312.1L178.8,310.0L181.7,309.9L184.5,310.0L187.3,310.3L190.0,310.7L192.7,311.1L195.4,311.6L198.0,312.2L198.4,311.4L198.8,310.5L199.2,309.7L199.6,308.9L200.0,308.0L197.8,306.6L195.6,305.0L193.4,303.5L191.3,301.8L189.2,300.1L187.2,298.2L185.4,296.1L186.4,294.0L186.3,291.3L186.8,289.0L188.2,287.1L190.2,285.6L192.9,284.7L194.5,283.0L197.3,283.7L200.0,284.6L202.5,285.7L205.0,286.8L207.4,288.0L209.8,289.3L212.1,290.6L212.7,289.9L213.4,289.2L214.0,288.5L214.7,287.9L215.4,287.2L213.8,285.2L212.2,283.1L210.6,281.0L209.2,278.8L207.8,276.5L206.5,274.2L205.4,271.6L207.1,270.0L207.8,267.4L209.2,265.3L211.0,263.9L213.5,263.1L216.3,263.0L218.4,261.8L220.9,263.3L223.1,264.9L225.1,266.7L227.1,268.5L229.0,270.3L230.9,272.2L232.6,274.1L233.5,273.7L234.3,273.2L235.2,272.7L236.0,272.3L236.9,271.8L236.0,269.4L235.2,267.0L234.4,264.5L233.7,262.0L233.2,259.5L232.7,256.9L232.6,254.2L234.7,253.1L236.2,250.8L238.2,249.2L240.5,248.4L243.0,248.3L245.8,249.1L248.2,248.6L250.0,250.7L251.6,252.9L252.9,255.1L254.2,257.4L255.4,259.7L256.6,262.1L257.6,264.4L258.6,264.2L259.5,264.0L260.5,263.8L261.5,263.6L262.4,263.4L262.4,260.9L262.4,258.3L262.5,255.8L262.7,253.2L263.0,250.6L263.4,248.0L264.1,245.4Z" fill="url(#wall)"/><path transform="matrix(0.9976,0,0,0.9976,0.66,1.57)" d="M266.5,244.9L268.8,243.2L271.1,242.3L273.6,242.2L276.0,242.9L278.4,244.4L280.9,244.6L281.9,247.1L282.6,249.7L283.2,252.2L283.7,254.7L284.0,257.3L284.4,259.8L284.6,262.4L285.6,262.4L286.6,262.5L287.5,262.6L288.5,262.7L289.5,262.8L290.3,260.4L291.1,258.0L292.1,255.6L293.1,253.2L294.2,250.8L295.5,248.5L297.1,246.2L299.5,246.4L302.2,245.5L304.7,245.3L307.1,245.9L309.2,247.2L311.0,249.3L313.3,250.2L313.4,252.9L313.3,255.6L313.0,258.1L312.6,260.7L312.1,263.2L311.5,265.7L310.9,268.2L311.8,268.6L312.7,268.9L313.6,269.3L314.5,269.7L315.4,270.1L317.0,268.0L318.6,265.9L320.3,263.9L322.0,261.9L323.9,260.0L325.9,258.1L328.2,256.4L330.4,257.4L333.3,257.2L335.7,257.8L337.8,259.0L339.3,260.9L340.4,263.4L342.2,264.9L341.4,267.6L340.4,270.0L339.3,272.4L338.1,274.7L336.8,277.0L335.4,279.2L334.0,281.4L334.8,282.0L335.5,282.6L336.2,283.2L337.0,283.8L337.7,284.5L339.9,282.9L342.1,281.4L344.4,280.0L346.7,278.6L349.1,277.3L351.6,276.1L354.3,275.1L356.1,276.7L358.9,277.4L361.1,278.6L362.6,280.4L363.5,282.7L363.6,285.4L364.9,287.3L363.3,289.6L361.5,291.6L359.6,293.6L357.7,295.4L355.7,297.2L353.7,298.9L351.7,300.6L352.2,301.4L352.7,302.2L353.2,303.0L353.6,303.8L354.1,304.6L356.7,303.7L359.3,303.0L361.9,302.3L364.6,301.6L367.3,301.1L370.1,300.7L373.0,300.5L374.2,302.5L376.6,304.0L378.3,305.8L379.2,307.9L379.2,310.3L378.5,312.9L379.0,315.1L376.7,316.8L374.4,318.3L372.0,319.6L369.5,320.8L367.1,321.9L364.6,322.9L362.1,324.0L362.3,324.8L362.5,325.7L362.7,326.6L362.9,327.5L363.1,328.4L365.8,328.4L368.5,328.4L371.3,328.5L374.0,328.7L376.8,328.9L379.6,329.4L382.4,330.0L382.9,332.3L384.7,334.4L385.7,336.6L385.8,338.9L385.1,341.2L383.5,343.4L383.3,345.7L380.6,346.6L377.8,347.3L375.1,347.9L372.4,348.3L369.7,348.7L367.0,348.9L364.2,349.2L364.2,350.1L364.1,351.0L364.0,351.9L363.9,352.8L363.7,353.7L366.3,354.5L368.9,355.3L371.5,356.2L374.1,357.1L376.6,358.2L379.1,359.4L381.6,360.8L381.3,363.1L382.3,365.6L382.5,368.0L381.9,370.2L380.5,372.2L378.2,373.9L377.2,376.0L374.3,376.1L371.5,376.0L368.7,375.7L366.0,375.3L363.3,374.9L360.6,374.4L358.0,373.8L357.6,374.6L357.2,375.5L356.8,376.3L356.4,377.1L356.0,378.0L358.2,379.4L360.4,381.0L362.6,382.5L364.7,384.2L366.8,385.9L368.8,387.8L370.6,389.9L369.6,392.0L369.7,394.7L369.2,397.0L367.8,398.9L365.8,400.4L363.1,401.3L361.5,403.0L358.7,402.3L356.0,401.4L353.5,400.3L351.0,399.2L348.6,398.0L346.2,396.7L343.9,395.4L343.3,396.1L342.6,396.8L342.0,397.5L341.3,398.1L340.6,398.8L342.2,400.8L343.8,402.9L345.4,405.0L346.8,407.2L348.2,409.5L349.5,411.8L350.6,414.4L348.9,416.0L348.2,418.6L346.8,420.7L345.0,422.1L342.5,422.9L339.7,423.0L337.6,424.2L335.1,422.7L332.9,421.1L330.9,419.3L328.9,417.5L327.0,415.7L325.1,413.8L323.4,411.9L322.5,412.3L321.7,412.8L320.8,413.3L320.0,413.7L319.1,414.2L320.0,416.6L320.8,419.0L321.6,421.5L322.3,424.0L322.8,426.5L323.3,429.1L323.4,431.8L321.3,432.9L319.8,435.2L317.8,436.8L315.5,437.6L313.0,437.7L310.2,436.9L307.8,437.4L306.0,435.3L304.4,433.1L303.1,430.9L301.8,428.6L300.6,426.3L299.4,423.9L298.4,421.6L297.4,421.8L296.5,422.0L295.5,422.2L294.5,422.4L293.6,422.6L293.6,425.1L293.6,427.7L293.5,430.2L293.3,432.8L293.0,435.4L292.6,438.0L291.9,440.6L289.5,441.1L287.2,442.8L284.9,443.7L282.4,443.8L280.0,443.1L277.6,441.6L275.1,441.4L274.1,438.9L273.4,436.3L272.8,433.8L272.3,431.3L272.0,428.7L271.6,426.2L271.4,423.6L270.4,423.6L269.4,423.5L268.5,423.4L267.5,423.3L266.5,423.2L265.7,425.6L264.9,428.0L263.9,430.4L262.9,432.8L261.8,435.2L260.5,437.5L258.9,439.8L256.5,439.6L253.8,440.5L251.3,440.7L248.9,440.1L246.8,438.8L245.0,436.7L242.7,435.8L242.6,433.1L242.7,430.4L243.0,427.9L243.4,425.3L243.9,422.8L244.5,420.3L245.1,417.8L244.2,417.4L243.3,417.1L242.4,416.7L241.5,416.3L240.6,415.9L239.0,418.0L237.4,420.1L235.7,422.1L234.0,424.1L232.1,426.0L230.1,427.9L227.8,429.6L225.6,428.6L222.7,428.8L220.3,428.2L218.2,427.0L216.7,425.1L215.6,422.6L213.8,421.1L214.6,418.4L215.6,416.0L216.7,413.6L217.9,411.3L219.2,409.0L220.6,406.8L222.0,404.6L221.2,404.0L220.5,403.4L219.8,402.8L219.0,402.2L218.3,401.5L216.1,403.1L213.9,404.6L211.6,406.0L209.3,407.4L206.9,408.7L204.4,409.9L201.7,410.9L199.9,409.3L197.1,408.6L194.9,407.4L193.4,405.6L192.5,403.3L192.4,400.6L191.1,398.7L192.7,396.4L194.5,394.4L196.4,392.4L198.3,390.6L200.3,388.8L202.3,387.1L204.3,385.4L203.8,384.6L203.3,383.8L202.8,383.0L202.4,382.2L201.9,381.4L199.3,382.3L196.7,383.0L194.1,383.7L191.4,384.4L188.7,384.9L185.9,385.3L183.0,385.5L181.8,383.5L179.4,382.0L177.7,380.2L176.8,378.1L176.8,375.7L177.5,373.1L177.0,370.9L179.3,369.2L181.6,367.7L184.0,366.4L186.5,365.2L188.9,364.1L191.4,363.1L193.9,362.0L193.7,361.2L193.5,360.3L193.3,359.4L193.1,358.5L192.9,357.6L190.2,357.6L187.5,357.6L184.7,357.5L182.0,357.3L179.2,357.1L176.4,356.6L173.6,356.0L173.1,353.7L171.3,351.6L170.3,349.4L170.2,347.1L170.9,344.8L172.5,342.6L172.7,340.3L175.4,339.4L178.2,338.7L180.9,338.1L183.6,337.7L186.3,337.3L189.0,337.1L191.8,336.8L191.8,335.9L191.9,335.0L192.0,334.1L192.1,333.2L192.3,332.3L189.7,331.5L187.1,330.7L184.5,329.8L181.9,328.9L179.4,327.8L176.9,326.6L174.4,325.2L174.7,322.9L173.7,320.4L173.5,318.0L174.1,315.8L175.5,313.8L177.8,312.1L178.8,310.0L181.7,309.9L184.5,310.0L187.3,310.3L190.0,310.7L192.7,311.1L195.4,311.6L198.0,312.2L198.4,311.4L198.8,310.5L199.2,309.7L199.6,308.9L200.0,308.0L197.8,306.6L195.6,305.0L193.4,303.5L191.3,301.8L189.2,300.1L187.2,298.2L185.4,296.1L186.4,294.0L186.3,291.3L186.8,289.0L188.2,287.1L190.2,285.6L192.9,284.7L194.5,283.0L197.3,283.7L200.0,284.6L202.5,285.7L205.0,286.8L207.4,288.0L209.8,289.3L212.1,290.6L212.7,289.9L213.4,289.2L214.0,288.5L214.7,287.9L215.4,287.2L213.8,285.2L212.2,283.1L210.6,281.0L209.2,278.8L207.8,276.5L206.5,274.2L205.4,271.6L207.1,270.0L207.8,267.4L209.2,265.3L211.0,263.9L213.5,263.1L216.3,263.0L218.4,261.8L220.9,263.3L223.1,264.9L225.1,266.7L227.1,268.5L229.0,270.3L230.9,272.2L232.6,274.1L233.5,273.7L234.3,273.2L235.2,272.7L236.0,272.3L236.9,271.8L236.0,269.4L235.2,267.0L234.4,264.5L233.7,262.0L233.2,259.5L232.7,256.9L232.6,254.2L234.7,253.1L236.2,250.8L238.2,249.2L240.5,248.4L243.0,248.3L245.8,249.1L248.2,248.6L250.0,250.7L251.6,252.9L252.9,255.1L254.2,257.4L255.4,259.7L256.6,262.1L257.6,264.4L258.6,264.2L259.5,264.0L260.5,263.8L261.5,263.6L262.4,263.4L262.4,260.9L262.4,258.3L262.5,255.8L262.7,253.2L263.0,250.6L263.4,248.0L264.1,245.4Z" fill="url(#wall)"/><circle cx="280" cy="337" r="28" fill="url(#bore)"/><circle cx="280.0" cy="351.2" r="25.1" fill="#7496cc"/><path d="M266.5,244.9L268.8,243.2L271.1,242.3L273.6,242.2L276.0,242.9L278.4,244.4L280.9,244.6L281.9,247.1L282.6,249.7L283.2,252.2L283.7,254.7L284.0,257.3L284.4,259.8L284.6,262.4L285.6,262.4L286.6,262.5L287.5,262.6L288.5,262.7L289.5,262.8L290.3,260.4L291.1,258.0L292.1,255.6L293.1,253.2L294.2,250.8L295.5,248.5L297.1,246.2L299.5,246.4L302.2,245.5L304.7,245.3L307.1,245.9L309.2,247.2L311.0,249.3L313.3,250.2L313.4,252.9L313.3,255.6L313.0,258.1L312.6,260.7L312.1,263.2L311.5,265.7L310.9,268.2L311.8,268.6L312.7,268.9L313.6,269.3L314.5,269.7L315.4,270.1L317.0,268.0L318.6,265.9L320.3,263.9L322.0,261.9L323.9,260.0L325.9,258.1L328.2,256.4L330.4,257.4L333.3,257.2L335.7,257.8L337.8,259.0L339.3,260.9L340.4,263.4L342.2,264.9L341.4,267.6L340.4,270.0L339.3,272.4L338.1,274.7L336.8,277.0L335.4,279.2L334.0,281.4L334.8,282.0L335.5,282.6L336.2,283.2L337.0,283.8L337.7,284.5L339.9,282.9L342.1,281.4L344.4,280.0L346.7,278.6L349.1,277.3L351.6,276.1L354.3,275.1L356.1,276.7L358.9,277.4L361.1,278.6L362.6,280.4L363.5,282.7L363.6,285.4L364.9,287.3L363.3,289.6L361.5,291.6L359.6,293.6L357.7,295.4L355.7,297.2L353.7,298.9L351.7,300.6L352.2,301.4L352.7,302.2L353.2,303.0L353.6,303.8L354.1,304.6L356.7,303.7L359.3,303.0L361.9,302.3L364.6,301.6L367.3,301.1L370.1,300.7L373.0,300.5L374.2,302.5L376.6,304.0L378.3,305.8L379.2,307.9L379.2,310.3L378.5,312.9L379.0,315.1L376.7,316.8L374.4,318.3L372.0,319.6L369.5,320.8L367.1,321.9L364.6,322.9L362.1,324.0L362.3,324.8L362.5,325.7L362.7,326.6L362.9,327.5L363.1,328.4L365.8,328.4L368.5,328.4L371.3,328.5L374.0,328.7L376.8,328.9L379.6,329.4L382.4,330.0L382.9,332.3L384.7,334.4L385.7,336.6L385.8,338.9L385.1,341.2L383.5,343.4L383.3,345.7L380.6,346.6L377.8,347.3L375.1,347.9L372.4,348.3L369.7,348.7L367.0,348.9L364.2,349.2L364.2,350.1L364.1,351.0L364.0,351.9L363.9,352.8L363.7,353.7L366.3,354.5L368.9,355.3L371.5,356.2L374.1,357.1L376.6,358.2L379.1,359.4L381.6,360.8L381.3,363.1L382.3,365.6L382.5,368.0L381.9,370.2L380.5,372.2L378.2,373.9L377.2,376.0L374.3,376.1L371.5,376.0L368.7,375.7L366.0,375.3L363.3,374.9L360.6,374.4L358.0,373.8L357.6,374.6L357.2,375.5L356.8,376.3L356.4,377.1L356.0,378.0L358.2,379.4L360.4,381.0L362.6,382.5L364.7,384.2L366.8,385.9L368.8,387.8L370.6,389.9L369.6,392.0L369.7,394.7L369.2,397.0L367.8,398.9L365.8,400.4L363.1,401.3L361.5,403.0L358.7,402.3L356.0,401.4L353.5,400.3L351.0,399.2L348.6,398.0L346.2,396.7L343.9,395.4L343.3,396.1L342.6,396.8L342.0,397.5L341.3,398.1L340.6,398.8L342.2,400.8L343.8,402.9L345.4,405.0L346.8,407.2L348.2,409.5L349.5,411.8L350.6,414.4L348.9,416.0L348.2,418.6L346.8,420.7L345.0,422.1L342.5,422.9L339.7,423.0L337.6,424.2L335.1,422.7L332.9,421.1L330.9,419.3L328.9,417.5L327.0,415.7L325.1,413.8L323.4,411.9L322.5,412.3L321.7,412.8L320.8,413.3L320.0,413.7L319.1,414.2L320.0,416.6L320.8,419.0L321.6,421.5L322.3,424.0L322.8,426.5L323.3,429.1L323.4,431.8L321.3,432.9L319.8,435.2L317.8,436.8L315.5,437.6L313.0,437.7L310.2,436.9L307.8,437.4L306.0,435.3L304.4,433.1L303.1,430.9L301.8,428.6L300.6,426.3L299.4,423.9L298.4,421.6L297.4,421.8L296.5,422.0L295.5,422.2L294.5,422.4L293.6,422.6L293.6,425.1L293.6,427.7L293.5,430.2L293.3,432.8L293.0,435.4L292.6,438.0L291.9,440.6L289.5,441.1L287.2,442.8L284.9,443.7L282.4,443.8L280.0,443.1L277.6,441.6L275.1,441.4L274.1,438.9L273.4,436.3L272.8,433.8L272.3,431.3L272.0,428.7L271.6,426.2L271.4,423.6L270.4,423.6L269.4,423.5L268.5,423.4L267.5,423.3L266.5,423.2L265.7,425.6L264.9,428.0L263.9,430.4L262.9,432.8L261.8,435.2L260.5,437.5L258.9,439.8L256.5,439.6L253.8,440.5L251.3,440.7L248.9,440.1L246.8,438.8L245.0,436.7L242.7,435.8L242.6,433.1L242.7,430.4L243.0,427.9L243.4,425.3L243.9,422.8L244.5,420.3L245.1,417.8L244.2,417.4L243.3,417.1L242.4,416.7L241.5,416.3L240.6,415.9L239.0,418.0L237.4,420.1L235.7,422.1L234.0,424.1L232.1,426.0L230.1,427.9L227.8,429.6L225.6,428.6L222.7,428.8L220.3,428.2L218.2,427.0L216.7,425.1L215.6,422.6L213.8,421.1L214.6,418.4L215.6,416.0L216.7,413.6L217.9,411.3L219.2,409.0L220.6,406.8L222.0,404.6L221.2,404.0L220.5,403.4L219.8,402.8L219.0,402.2L218.3,401.5L216.1,403.1L213.9,404.6L211.6,406.0L209.3,407.4L206.9,408.7L204.4,409.9L201.7,410.9L199.9,409.3L197.1,408.6L194.9,407.4L193.4,405.6L192.5,403.3L192.4,400.6L191.1,398.7L192.7,396.4L194.5,394.4L196.4,392.4L198.3,390.6L200.3,388.8L202.3,387.1L204.3,385.4L203.8,384.6L203.3,383.8L202.8,383.0L202.4,382.2L201.9,381.4L199.3,382.3L196.7,383.0L194.1,383.7L191.4,384.4L188.7,384.9L185.9,385.3L183.0,385.5L181.8,383.5L179.4,382.0L177.7,380.2L176.8,378.1L176.8,375.7L177.5,373.1L177.0,370.9L179.3,369.2L181.6,367.7L184.0,366.4L186.5,365.2L188.9,364.1L191.4,363.1L193.9,362.0L193.7,361.2L193.5,360.3L193.3,359.4L193.1,358.5L192.9,357.6L190.2,357.6L187.5,357.6L184.7,357.5L182.0,357.3L179.2,357.1L176.4,356.6L173.6,356.0L173.1,353.7L171.3,351.6L170.3,349.4L170.2,347.1L170.9,344.8L172.5,342.6L172.7,340.3L175.4,339.4L178.2,338.7L180.9,338.1L183.6,337.7L186.3,337.3L189.0,337.1L191.8,336.8L191.8,335.9L191.9,335.0L192.0,334.1L192.1,333.2L192.3,332.3L189.7,331.5L187.1,330.7L184.5,329.8L181.9,328.9L179.4,327.8L176.9,326.6L174.4,325.2L174.7,322.9L173.7,320.4L173.5,318.0L174.1,315.8L175.5,313.8L177.8,312.1L178.8,310.0L181.7,309.9L184.5,310.0L187.3,310.3L190.0,310.7L192.7,311.1L195.4,311.6L198.0,312.2L198.4,311.4L198.8,310.5L199.2,309.7L199.6,308.9L200.0,308.0L197.8,306.6L195.6,305.0L193.4,303.5L191.3,301.8L189.2,300.1L187.2,298.2L185.4,296.1L186.4,294.0L186.3,291.3L186.8,289.0L188.2,287.1L190.2,285.6L192.9,284.7L194.5,283.0L197.3,283.7L200.0,284.6L202.5,285.7L205.0,286.8L207.4,288.0L209.8,289.3L212.1,290.6L212.7,289.9L213.4,289.2L214.0,288.5L214.7,287.9L215.4,287.2L213.8,285.2L212.2,283.1L210.6,281.0L209.2,278.8L207.8,276.5L206.5,274.2L205.4,271.6L207.1,270.0L207.8,267.4L209.2,265.3L211.0,263.9L213.5,263.1L216.3,263.0L218.4,261.8L220.9,263.3L223.1,264.9L225.1,266.7L227.1,268.5L229.0,270.3L230.9,272.2L232.6,274.1L233.5,273.7L234.3,273.2L235.2,272.7L236.0,272.3L236.9,271.8L236.0,269.4L235.2,267.0L234.4,264.5L233.7,262.0L233.2,259.5L232.7,256.9L232.6,254.2L234.7,253.1L236.2,250.8L238.2,249.2L240.5,248.4L243.0,248.3L245.8,249.1L248.2,248.6L250.0,250.7L251.6,252.9L252.9,255.1L254.2,257.4L255.4,259.7L256.6,262.1L257.6,264.4L258.6,264.2L259.5,264.0L260.5,263.8L261.5,263.6L262.4,263.4L262.4,260.9L262.4,258.3L262.5,255.8L262.7,253.2L263.0,250.6L263.4,248.0L264.1,245.4ZM253,337 A27,27 0 1 0 307,337 A27,27 0 1 0 253,337Z" fill="#72a6ee" fill-rule="evenodd"/><path d="M256,349 A27,27 0 0 0 304,349" fill="none" stroke="#2a3a58" stroke-width="0.9"/><path d="M282,337 L285,318" stroke="#30a040" stroke-width="2"/><path d="M282,337 L307,340" stroke="#c04858" stroke-width="2"/><path d="M282,337 L277,283" stroke="#2a3c90" stroke-width="3.2"/><circle cx="277" cy="283" r="7" fill="#4058c0" fill-opacity="0.75"/><circle cx="277" cy="283" r="2.5" fill="#1a2a90"/><text x="279" y="274" font-size="8" fill="#2040e0" font-family="Liberation Sans" text-anchor="middle">Z</text><path d="M366,343 L418,348.5" stroke="#b85868" stroke-width="1.8"/><path d="M416,344.5 L429,350 L415,353Z" fill="#b05868"/><text x="435" y="351" font-size="8" fill="#e03030" font-family="Liberation Sans" text-anchor="middle">X</text><path d="M291,256 L298.5,218" stroke="#3c8c58" stroke-width="2.8"/><path d="M292.5,218.5 L300,209.5 L305.5,218 Q299,215 292.5,218.5Z" fill="#4a9a68"/><text x="304" y="203" font-size="8.5" font-weight="bold" fill="#30c050" font-family="Liberation Sans" text-anchor="middle">Y</text><polyline points="403,349 400,322 398,315 354,256 291,233 283,232 262,234 255,235 186,272 152,335 151,343 151,366 152,374 179,432 227,465 235,467 260,473 269,474" fill="none" stroke="#38d8e8" stroke-width="1.1"/><path d="M255,235 L257,258" stroke="#38d8e8" stroke-width="1"/><path d="M262,234 L257,258" stroke="#38d8e8" stroke-width="1"/><path d="M283,232 L292,255" stroke="#38d8e8" stroke-width="1"/><path d="M291,233 L292,255" stroke="#38d8e8" stroke-width="1"/><path d="M152,335 L183,331" stroke="#38d8e8" stroke-width="1"/><path d="M151,343 L183,333" stroke="#38d8e8" stroke-width="1"/><path d="M151,366 L182,359" stroke="#38d8e8" stroke-width="1"/><path d="M152,374 L183,361" stroke="#38d8e8" stroke-width="1"/><path d="M227,465 L236,434" stroke="#38d8e8" stroke-width="1"/><path d="M235,467 L237,434" stroke="#38d8e8" stroke-width="1"/><path d="M260,473 L275,443" stroke="#38d8e8" stroke-width="1"/><path d="M269,474 L275,443" stroke="#38d8e8" stroke-width="1"/><path d="M398,315 L373,319" stroke="#38d8e8" stroke-width="1"/><path d="M400,322 L375,320" stroke="#38d8e8" stroke-width="1"/><path d="M403,349 L378,345" stroke="#38d8e8" stroke-width="1"/><defs><pattern id="hp" width="1.8" height="1.8" patternUnits="userSpaceOnUse" patternTransform="rotate(25)"><path d="M0,0 H1.8 M0,0 V1.8" stroke="#ff1838" stroke-width="0.6"/></pattern></defs><polygon points="259,248 265,247 265,259 258,258" fill="#e02848" fill-opacity="0.3"/><polygon points="259,248 265,247 265,259 258,258" fill="url(#hp)"/><polygon points="283,246 288,244 292,255 286,258" fill="#e02848" fill-opacity="0.3"/><polygon points="283,246 288,244 292,255 286,258" fill="url(#hp)"/><polygon points="168,358 180,356 186,366 172,368" fill="#e02848" fill-opacity="0.3"/><polygon points="168,358 180,356 186,366 172,368" fill="url(#hp)"/><polygon points="236,434 245,433 248,447 239,450" fill="#e02848" fill-opacity="0.3"/><polygon points="236,434 245,433 248,447 239,450" fill="url(#hp)"/><polygon points="260,448 273,440 276,442 265,455" fill="#e02848" fill-opacity="0.3"/><polygon points="260,448 273,440 276,442 265,455" fill="url(#hp)"/><polygon points="365,340 380,336 389,345 372,351" fill="#e02848" fill-opacity="0.3"/><polygon points="365,340 380,336 389,345 372,351" fill="url(#hp)"/><path d="M170,341 L184,333 M371,319 L386,323" stroke="#ee2040" stroke-width="1"/><rect x="401" y="347" width="4" height="4" fill="#ee1010"/><rect x="398" y="320" width="4" height="4" fill="#ee1010"/><rect x="396" y="313" width="4" height="4" fill="#ee1010"/><rect x="352" y="254" width="4" height="4" fill="#ee1010"/><rect x="289" y="231" width="4" height="4" fill="#ee1010"/><rect x="281" y="230" width="4" height="4" fill="#ee1010"/><rect x="260" y="232" width="4" height="4" fill="#ee1010"/><rect x="253" y="233" width="4" height="4" fill="#ee1010"/><rect x="184" y="270" width="4" height="4" fill="#ee1010"/><rect x="150" y="333" width="4" height="4" fill="#ee1010"/><rect x="149" y="341" width="4" height="4" fill="#ee1010"/><rect x="149" y="364" width="4" height="4" fill="#ee1010"/><rect x="150" y="372" width="4" height="4" fill="#ee1010"/><rect x="177" y="430" width="4" height="4" fill="#ee1010"/><rect x="225" y="463" width="4" height="4" fill="#ee1010"/><rect x="233" y="465" width="4" height="4" fill="#ee1010"/><rect x="258" y="471" width="4" height="4" fill="#ee1010"/><rect x="267" y="472" width="4" height="4" fill="#ee1010"/></svg>
<svg class="a" style="left:30px;top:455px" width="45" height="35" viewBox="0 0 45 35"><path d="M12,28 L12.5,14" stroke="#30b030" stroke-width="1.2"/><path d="M9.5,15 L12.5,8.5 L15,15Z" fill="#10b020"/><path d="M10,17 L13.5,14 L16.5,18 L13,22Z" fill="#98b8f8"/><path d="M12,28 L27,30" stroke="#e85040" stroke-width="1.2"/><path d="M26,27 L33.5,30.5 L26,33Z" fill="#f04020"/><text x="16" y="11" font-size="6.5" fill="#c8c840" font-family="Liberation Sans">Y</text><text x="17.5" y="18.5" font-size="6.5" fill="#c8c840" font-family="Liberation Sans">Z</text><text x="35" y="33" font-size="6.5" fill="#c8c840" font-family="Liberation Sans">X</text></svg>
<div class="a" style="left:743px;top:25.5px;width:31px;height:18px;background:linear-gradient(#b4eaf4,#d8f2f6 40%,#f2f6f6 85%,#ececec);border-left:1px solid #f4f4f4;border-right:1px solid #d0d0d0;border-radius:2px 2px 0 0"></div>
<svg class="a" style="left:751px;top:27px" width="15" height="15" viewBox="0 0 16 16"><path d="M2,5 L8,2 L14,4.5 L8,7.5Z" fill="#7cc8f8"/><path d="M2,5 L8,7.5 L8,14 L2,11Z" fill="#2a78c8"/><path d="M8,7.5 L14,4.5 L14,11 L8,14Z" fill="#0e3a78"/><path d="M11,15 L15,11 L15,15Z" fill="#111"/></svg>
<svg class="a" style="left:791px;top:29px" width="11" height="11" viewBox="0 0 16 16"><path d="M2,5 L8,2 L14,4.5 L8,7.5Z" fill="#7cc8f8"/><path d="M2,5 L8,7.5 L8,14 L2,11Z" fill="#2a78c8"/><path d="M8,7.5 L14,4.5 L14,11 L8,14Z" fill="#0e3a78"/></svg>
<svg class="a" style="left:808px;top:29px" width="10" height="11" viewBox="0 0 16 16"><path d="M3,2 H13 M8,2 V11" stroke="#555" stroke-width="2.2"/><path d="M5,3 L8,8 L11,3" fill="#999"/><circle cx="8" cy="13" r="2" fill="#e02020"/></svg>
<svg class="a" style="left:822px;top:29px" width="11" height="11" viewBox="0 0 16 16"><path d="M2,3 H14 V9 L8,15 L2,9Z" fill="#b85818" stroke="#703008" stroke-width="0.8"/><rect x="4" y="4" width="8" height="3" fill="#f0c060"/></svg>
<svg class="a" style="left:837px;top:29px" width="11" height="11" viewBox="0 0 16 16"><rect x="2" y="2" width="12" height="12" fill="#e8eef8" stroke="#4a6ab0" stroke-width="0.8"/><rect x="2" y="2" width="12" height="3" fill="#4a6ab0"/><circle cx="7" cy="10" r="2.5" fill="#c080e0"/><circle cx="10" cy="10" r="2" fill="#60c060"/></svg>
<svg class="a" style="left:966px;top:29px" width="10" height="10" viewBox="0 0 16 16"><rect x="2" y="2.5" width="11" height="11" fill="#f4f4f4" stroke="#666" stroke-width="1" transform="rotate(-8 8 8)"/><path d="M4.5,8 L7,11 L12,3.5" fill="none" stroke="#222" stroke-width="1.6"/></svg>
<svg class="a" style="left:985px;top:28.5px" width="11" height="11" viewBox="0 0 16 16"><rect x="1.5" y="1.5" width="13" height="13" fill="#e8eef8" stroke="#3a6ac0" stroke-width="1.2"/><path d="M4,4 L12,12 M12,4 L4,12" stroke="#e02020" stroke-width="1.8"/></svg>
<div class="a" style="left:734px;top:42.5px;width:225.5px;height:475px;background:#fff;border:1px solid #bcbcbc;border-radius:4px 4px 3px 3px;box-shadow:inset 1px 1px 0 #f0f0f0"></div>
<div class="a" style="left:735px;top:43.5px;width:223.5px;height:12px;background:linear-gradient(#f2f2f2,#e8e8e8);border-radius:3px 3px 0 0"></div>
<div class="a" style="left:735px;top:55px;width:223.5px;height:1.2px;background:#e6c880"></div>
<div class="a" style="left:840px;top:44px;width:1px;height:11px;background:#d8d8d8"></div>
<div class="a" style="left:946px;top:44px;width:1px;height:11px;background:#d8d8d8"></div>
<div class="a" style="left:840px;top:56px;width:1px;height:460px;background:#f2f2f2"></div>
<div class="a" style="left:946px;top:56px;width:1px;height:460px;background:#f2f2f2"></div>
<div class="t" style="left:686.0px;width:200px;text-align:center;top:45.4px;font-size:8px;color:#111;text-shadow:0 0 0.35px #111">理论</div>
<div class="t" style="left:792.0px;width:200px;text-align:center;top:45.4px;font-size:8px;color:#111;text-shadow:0 0 0.35px #111">实际</div>
<svg class="a" style="left:735px;top:56px;overflow:hidden" width="223" height="460" viewBox="735 56 223 460"><g font-family="Liberation Sans" font-weight="bold" font-size="12.5" fill="#ebebeb"><text x="516.2" y="-88.0" transform="rotate(-39.6 516.2 -88.0)" textLength="88" lengthAdjust="spacingAndGlyphs">RationalDMIS</text><text x="553.5" y="-88.0" transform="rotate(-39.6 553.5 -88.0)" textLength="88" lengthAdjust="spacingAndGlyphs">RationalDMIS</text><text x="590.8" y="-88.0" transform="rotate(-39.6 590.8 -88.0)" textLength="88" lengthAdjust="spacingAndGlyphs">RationalDMIS</text><text x="628.1" y="-88.0" transform="rotate(-39.6 628.1 -88.0)" textLength="88" lengthAdjust="spacingAndGlyphs">RationalDMIS</text><text x="665.4" y="-88.0" transform="rotate(-39.6 665.4 -88.0)" textLength="88" lengthAdjust="spacingAndGlyphs">RationalDMIS</text><text x="702.7" y="-88.0" transform="rotate(-39.6 702.7 -88.0)" textLength="88" lengthAdjust="spacingAndGlyphs">RationalDMIS</text><text x="740.0" y="-88.0" transform="rotate(-39.6 740.0 -88.0)" textLength="88" lengthAdjust="spacingAndGlyphs">RationalDMIS</text><text x="777.3" y="-88.0" transform="rotate(-39.6 777.3 -88.0)" textLength="88" lengthAdjust="spacingAndGlyphs">RationalDMIS</text><text x="814.6" y="-88.0" transform="rotate(-39.6 814.6 -88.0)" textLength="88" lengthAdjust="spacingAndGlyphs">RationalDMIS</text><text x="851.9" y="-88.0" transform="rotate(-39.6 851.9 -88.0)" textLength="88" lengthAdjust="spacingAndGlyphs">RationalDMIS</text><text x="889.2" y="-88.0" transform="rotate(-39.6 889.2 -88.0)" textLength="88" lengthAdjust="spacingAndGlyphs">RationalDMIS</text><text x="926.5" y="-88.0" transform="rotate(-39.6 926.5 -88.0)" textLength="88" lengthAdjust="spacingAndGlyphs">RationalDMIS</text><text x="963.8" y="-88.0" transform="rotate(-39.6 963.8 -88.0)" textLength="88" lengthAdjust="spacingAndGlyphs">RationalDMIS</text><text x="1001.1" y="-88.0" transform="rotate(-39.6 1001.1 -88.0)" textLength="88" lengthAdjust="spacingAndGlyphs">RationalDMIS</text><text x="1038.4" y="-88.0" transform="rotate(-39.6 1038.4 -88.0)" textLength="88" lengthAdjust="spacingAndGlyphs">RationalDMIS</text><text x="516.2" y="-24.0" transform="rotate(-39.6 516.2 -24.0)" textLength="88" lengthAdjust="spacingAndGlyphs">RationalDMIS</text><text x="553.5" y="-24.0" transform="rotate(-39.6 553.5 -24.0)" textLength="88" lengthAdjust="spacingAndGlyphs">RationalDMIS</text><text x="590.8" y="-24.0" transform="rotate(-39.6 590.8 -24.0)" textLength="88" lengthAdjust="spacingAndGlyphs">RationalDMIS</text><text x="628.1" y="-24.0" transform="rotate(-39.6 628.1 -24.0)" textLength="88" lengthAdjust="spacingAndGlyphs">RationalDMIS</text><text x="665.4" y="-24.0" transform="rotate(-39.6 665.4 -24.0)" textLength="88" lengthAdjust="spacingAndGlyphs">RationalDMIS</text><text x="702.7" y="-24.0" transform="rotate(-39.6 702.7 -24.0)" textLength="88" lengthAdjust="spacingAndGlyphs">RationalDMIS</text><text x="740.0" y="-24.0" transform="rotate(-39.6 740.0 -24.0)" textLength="88" lengthAdjust="spacingAndGlyphs">RationalDMIS</text><text x="777.3" y="-24.0" transform="rotate(-39.6 777.3 -24.0)" textLength="88" lengthAdjust="spacingAndGlyphs">RationalDMIS</text><text x="814.6" y="-24.0" transform="rotate(-39.6 814.6 -24.0)" textLength="88" lengthAdjust="spacingAndGlyphs">RationalDMIS</text><text x="851.9" y="-24.0" transform="rotate(-39.6 851.9 -24.0)" textLength="88" lengthAdjust="spacingAndGlyphs">RationalDMIS</text><text x="889.2" y="-24.0" transform="rotate(-39.6 889.2 -24.0)" textLength="88" lengthAdjust="spacingAndGlyphs">RationalDMIS</text><text x="926.5" y="-24.0" transform="rotate(-39.6 926.5 -24.0)" textLength="88" lengthAdjust="spacingAndGlyphs">RationalDMIS</text><text x="963.8" y="-24.0" transform="rotate(-39.6 963.8 -24.0)" textLength="88" lengthAdjust="spacingAndGlyphs">RationalDMIS</text><text x="1001.1" y="-24.0" transform="rotate(-39.6 1001.1 -24.0)" textLength="88" lengthAdjust="spacingAndGlyphs">RationalDMIS</text><text x="1038.4" y="-24.0" transform="rotate(-39.6 1038.4 -24.0)" textLength="88" lengthAdjust="spacingAndGlyphs">RationalDMIS</text><text x="516.2" y="40.0" transform="rotate(-39.6 516.2 40.0)" textLength="88" lengthAdjust="spacingAndGlyphs">RationalDMIS</text><text x="553.5" y="40.0" transform="rotate(-39.6 553.5 40.0)" textLength="88" lengthAdjust="spacingAndGlyphs">RationalDMIS</text><text x="590.8" y="40.0" transform="rotate(-39.6 590.8 40.0)" textLength="88" lengthAdjust="spacingAndGlyphs">RationalDMIS</text><text x="628.1" y="40.0" transform="rotate(-39.6 628.1 40.0)" textLength="88" lengthAdjust="spacingAndGlyphs">RationalDMIS</text><text x="665.4" y="40.0" transform="rotate(-39.6 665.4 40.0)" textLength="88" lengthAdjust="spacingAndGlyphs">RationalDMIS</text><text x="702.7" y="40.0" transform="rotate(-39.6 702.7 40.0)" textLength="88" lengthAdjust="spacingAndGlyphs">RationalDMIS</text><text x="740.0" y="40.0" transform="rotate(-39.6 740.0 40.0)" textLength="88" lengthAdjust="spacingAndGlyphs">RationalDMIS</text><text x="777.3" y="40.0" transform="rotate(-39.6 777.3 40.0)" textLength="88" lengthAdjust="spacingAndGlyphs">RationalDMIS</text><text x="814.6" y="40.0" transform="rotate(-39.6 814.6 40.0)" textLength="88" lengthAdjust="spacingAndGlyphs">RationalDMIS</text><text x="851.9" y="40.0" transform="rotate(-39.6 851.9 40.0)" textLength="88" lengthAdjust="spacingAndGlyphs">RationalDMIS</text><text x="889.2" y="40.0" transform="rotate(-39.6 889.2 40.0)" textLength="88" lengthAdjust="spacingAndGlyphs">RationalDMIS</text><text x="926.5" y="40.0" transform="rotate(-39.6 926.5 40.0)" textLength="88" lengthAdjust="spacingAndGlyphs">RationalDMIS</text><text x="963.8" y="40.0" transform="rotate(-39.6 963.8 40.0)" textLength="88" lengthAdjust="spacingAndGlyphs">RationalDMIS</text><text x="1001.1" y="40.0" transform="rotate(-39.6 1001.1 40.0)" textLength="88" lengthAdjust="spacingAndGlyphs">RationalDMIS</text><text x="1038.4" y="40.0" transform="rotate(-39.6 1038.4 40.0)" textLength="88" lengthAdjust="spacingAndGlyphs">RationalDMIS</text><text x="516.2" y="104.0" transform="rotate(-39.6 516.2 104.0)" textLength="88" lengthAdjust="spacingAndGlyphs">RationalDMIS</text><text x="553.5" y="104.0" transform="rotate(-39.6 553.5 104.0)" textLength="88" lengthAdjust="spacingAndGlyphs">RationalDMIS</text><text x="590.8" y="104.0" transform="rotate(-39.6 590.8 104.0)" textLength="88" lengthAdjust="spacingAndGlyphs">RationalDMIS</text><text x="628.1" y="104.0" transform="rotate(-39.6 628.1 104.0)" textLength="88" lengthAdjust="spacingAndGlyphs">RationalDMIS</text><text x="665.4" y="104.0" transform="rotate(-39.6 665.4 104.0)" textLength="88" lengthAdjust="spacingAndGlyphs">RationalDMIS</text><text x="702.7" y="104.0" transform="rotate(-39.6 702.7 104.0)" textLength="88" lengthAdjust="spacingAndGlyphs">RationalDMIS</text><text x="740.0" y="104.0" transform="rotate(-39.6 740.0 104.0)" textLength="88" lengthAdjust="spacingAndGlyphs">RationalDMIS</text><text x="777.3" y="104.0" transform="rotate(-39.6 777.3 104.0)" textLength="88" lengthAdjust="spacingAndGlyphs">RationalDMIS</text><text x="814.6" y="104.0" transform="rotate(-39.6 814.6 104.0)" textLength="88" lengthAdjust="spacingAndGlyphs">RationalDMIS</text><text x="851.9" y="104.0" transform="rotate(-39.6 851.9 104.0)" textLength="88" lengthAdjust="spacingAndGlyphs">RationalDMIS</text><text x="889.2" y="104.0" transform="rotate(-39.6 889.2 104.0)" textLength="88" lengthAdjust="spacingAndGlyphs">RationalDMIS</text><text x="926.5" y="104.0" transform="rotate(-39.6 926.5 104.0)" textLength="88" lengthAdjust="spacingAndGlyphs">RationalDMIS</text><text x="963.8" y="104.0" transform="rotate(-39.6 963.8 104.0)" textLength="88" lengthAdjust="spacingAndGlyphs">RationalDMIS</text><text x="1001.1" y="104.0" transform="rotate(-39.6 1001.1 104.0)" textLength="88" lengthAdjust="spacingAndGlyphs">RationalDMIS</text><text x="1038.4" y="104.0" transform="rotate(-39.6 1038.4 104.0)" textLength="88" lengthAdjust="spacingAndGlyphs">RationalDMIS</text><text x="516.2" y="168.0" transform="rotate(-39.6 516.2 168.0)" textLength="88" lengthAdjust="spacingAndGlyphs">RationalDMIS</text><text x="553.5" y="168.0" transform="rotate(-39.6 553.5 168.0)" textLength="88" lengthAdjust="spacingAndGlyphs">RationalDMIS</text><text x="590.8" y="168.0" transform="rotate(-39.6 590.8 168.0)" textLength="88" lengthAdjust="spacingAndGlyphs">RationalDMIS</text><text x="628.1" y="168.0" transform="rotate(-39.6 628.1 168.0)" textLength="88" lengthAdjust="spacingAndGlyphs">RationalDMIS</text><text x="665.4" y="168.0" transform="rotate(-39.6 665.4 168.0)" textLength="88" lengthAdjust="spacingAndGlyphs">RationalDMIS</text><text x="702.7" y="168.0" transform="rotate(-39.6 702.7 168.0)" textLength="88" lengthAdjust="spacingAndGlyphs">RationalDMIS</text><text x="740.0" y="168.0" transform="rotate(-39.6 740.0 168.0)" textLength="88" lengthAdjust="spacingAndGlyphs">RationalDMIS</text><text x="777.3" y="168.0" transform="rotate(-39.6 777.3 168.0)" textLength="88" lengthAdjust="spacingAndGlyphs">RationalDMIS</text><text x="814.6" y="168.0" transform="rotate(-39.6 814.6 168.0)" textLength="88" lengthAdjust="spacingAndGlyphs">RationalDMIS</text><text x="851.9" y="168.0" transform="rotate(-39.6 851.9 168.0)" textLength="88" lengthAdjust="spacingAndGlyphs">RationalDMIS</text><text x="889.2" y="168.0" transform="rotate(-39.6 889.2 168.0)" textLength="88" lengthAdjust="spacingAndGlyphs">RationalDMIS</text><text x="926.5" y="168.0" transform="rotate(-39.6 926.5 168.0)" textLength="88" lengthAdjust="spacingAndGlyphs">RationalDMIS</text><text x="963.8" y="168.0" transform="rotate(-39.6 963.8 168.0)" textLength="88" lengthAdjust="spacingAndGlyphs">RationalDMIS</text><text x="1001.1" y="168.0" transform="rotate(-39.6 1001.1 168.0)" textLength="88" lengthAdjust="spacingAndGlyphs">RationalDMIS</text><text x="1038.4" y="168.0" transform="rotate(-39.6 1038.4 168.0)" textLength="88" lengthAdjust="spacingAndGlyphs">RationalDMIS</text><text x="516.2" y="232.0" transform="rotate(-39.6 516.2 232.0)" textLength="88" lengthAdjust="spacingAndGlyphs">RationalDMIS</text><text x="553.5" y="232.0" transform="rotate(-39.6 553.5 232.0)" textLength="88" lengthAdjust="spacingAndGlyphs">RationalDMIS</text><text x="590.8" y="232.0" transform="rotate(-39.6 590.8 232.0)" textLength="88" lengthAdjust="spacingAndGlyphs">RationalDMIS</text><text x="628.1" y="232.0" transform="rotate(-39.6 628.1 232.0)" textLength="88" lengthAdjust="spacingAndGlyphs">RationalDMIS</text><text x="665.4" y="232.0" transform="rotate(-39.6 665.4 232.0)" textLength="88" lengthAdjust="spacingAndGlyphs">RationalDMIS</text><text x="702.7" y="232.0" transform="rotate(-39.6 702.7 232.0)" textLength="88" lengthAdjust="spacingAndGlyphs">RationalDMIS</text><text x="740.0" y="232.0" transform="rotate(-39.6 740.0 232.0)" textLength="88" lengthAdjust="spacingAndGlyphs">RationalDMIS</text><text x="777.3" y="232.0" transform="rotate(-39.6 777.3 232.0)" textLength="88" lengthAdjust="spacingAndGlyphs">RationalDMIS</text><text x="814.6" y="232.0" transform="rotate(-39.6 814.6 232.0)" textLength="88" lengthAdjust="spacingAndGlyphs">RationalDMIS</text><text x="851.9" y="232.0" transform="rotate(-39.6 851.9 232.0)" textLength="88" lengthAdjust="spacingAndGlyphs">RationalDMIS</text><text x="889.2" y="232.0" transform="rotate(-39.6 889.2 232.0)" textLength="88" lengthAdjust="spacingAndGlyphs">RationalDMIS</text><text x="926.5" y="232.0" transform="rotate(-39.6 926.5 232.0)" textLength="88" lengthAdjust="spacingAndGlyphs">RationalDMIS</text><text x="963.8" y="232.0" transform="rotate(-39.6 963.8 232.0)" textLength="88" lengthAdjust="spacingAndGlyphs">RationalDMIS</text><text x="1001.1" y="232.0" transform="rotate(-39.6 1001.1 232.0)" textLength="88" lengthAdjust="spacingAndGlyphs">RationalDMIS</text><text x="1038.4" y="232.0" transform="rotate(-39.6 1038.4 232.0)" textLength="88" lengthAdjust="spacingAndGlyphs">RationalDMIS</text><text x="516.2" y="296.0" transform="rotate(-39.6 516.2 296.0)" textLength="88" lengthAdjust="spacingAndGlyphs">RationalDMIS</text><text x="553.5" y="296.0" transform="rotate(-39.6 553.5 296.0)" textLength="88" lengthAdjust="spacingAndGlyphs">RationalDMIS</text><text x="590.8" y="296.0" transform="rotate(-39.6 590.8 296.0)" textLength="88" lengthAdjust="spacingAndGlyphs">RationalDMIS</text><text x="628.1" y="296.0" transform="rotate(-39.6 628.1 296.0)" textLength="88" lengthAdjust="spacingAndGlyphs">RationalDMIS</text><text x="665.4" y="296.0" transform="rotate(-39.6 665.4 296.0)" textLength="88" lengthAdjust="spacingAndGlyphs">RationalDMIS</text><text x="702.7" y="296.0" transform="rotate(-39.6 702.7 296.0)" textLength="88" lengthAdjust="spacingAndGlyphs">RationalDMIS</text><text x="740.0" y="296.0" transform="rotate(-39.6 740.0 296.0)" textLength="88" lengthAdjust="spacingAndGlyphs">RationalDMIS</text><text x="777.3" y="296.0" transform="rotate(-39.6 777.3 296.0)" textLength="88" lengthAdjust="spacingAndGlyphs">RationalDMIS</text><text x="814.6" y="296.0" transform="rotate(-39.6 814.6 296.0)" textLength="88" lengthAdjust="spacingAndGlyphs">RationalDMIS</text><text x="851.9" y="296.0" transform="rotate(-39.6 851.9 296.0)" textLength="88" lengthAdjust="spacingAndGlyphs">RationalDMIS</text><text x="889.2" y="296.0" transform="rotate(-39.6 889.2 296.0)" textLength="88" lengthAdjust="spacingAndGlyphs">RationalDMIS</text><text x="926.5" y="296.0" transform="rotate(-39.6 926.5 296.0)" textLength="88" lengthAdjust="spacingAndGlyphs">RationalDMIS</text><text x="963.8" y="296.0" transform="rotate(-39.6 963.8 296.0)" textLength="88" lengthAdjust="spacingAndGlyphs">RationalDMIS</text><text x="1001.1" y="296.0" transform="rotate(-39.6 1001.1 296.0)" textLength="88" lengthAdjust="spacingAndGlyphs">RationalDMIS</text><text x="1038.4" y="296.0" transform="rotate(-39.6 1038.4 296.0)" textLength="88" lengthAdjust="spacingAndGlyphs">RationalDMIS</text><text x="516.2" y="360.0" transform="rotate(-39.6 516.2 360.0)" textLength="88" lengthAdjust="spacingAndGlyphs">RationalDMIS</text><text x="553.5" y="360.0" transform="rotate(-39.6 553.5 360.0)" textLength="88" lengthAdjust="spacingAndGlyphs">RationalDMIS</text><text x="590.8" y="360.0" transform="rotate(-39.6 590.8 360.0)" textLength="88" lengthAdjust="spacingAndGlyphs">RationalDMIS</text><text x="628.1" y="360.0" transform="rotate(-39.6 628.1 360.0)" textLength="88" lengthAdjust="spacingAndGlyphs">RationalDMIS</text><text x="665.4" y="360.0" transform="rotate(-39.6 665.4 360.0)" textLength="88" lengthAdjust="spacingAndGlyphs">RationalDMIS</text><text x="702.7" y="360.0" transform="rotate(-39.6 702.7 360.0)" textLength="88" lengthAdjust="spacingAndGlyphs">RationalDMIS</text><text x="740.0" y="360.0" transform="rotate(-39.6 740.0 360.0)" textLength="88" lengthAdjust="spacingAndGlyphs">RationalDMIS</text><text x="777.3" y="360.0" transform="rotate(-39.6 777.3 360.0)" textLength="88" lengthAdjust="spacingAndGlyphs">RationalDMIS</text><text x="814.6" y="360.0" transform="rotate(-39.6 814.6 360.0)" textLength="88" lengthAdjust="spacingAndGlyphs">RationalDMIS</text><text x="851.9" y="360.0" transform="rotate(-39.6 851.9 360.0)" textLength="88" lengthAdjust="spacingAndGlyphs">RationalDMIS</text><text x="889.2" y="360.0" transform="rotate(-39.6 889.2 360.0)" textLength="88" lengthAdjust="spacingAndGlyphs">RationalDMIS</text><text x="926.5" y="360.0" transform="rotate(-39.6 926.5 360.0)" textLength="88" lengthAdjust="spacingAndGlyphs">RationalDMIS</text><text x="963.8" y="360.0" transform="rotate(-39.6 963.8 360.0)" textLength="88" lengthAdjust="spacingAndGlyphs">RationalDMIS</text><text x="1001.1" y="360.0" transform="rotate(-39.6 1001.1 360.0)" textLength="88" lengthAdjust="spacingAndGlyphs">RationalDMIS</text><text x="1038.4" y="360.0" transform="rotate(-39.6 1038.4 360.0)" textLength="88" lengthAdjust="spacingAndGlyphs">RationalDMIS</text><text x="516.2" y="424.0" transform="rotate(-39.6 516.2 424.0)" textLength="88" lengthAdjust="spacingAndGlyphs">RationalDMIS</text><text x="553.5" y="424.0" transform="rotate(-39.6 553.5 424.0)" textLength="88" lengthAdjust="spacingAndGlyphs">RationalDMIS</text><text x="590.8" y="424.0" transform="rotate(-39.6 590.8 424.0)" textLength="88" lengthAdjust="spacingAndGlyphs">RationalDMIS</text><text x="628.1" y="424.0" transform="rotate(-39.6 628.1 424.0)" textLength="88" lengthAdjust="spacingAndGlyphs">RationalDMIS</text><text x="665.4" y="424.0" transform="rotate(-39.6 665.4 424.0)" textLength="88" lengthAdjust="spacingAndGlyphs">RationalDMIS</text><text x="702.7" y="424.0" transform="rotate(-39.6 702.7 424.0)" textLength="88" lengthAdjust="spacingAndGlyphs">RationalDMIS</text><text x="740.0" y="424.0" transform="rotate(-39.6 740.0 424.0)" textLength="88" lengthAdjust="spacingAndGlyphs">RationalDMIS</text><text x="777.3" y="424.0" transform="rotate(-39.6 777.3 424.0)" textLength="88" lengthAdjust="spacingAndGlyphs">RationalDMIS</text><text x="814.6" y="424.0" transform="rotate(-39.6 814.6 424.0)" textLength="88" lengthAdjust="spacingAndGlyphs">RationalDMIS</text><text x="851.9" y="424.0" transform="rotate(-39.6 851.9 424.0)" textLength="88" lengthAdjust="spacingAndGlyphs">RationalDMIS</text><text x="889.2" y="424.0" transform="rotate(-39.6 889.2 424.0)" textLength="88" lengthAdjust="spacingAndGlyphs">RationalDMIS</text><text x="926.5" y="424.0" transform="rotate(-39.6 926.5 424.0)" textLength="88" lengthAdjust="spacingAndGlyphs">RationalDMIS</text><text x="963.8" y="424.0" transform="rotate(-39.6 963.8 424.0)" textLength="88" lengthAdjust="spacingAndGlyphs">RationalDMIS</text><text x="1001.1" y="424.0" transform="rotate(-39.6 1001.1 424.0)" textLength="88" lengthAdjust="spacingAndGlyphs">RationalDMIS</text><text x="1038.4" y="424.0" transform="rotate(-39.6 1038.4 424.0)" textLength="88" lengthAdjust="spacingAndGlyphs">RationalDMIS</text><text x="516.2" y="488.0" transform="rotate(-39.6 516.2 488.0)" textLength="88" lengthAdjust="spacingAndGlyphs">RationalDMIS</text><text x="553.5" y="488.0" transform="rotate(-39.6 553.5 488.0)" textLength="88" lengthAdjust="spacingAndGlyphs">RationalDMIS</text><text x="590.8" y="488.0" transform="rotate(-39.6 590.8 488.0)" textLength="88" lengthAdjust="spacingAndGlyphs">RationalDMIS</text><text x="628.1" y="488.0" transform="rotate(-39.6 628.1 488.0)" textLength="88" lengthAdjust="spacingAndGlyphs">RationalDMIS</text><text x="665.4" y="488.0" transform="rotate(-39.6 665.4 488.0)" textLength="88" lengthAdjust="spacingAndGlyphs">RationalDMIS</text><text x="702.7" y="488.0" transform="rotate(-39.6 702.7 488.0)" textLength="88" lengthAdjust="spacingAndGlyphs">RationalDMIS</text><text x="740.0" y="488.0" transform="rotate(-39.6 740.0 488.0)" textLength="88" lengthAdjust="spacingAndGlyphs">RationalDMIS</text><text x="777.3" y="488.0" transform="rotate(-39.6 777.3 488.0)" textLength="88" lengthAdjust="spacingAndGlyphs">RationalDMIS</text><text x="814.6" y="488.0" transform="rotate(-39.6 814.6 488.0)" textLength="88" lengthAdjust="spacingAndGlyphs">RationalDMIS</text><text x="851.9" y="488.0" transform="rotate(-39.6 851.9 488.0)" textLength="88" lengthAdjust="spacingAndGlyphs">RationalDMIS</text><text x="889.2" y="488.0" transform="rotate(-39.6 889.2 488.0)" textLength="88" lengthAdjust="spacingAndGlyphs">RationalDMIS</text><text x="926.5" y="488.0" transform="rotate(-39.6 926.5 488.0)" textLength="88" lengthAdjust="spacingAndGlyphs">RationalDMIS</text><text x="963.8" y="488.0" transform="rotate(-39.6 963.8 488.0)" textLength="88" lengthAdjust="spacingAndGlyphs">RationalDMIS</text><text x="1001.1" y="488.0" transform="rotate(-39.6 1001.1 488.0)" textLength="88" lengthAdjust="spacingAndGlyphs">RationalDMIS</text><text x="1038.4" y="488.0" transform="rotate(-39.6 1038.4 488.0)" textLength="88" lengthAdjust="spacingAndGlyphs">RationalDMIS</text><text x="516.2" y="552.0" transform="rotate(-39.6 516.2 552.0)" textLength="88" lengthAdjust="spacingAndGlyphs">RationalDMIS</text><text x="553.5" y="552.0" transform="rotate(-39.6 553.5 552.0)" textLength="88" lengthAdjust="spacingAndGlyphs">RationalDMIS</text><text x="590.8" y="552.0" transform="rotate(-39.6 590.8 552.0)" textLength="88" lengthAdjust="spacingAndGlyphs">RationalDMIS</text><text x="628.1" y="552.0" transform="rotate(-39.6 628.1 552.0)" textLength="88" lengthAdjust="spacingAndGlyphs">RationalDMIS</text><text x="665.4" y="552.0" transform="rotate(-39.6 665.4 552.0)" textLength="88" lengthAdjust="spacingAndGlyphs">RationalDMIS</text><text x="702.7" y="552.0" transform="rotate(-39.6 702.7 552.0)" textLength="88" lengthAdjust="spacingAndGlyphs">RationalDMIS</text><text x="740.0" y="552.0" transform="rotate(-39.6 740.0 552.0)" textLength="88" lengthAdjust="spacingAndGlyphs">RationalDMIS</text><text x="777.3" y="552.0" transform="rotate(-39.6 777.3 552.0)" textLength="88" lengthAdjust="spacingAndGlyphs">RationalDMIS</text><text x="814.6" y="552.0" transform="rotate(-39.6 814.6 552.0)" textLength="88" lengthAdjust="spacingAndGlyphs">RationalDMIS</text><text x="851.9" y="552.0" transform="rotate(-39.6 851.9 552.0)" textLength="88" lengthAdjust="spacingAndGlyphs">RationalDMIS</text><text x="889.2" y="552.0" transform="rotate(-39.6 889.2 552.0)" textLength="88" lengthAdjust="spacingAndGlyphs">RationalDMIS</text><text x="926.5" y="552.0" transform="rotate(-39.6 926.5 552.0)" textLength="88" lengthAdjust="spacingAndGlyphs">RationalDMIS</text><text x="963.8" y="552.0" transform="rotate(-39.6 963.8 552.0)" textLength="88" lengthAdjust="spacingAndGlyphs">RationalDMIS</text><text x="1001.1" y="552.0" transform="rotate(-39.6 1001.1 552.0)" textLength="88" lengthAdjust="spacingAndGlyphs">RationalDMIS</text><text x="1038.4" y="552.0" transform="rotate(-39.6 1038.4 552.0)" textLength="88" lengthAdjust="spacingAndGlyphs">RationalDMIS</text><text x="516.2" y="616.0" transform="rotate(-39.6 516.2 616.0)" textLength="88" lengthAdjust="spacingAndGlyphs">RationalDMIS</text><text x="553.5" y="616.0" transform="rotate(-39.6 553.5 616.0)" textLength="88" lengthAdjust="spacingAndGlyphs">RationalDMIS</text><text x="590.8" y="616.0" transform="rotate(-39.6 590.8 616.0)" textLength="88" lengthAdjust="spacingAndGlyphs">RationalDMIS</text><text x="628.1" y="616.0" transform="rotate(-39.6 628.1 616.0)" textLength="88" lengthAdjust="spacingAndGlyphs">RationalDMIS</text><text x="665.4" y="616.0" transform="rotate(-39.6 665.4 616.0)" textLength="88" lengthAdjust="spacingAndGlyphs">RationalDMIS</text><text x="702.7" y="616.0" transform="rotate(-39.6 702.7 616.0)" textLength="88" lengthAdjust="spacingAndGlyphs">RationalDMIS</text><text x="740.0" y="616.0" transform="rotate(-39.6 740.0 616.0)" textLength="88" lengthAdjust="spacingAndGlyphs">RationalDMIS</text><text x="777.3" y="616.0" transform="rotate(-39.6 777.3 616.0)" textLength="88" lengthAdjust="spacingAndGlyphs">RationalDMIS</text><text x="814.6" y="616.0" transform="rotate(-39.6 814.6 616.0)" textLength="88" lengthAdjust="spacingAndGlyphs">RationalDMIS</text><text x="851.9" y="616.0" transform="rotate(-39.6 851.9 616.0)" textLength="88" lengthAdjust="spacingAndGlyphs">RationalDMIS</text><text x="889.2" y="616.0" transform="rotate(-39.6 889.2 616.0)" textLength="88" lengthAdjust="spacingAndGlyphs">RationalDMIS</text><text x="926.5" y="616.0" transform="rotate(-39.6 926.5 616.0)" textLength="88" lengthAdjust="spacingAndGlyphs">RationalDMIS</text><text x="963.8" y="616.0" transform="rotate(-39.6 963.8 616.0)" textLength="88" lengthAdjust="spacingAndGlyphs">RationalDMIS</text><text x="1001.1" y="616.0" transform="rotate(-39.6 1001.1 616.0)" textLength="88" lengthAdjust="spacingAndGlyphs">RationalDMIS</text><text x="1038.4" y="616.0" transform="rotate(-39.6 1038.4 616.0)" textLength="88" lengthAdjust="spacingAndGlyphs">RationalDMIS</text><text x="516.2" y="680.0" transform="rotate(-39.6 516.2 680.0)" textLength="88" lengthAdjust="spacingAndGlyphs">RationalDMIS</text><text x="553.5" y="680.0" transform="rotate(-39.6 553.5 680.0)" textLength="88" lengthAdjust="spacingAndGlyphs">RationalDMIS</text><text x="590.8" y="680.0" transform="rotate(-39.6 590.8 680.0)" textLength="88" lengthAdjust="spacingAndGlyphs">RationalDMIS</text><text x="628.1" y="680.0" transform="rotate(-39.6 628.1 680.0)" textLength="88" lengthAdjust="spacingAndGlyphs">RationalDMIS</text><text x="665.4" y="680.0" transform="rotate(-39.6 665.4 680.0)" textLength="88" lengthAdjust="spacingAndGlyphs">RationalDMIS</text><text x="702.7" y="680.0" transform="rotate(-39.6 702.7 680.0)" textLength="88" lengthAdjust="spacingAndGlyphs">RationalDMIS</text><text x="740.0" y="680.0" transform="rotate(-39.6 740.0 680.0)" textLength="88" lengthAdjust="spacingAndGlyphs">RationalDMIS</text><text x="777.3" y="680.0" transform="rotate(-39.6 777.3 680.0)" textLength="88" lengthAdjust="spacingAndGlyphs">RationalDMIS</text><text x="814.6" y="680.0" transform="rotate(-39.6 814.6 680.0)" textLength="88" lengthAdjust="spacingAndGlyphs">RationalDMIS</text><text x="851.9" y="680.0" transform="rotate(-39.6 851.9 680.0)" textLength="88" lengthAdjust="spacingAndGlyphs">RationalDMIS</text><text x="889.2" y="680.0" transform="rotate(-39.6 889.2 680.0)" textLength="88" lengthAdjust="spacingAndGlyphs">RationalDMIS</text><text x="926.5" y="680.0" transform="rotate(-39.6 926.5 680.0)" textLength="88" lengthAdjust="spacingAndGlyphs">RationalDMIS</text><text x="963.8" y="680.0" transform="rotate(-39.6 963.8 680.0)" textLength="88" lengthAdjust="spacingAndGlyphs">RationalDMIS</text><text x="1001.1" y="680.0" transform="rotate(-39.6 1001.1 680.0)" textLength="88" lengthAdjust="spacingAndGlyphs">RationalDMIS</text><text x="1038.4" y="680.0" transform="rotate(-39.6 1038.4 680.0)" textLength="88" lengthAdjust="spacingAndGlyphs">RationalDMIS</text><text x="516.2" y="744.0" transform="rotate(-39.6 516.2 744.0)" textLength="88" lengthAdjust="spacingAndGlyphs">RationalDMIS</text><text x="553.5" y="744.0" transform="rotate(-39.6 553.5 744.0)" textLength="88" lengthAdjust="spacingAndGlyphs">RationalDMIS</text><text x="590.8" y="744.0" transform="rotate(-39.6 590.8 744.0)" textLength="88" lengthAdjust="spacingAndGlyphs">RationalDMIS</text><text x="628.1" y="744.0" transform="rotate(-39.6 628.1 744.0)" textLength="88" lengthAdjust="spacingAndGlyphs">RationalDMIS</text><text x="665.4" y="744.0" transform="rotate(-39.6 665.4 744.0)" textLength="88" lengthAdjust="spacingAndGlyphs">RationalDMIS</text><text x="702.7" y="744.0" transform="rotate(-39.6 702.7 744.0)" textLength="88" lengthAdjust="spacingAndGlyphs">RationalDMIS</text><text x="740.0" y="744.0" transform="rotate(-39.6 740.0 744.0)" textLength="88" lengthAdjust="spacingAndGlyphs">RationalDMIS</text><text x="777.3" y="744.0" transform="rotate(-39.6 777.3 744.0)" textLength="88" lengthAdjust="spacingAndGlyphs">RationalDMIS</text><text x="814.6" y="744.0" transform="rotate(-39.6 814.6 744.0)" textLength="88" lengthAdjust="spacingAndGlyphs">RationalDMIS</text><text x="851.9" y="744.0" transform="rotate(-39.6 851.9 744.0)" textLength="88" lengthAdjust="spacingAndGlyphs">RationalDMIS</text><text x="889.2" y="744.0" transform="rotate(-39.6 889.2 744.0)" textLength="88" lengthAdjust="spacingAndGlyphs">RationalDMIS</text><text x="926.5" y="744.0" transform="rotate(-39.6 926.5 744.0)" textLength="88" lengthAdjust="spacingAndGlyphs">RationalDMIS</text><text x="963.8" y="744.0" transform="rotate(-39.6 963.8 744.0)" textLength="88" lengthAdjust="spacingAndGlyphs">RationalDMIS</text><text x="1001.1" y="744.0" transform="rotate(-39.6 1001.1 744.0)" textLength="88" lengthAdjust="spacingAndGlyphs">RationalDMIS</text><text x="1038.4" y="744.0" transform="rotate(-39.6 1038.4 744.0)" textLength="88" lengthAdjust="spacingAndGlyphs">RationalDMIS</text></g></svg>
<div class="a" style="left:735px;top:269.2px;width:211px;height:11.2px;background:#fddc92"></div>
<div class="a" style="left:740px;top:62px;width:1px;height:268px;background:#c4c4c4"></div>
<div class="a" style="left:741px;top:62.1px;width:5px;height:1px;background:#c4c4c4"></div>
<div class="t" style="left:758.0px;top:58.8px;font-size:8px;color:#000;text-shadow:0 0 0.2px #000">点</div>
<div class="a" style="left:741px;top:73.35px;width:5px;height:1px;background:#c4c4c4"></div>
<div class="t" style="left:758.0px;top:70.1px;font-size:8px;color:#000;text-shadow:0 0 0.2px #000">边界点</div>
<div class="a" style="left:741px;top:84.6px;width:5px;height:1px;background:#c4c4c4"></div>
<div class="t" style="left:758.0px;top:81.3px;font-size:8px;color:#000;text-shadow:0 0 0.2px #000">直线</div>
<div class="a" style="left:741px;top:95.85px;width:5px;height:1px;background:#c4c4c4"></div>
<div class="t" style="left:758.0px;top:92.6px;font-size:8px;color:#000;text-shadow:0 0 0.2px #000">面</div>
<div class="a" style="left:741px;top:107.1px;width:5px;height:1px;background:#c4c4c4"></div>
<div class="t" style="left:758.0px;top:103.8px;font-size:8px;color:#000;text-shadow:0 0 0.2px #000">圆</div>
<div class="a" style="left:741px;top:118.35px;width:5px;height:1px;background:#c4c4c4"></div>
<div class="t" style="left:758.0px;top:115.1px;font-size:8px;color:#000;text-shadow:0 0 0.2px #000">圆弧</div>
<div class="a" style="left:741px;top:129.6px;width:5px;height:1px;background:#c4c4c4"></div>
<div class="t" style="left:758.0px;top:126.3px;font-size:8px;color:#000;text-shadow:0 0 0.2px #000">球</div>
<div class="a" style="left:741px;top:140.85px;width:5px;height:1px;background:#c4c4c4"></div>
<div class="t" style="left:758.0px;top:137.6px;font-size:8px;color:#000;text-shadow:0 0 0.2px #000">圆柱</div>
<div class="a" style="left:741px;top:152.1px;width:5px;height:1px;background:#c4c4c4"></div>
<div class="t" style="left:758.0px;top:148.8px;font-size:8px;color:#000;text-shadow:0 0 0.2px #000">圆锥</div>
<div class="a" style="left:741px;top:163.35px;width:5px;height:1px;background:#c4c4c4"></div>
<div class="t" style="left:758.0px;top:160.1px;font-size:8px;color:#000;text-shadow:0 0 0.2px #000">椭圆</div>
<div class="a" style="left:741px;top:174.6px;width:5px;height:1px;background:#c4c4c4"></div>
<div class="t" style="left:758.0px;top:171.3px;font-size:8px;color:#000;text-shadow:0 0 0.2px #000">键槽</div>
<div class="a" style="left:741px;top:185.85px;width:5px;height:1px;background:#c4c4c4"></div>
<div class="t" style="left:758.0px;top:182.6px;font-size:8px;color:#000;text-shadow:0 0 0.2px #000">平行平面</div>
<div class="a" style="left:741px;top:197.1px;width:5px;height:1px;background:#c4c4c4"></div>
<div class="t" style="left:758.0px;top:193.8px;font-size:8px;color:#000;text-shadow:0 0 0.2px #000">圆环</div>
<div class="a" style="left:741px;top:208.35px;width:5px;height:1px;background:#c4c4c4"></div>
<div class="t" style="left:758.0px;top:205.1px;font-size:8px;color:#000;text-shadow:0 0 0.2px #000">曲线</div>
<div class="a" style="left:741px;top:219.6px;width:5px;height:1px;background:#c4c4c4"></div>
<div class="t" style="left:758.0px;top:216.3px;font-size:8px;color:#000;text-shadow:0 0 0.2px #000">曲面</div>
<div class="a" style="left:741px;top:230.85px;width:5px;height:1px;background:#c4c4c4"></div>
<div class="t" style="left:758.0px;top:227.6px;font-size:8px;color:#000;text-shadow:0 0 0.2px #000">正多边形</div>
<div class="a" style="left:741px;top:242.1px;width:5px;height:1px;background:#c4c4c4"></div>
<div class="t" style="left:758.0px;top:238.8px;font-size:8px;color:#000;text-shadow:0 0 0.2px #000">组合</div>
<div class="a" style="left:741px;top:253.35px;width:5px;height:1px;background:#c4c4c4"></div>
<div class="t" style="left:758.0px;top:250.1px;font-size:8px;color:#000;text-shadow:0 0 0.2px #000">凸轮轴</div>
<div class="a" style="left:741px;top:264.6px;width:5px;height:1px;background:#c4c4c4"></div>
<div class="t" style="left:758.0px;top:261.3px;font-size:8px;color:#000;text-shadow:0 0 0.2px #000">齿轮</div>
<div class="a" style="left:746px;top:270.85px;width:1px;height:5px;background:#c4c4c4"></div>
<div class="a" style="left:746px;top:275.85px;width:7px;height:1px;background:#c4c4c4"></div>
<div class="t" style="left:758.7px;top:272.1px;font-size:7.7px;color:#a09070;letter-spacing:-0.5px">GEAR1</div>
<div class="t" style="left:840.5px;top:272.6px;font-size:8px;color:#807058">有坐标系</div>
<div class="a" style="left:741px;top:287.1px;width:5px;height:1px;background:#c4c4c4"></div>
<div class="t" style="left:758.0px;top:283.8px;font-size:8px;color:#000;text-shadow:0 0 0.2px #000">管道</div>
<div class="a" style="left:741px;top:298.35px;width:5px;height:1px;background:#c4c4c4"></div>
<div class="t" style="left:758.0px;top:295.1px;font-size:8px;color:#000;text-shadow:0 0 0.2px #000">CAD模型</div>
<div class="a" style="left:741px;top:309.6px;width:5px;height:1px;background:#c4c4c4"></div>
<div class="t" style="left:758.0px;top:306.3px;font-size:8px;color:#000;text-shadow:0 0 0.2px #000">点云</div>
<div class="a" style="left:741px;top:320.85px;width:5px;height:1px;background:#c4c4c4"></div>
<div class="t" style="left:758.0px;top:317.6px;font-size:8px;color:#000;text-shadow:0 0 0.2px #000">选中的点云</div>
<div class="a" style="left:737.5px;top:260.3px;width:7px;height:7px;background:#fff;border:1px solid #888"></div>
<div class="a" style="left:739px;top:263.3px;width:4px;height:1px;background:#333"></div>
<svg class="a" style="left:745px;top:56.6px" width="11" height="11" viewBox="0 0 16 16"><circle cx="8" cy="8" r="2.2" fill="#c8d8f8" stroke="#3a5aa8" stroke-width="1.3"/></svg>
<svg class="a" style="left:745px;top:67.85px" width="11" height="11" viewBox="0 0 16 16"><rect x="3" y="7" width="8" height="6" fill="#1a4aa0"/><rect x="3" y="7" width="8" height="2.5" fill="#80b0f0"/><circle cx="4" cy="3" r="1.6" fill="#20a020"/><path d="M10,8 L15,8" stroke="#20a020" stroke-width="1.5"/><circle cx="9" cy="10" r="1.3" fill="#e02020"/></svg>
<svg class="a" style="left:745px;top:79.1px" width="11" height="11" viewBox="0 0 16 16"><path d="M2.5,14 L13.5,2" stroke="#4a6ac0" stroke-width="2.8" stroke-linecap="round"/><path d="M2.5,14 L13.5,2" stroke="#a8c0f0" stroke-width="1"/></svg>
<svg class="a" style="left:745px;top:90.35px" width="11" height="11" viewBox="0 0 16 16"><path d="M4,3 L14,3 L12,13 L2,13Z" fill="#e0e8f8" stroke="#3a5aa8" stroke-width="1.5" stroke-linejoin="round"/></svg>
<svg class="a" style="left:745px;top:101.6px" width="11" height="11" viewBox="0 0 16 16"><circle cx="8" cy="8" r="5.5" fill="#d8e4f8" stroke="#3a5aa8" stroke-width="2"/><circle cx="8" cy="8" r="2.5" fill="#fff"/></svg>
<svg class="a" style="left:745px;top:112.85px" width="11" height="11" viewBox="0 0 16 16"><path d="M1.5,7 Q8,1 14.5,7" fill="none" stroke="#3a5aa8" stroke-width="1.6"/><path d="M4,9.5 Q8,6 12,9.5" fill="none" stroke="#3a5aa8" stroke-width="1.4"/><circle cx="8" cy="12.5" r="1.4" fill="#3a5aa8"/></svg>
<svg class="a" style="left:745px;top:124.1px" width="11" height="11" viewBox="0 0 16 16"><circle cx="8" cy="8" r="6" fill="#3a5aa8"/><circle cx="6" cy="6" r="3.5" fill="#d8e8fc"/></svg>
<svg class="a" style="left:745px;top:135.35px" width="11" height="11" viewBox="0 0 16 16"><path d="M3,3 Q8,0 13,3 L13,13 Q8,16 3,13Z" fill="#c0d4f0" stroke="#3a5aa8" stroke-width="1.3"/><path d="M9,3 L9,14" stroke="#3a5aa8" stroke-width="1"/></svg>
<svg class="a" style="left:745px;top:146.6px" width="11" height="11" viewBox="0 0 16 16"><path d="M8,1 L14,13 Q8,16 2,13Z" fill="#a8c4f0" stroke="#3a5aa8" stroke-width="1.2"/></svg>
<svg class="a" style="left:745px;top:157.85px" width="11" height="11" viewBox="0 0 16 16"><ellipse cx="8" cy="8" rx="6.5" ry="5" fill="#d8e4f8" stroke="#3a5aa8" stroke-width="2"/><ellipse cx="8" cy="8" rx="3" ry="2" fill="#fff"/></svg>
<svg class="a" style="left:745px;top:169.1px" width="11" height="11" viewBox="0 0 16 16"><ellipse cx="8" cy="8" rx="7" ry="5" fill="#5a7ac0"/><ellipse cx="8" cy="8" rx="4.5" ry="2.5" fill="#e8f0fc" stroke="#3a5aa8" stroke-width="0.8"/></svg>
<svg class="a" style="left:745px;top:180.35px" width="11" height="11" viewBox="0 0 16 16"><rect x="1" y="5" width="10" height="8" fill="#b8d0f0" stroke="#3a5aa8" stroke-width="1"/><rect x="5" y="2" width="10" height="8" fill="#d8e8fa" stroke="#3a5aa8" stroke-width="1"/></svg>
<svg class="a" style="left:745px;top:191.6px" width="11" height="11" viewBox="0 0 16 16"><circle cx="8" cy="8" r="6" fill="#e8f0fc" stroke="#3a5aa8" stroke-width="1.5"/><circle cx="8" cy="8" r="2.8" fill="none" stroke="#3a5aa8" stroke-width="1.5"/></svg>
<svg class="a" style="left:745px;top:202.85px" width="11" height="11" viewBox="0 0 16 16"><path d="M3,14 Q1,8 7,8 Q13,8 11,2" fill="none" stroke="#3a5aa8" stroke-width="2.4"/></svg>
<svg class="a" style="left:745px;top:214.1px" width="11" height="11" viewBox="0 0 16 16"><path d="M1,8 L8,2 L15,6 L8,14Z" fill="#c8dcf4" stroke="#3a5aa8" stroke-width="1.5"/><path d="M5,8 Q8,5 11,8" fill="none" stroke="#3a5aa8" stroke-width="1"/></svg>
<svg class="a" style="left:745px;top:225.35px" width="11" height="11" viewBox="0 0 16 16"><path d="M8,1 L14,4.5 L14,11.5 L8,15 L2,11.5 L2,4.5Z" fill="#e0e8f8" stroke="#3a5aa8" stroke-width="1.5"/><circle cx="8" cy="8" r="3" fill="none" stroke="#3a5aa8" stroke-width="1.2"/></svg>
<svg class="a" style="left:745px;top:236.6px" width="11" height="11" viewBox="0 0 16 16"><path d="M3,3 Q8,0 12,4 L13,12 Q8,15 3,12Z" fill="#d8e4f8" stroke="#3a5aa8" stroke-width="1.4"/><path d="M5,5 L10,11" stroke="#3a5aa8" stroke-width="1"/></svg>
<svg class="a" style="left:745px;top:247.85px" width="11" height="11" viewBox="0 0 16 16"><ellipse cx="8" cy="9" rx="7" ry="4.5" fill="#c8dcf4" stroke="#3a5aa8" stroke-width="1.4"/><circle cx="6" cy="9" r="1.8" fill="#3a5aa8"/></svg>
<svg class="a" style="left:745px;top:259.1px" width="11" height="11" viewBox="0 0 16 16"><circle cx="8" cy="8" r="7" fill="#3a5aa8"/><circle cx="8" cy="8" r="5" fill="#c8dcf4"/><circle cx="8" cy="8" r="2" fill="#3a5aa8"/></svg>
<svg class="a" style="left:745px;top:281.6px" width="11" height="11" viewBox="0 0 16 16"><path d="M2,5 Q4,2 8,6 L13,10 Q14,13 11,13 L6,9 Q3,8 2,5Z" fill="#3a5aa8"/></svg>
<svg class="a" style="left:745px;top:291.8px" width="12" height="9" viewBox="0 0 12 9"><text x="0" y="7.5" font-family="Liberation Sans" font-weight="bold" font-size="8" fill="#1a3a90" textLength="12" lengthAdjust="spacingAndGlyphs">CAD</text></svg>
<svg class="a" style="left:745px;top:304.1px" width="11" height="11" viewBox="0 0 16 16"><g fill="#3a5aa8"><circle cx="4" cy="4" r="1.3"/><circle cx="9" cy="3" r="1.3"/><circle cx="13" cy="7" r="1.3"/><circle cx="3" cy="10" r="1.3"/><circle cx="8" cy="9" r="1.3"/><circle cx="11" cy="13" r="1.3"/><circle cx="5" cy="14" r="1.3"/></g></svg>
<svg class="a" style="left:745px;top:315.35px" width="11" height="11" viewBox="0 0 16 16"><g fill="#3a5aa8"><circle cx="4" cy="4" r="1.3"/><circle cx="9" cy="3" r="1.3"/><circle cx="13" cy="7" r="1.3"/><circle cx="3" cy="10" r="1.3"/><circle cx="8" cy="9" r="1.3"/><circle cx="11" cy="13" r="1.3"/><circle cx="5" cy="14" r="1.3"/></g></svg>
<div class="a" style="left:962px;top:42.5px;width:226.5px;height:475px;background:#fff;border:1px solid #bcbcbc;border-radius:4px 4px 3px 3px"></div>
<div class="a" style="left:963px;top:43.5px;width:224.5px;height:12px;background:linear-gradient(#f2f2f2,#e8e8e8);border-radius:3px 3px 0 0"></div>
<div class="a" style="left:963px;top:55px;width:224.5px;height:1.2px;background:#e6c880"></div>
<div class="a" style="left:992.5px;top:44px;width:1px;height:11px;background:#d4d4d4"></div>
<div class="a" style="left:1053.5px;top:44px;width:1px;height:11px;background:#d4d4d4"></div>
<div class="a" style="left:1113.3px;top:44px;width:1px;height:11px;background:#d4d4d4"></div>
<div class="a" style="left:1174.4px;top:44px;width:1px;height:11px;background:#d4d4d4"></div>
<div class="t" style="left:877.5px;width:200px;text-align:center;top:45.4px;font-size:8px;color:#111;text-shadow:0 0 0.35px #111">参数</div>
<div class="t" style="left:922.5px;width:200px;text-align:center;top:45.4px;font-size:8px;color:#111;text-shadow:0 0 0.35px #111">值</div>
<div class="t" style="left:1043.0px;width:200px;text-align:center;top:45.4px;font-size:8px;color:#111;text-shadow:0 0 0.35px #111">误差</div>
<div class="a" style="left:963px;top:65.75999999999999px;width:224.5px;height:9.96px;background:#f4f4f4"></div>
<div class="a" style="left:963px;top:85.68px;width:224.5px;height:9.96px;background:#f4f4f4"></div>
<div class="a" style="left:963px;top:105.6px;width:224.5px;height:9.96px;background:#f4f4f4"></div>
<div class="a" style="left:963px;top:125.52px;width:224.5px;height:9.96px;background:#f4f4f4"></div>
<div class="a" style="left:963px;top:145.44px;width:224.5px;height:9.96px;background:#f4f4f4"></div>
<div class="a" style="left:963px;top:165.36px;width:224.5px;height:9.96px;background:#f4f4f4"></div>
<div class="a" style="left:963px;top:185.28000000000003px;width:224.5px;height:9.96px;background:#f4f4f4"></div>
<div class="a" style="left:963px;top:205.2px;width:224.5px;height:9.96px;background:#f4f4f4"></div>
<div class="a" style="left:963px;top:225.12px;width:224.5px;height:9.96px;background:#f4f4f4"></div>
<div class="a" style="left:963px;top:245.04000000000002px;width:224.5px;height:9.96px;background:#f4f4f4"></div>
<div class="a" style="left:963px;top:264.96000000000004px;width:224.5px;height:9.96px;background:#f4f4f4"></div>
<div class="a" style="left:963px;top:284.88px;width:224.5px;height:9.96px;background:#f4f4f4"></div>
<div class="a" style="left:963px;top:304.8px;width:224.5px;height:9.96px;background:#f4f4f4"></div>
<div class="a" style="left:963px;top:324.72px;width:224.5px;height:9.96px;background:#f4f4f4"></div>
<div class="a" style="left:963px;top:344.64000000000004px;width:224.5px;height:9.96px;background:#f4f4f4"></div>
<div class="a" style="left:963px;top:364.56000000000006px;width:224.5px;height:9.96px;background:#f4f4f4"></div>
<div class="a" style="left:963px;top:384.48px;width:224.5px;height:9.96px;background:#f4f4f4"></div>
<div class="a" style="left:963px;top:404.40000000000003px;width:224.5px;height:9.96px;background:#f4f4f4"></div>
<div class="a" style="left:963px;top:424.32000000000005px;width:224.5px;height:9.96px;background:#f4f4f4"></div>
<div class="a" style="left:963px;top:444.24000000000007px;width:224.5px;height:9.96px;background:#f4f4f4"></div>
<div class="a" style="left:963px;top:464.16px;width:224.5px;height:9.96px;background:#f4f4f4"></div>
<div class="a" style="left:963px;top:484.08000000000004px;width:224.5px;height:9.96px;background:#f4f4f4"></div>
<div class="a" style="left:963px;top:504.00000000000006px;width:224.5px;height:9.96px;background:#f4f4f4"></div>
<div class="a" style="left:992.5px;top:56px;width:1px;height:460px;background:#ececec"></div>
<div class="a" style="left:1053.5px;top:56px;width:1px;height:460px;background:#ececec"></div>
<div class="a" style="left:1113.3px;top:56px;width:1px;height:460px;background:#ececec"></div>
<div class="a" style="left:1174.4px;top:56px;width:1px;height:460px;background:#ececec"></div>
<div class="t" style="right:202.5px;top:57.3px;font-size:8px;color:#000;text-shadow:0 0 0.2px #000">名称</div>
<div class="t" style="right:141.5px;top:57.3px;font-size:7.2px;color:#000;text-shadow:0 0 0.25px #000;letter-spacing:-0.15px">GEAR1</div>
<div class="t" style="right:202.5px;top:67.3px;font-size:8px;color:#000;text-shadow:0 0 0.2px #000">齿…</div>
<div class="t" style="right:141.5px;top:67.3px;font-size:8px;color:#000;text-shadow:0 0 0.25px #000">外齿</div>
<div class="t" style="right:202.5px;top:77.2px;font-size:8px;color:#000;text-shadow:0 0 0.2px #000">螺…</div>
<div class="t" style="right:141.5px;top:77.2px;font-size:8px;color:#000;text-shadow:0 0 0.25px #000">直齿</div>
<div class="t" style="right:202.5px;top:87.2px;font-size:8px;color:#000;text-shadow:0 0 0.2px #000">齿数</div>
<div class="t" style="right:141.5px;top:87.2px;font-size:7.2px;color:#000;text-shadow:0 0 0.25px #000;letter-spacing:-0.15px">20</div>
<div class="t" style="right:202.5px;top:97.2px;font-size:8px;color:#000;text-shadow:0 0 0.2px #000">齿…</div>
<div class="t" style="right:141.5px;top:97.1px;font-size:7.2px;color:#000;text-shadow:0 0 0.25px #000;letter-spacing:-0.15px">99.000000</div>
<div class="t" style="right:202.5px;top:107.1px;font-size:8px;color:#000;text-shadow:0 0 0.2px #000">齿…</div>
<div class="t" style="right:141.5px;top:107.1px;font-size:7.2px;color:#000;text-shadow:0 0 0.25px #000;letter-spacing:-0.15px">78.750000</div>
<div class="t" style="right:202.5px;top:117.1px;font-size:8px;color:#000;text-shadow:0 0 0.2px #000">装…</div>
<div class="t" style="right:141.5px;top:117.1px;font-size:7.2px;color:#000;text-shadow:0 0 0.25px #000;letter-spacing:-0.15px">25.000000</div>
<div class="t" style="right:202.5px;top:127.0px;font-size:8px;color:#000;text-shadow:0 0 0.2px #000">齿宽</div>
<div class="t" style="right:141.5px;top:127.0px;font-size:7.2px;color:#000;text-shadow:0 0 0.25px #000;letter-spacing:-0.15px">20.000000</div>
<div class="t" style="right:202.5px;top:137.0px;font-size:8px;color:#000;text-shadow:0 0 0.2px #000">模数</div>
<div class="t" style="right:141.5px;top:137.0px;font-size:7.2px;color:#000;text-shadow:0 0 0.25px #000;letter-spacing:-0.15px">4.500000</div>
<div class="t" style="right:202.5px;top:147.0px;font-size:8px;color:#000;text-shadow:0 0 0.2px #000">压…</div>
<div class="t" style="right:141.5px;top:146.9px;font-size:7.2px;color:#000;text-shadow:0 0 0.25px #000;letter-spacing:-0.15px">20.000000</div>
<div class="t" style="right:202.5px;top:156.9px;font-size:8px;color:#000;text-shadow:0 0 0.2px #000">变…</div>
<div class="t" style="right:141.5px;top:156.9px;font-size:7.2px;color:#000;text-shadow:0 0 0.25px #000;letter-spacing:-0.15px">0.300000</div>
<div class="t" style="right:202.5px;top:166.9px;font-size:8px;color:#000;text-shadow:0 0 0.2px #000">螺…</div>
<div class="t" style="right:141.5px;top:166.9px;font-size:7.2px;color:#000;text-shadow:0 0 0.25px #000;letter-spacing:-0.15px">0.000000</div>
<div class="t" style="right:202.5px;top:176.8px;font-size:8px;color:#000;text-shadow:0 0 0.2px #000">标准</div>
<div class="t" style="right:141.5px;top:176.8px;font-size:7.2px;color:#000;text-shadow:0 0 0.25px #000;letter-spacing:-0.15px">DIN</div>
<div class="t" style="right:202.5px;top:186.8px;font-size:8px;color:#000;text-shadow:0 0 0.2px #000">等级</div>
<div class="t" style="right:141.5px;top:186.8px;font-size:7.2px;color:#000;text-shadow:0 0 0.25px #000;letter-spacing:-0.15px">8</div>
<div class="t" style="right:202.5px;top:196.8px;font-size:8px;color:#000;text-shadow:0 0 0.2px #000">齿…</div>
<div class="t" style="right:202.5px;top:206.7px;font-size:8px;color:#000;text-shadow:0 0 0.2px #000">齿…</div>
<div class="t" style="right:202.5px;top:216.7px;font-size:8px;color:#000;text-shadow:0 0 0.2px #000">齿…</div>
<div class="a" style="left:6.5px;top:520px;width:62.5px;height:102px;background:#fff;border:1px solid #c8d0d8;border-radius:3px"></div>
<div class="a" style="left:8px;top:521px;width:60px;height:8px;background:linear-gradient(#d4e6f8,#f4f8fc)"></div>
<div class="a" style="left:10.7px;top:530px;width:25px;height:24.5px;background:linear-gradient(#fff8d8,#ffe8a8);border:1px solid #f4b050;border-radius:3px"></div>
<div class="a" style="left:40px;top:530px;width:25px;height:24.5px;background:linear-gradient(#f4f4f4,#e6e6e6);border:1px solid #dadada;border-radius:3px"></div>
<div class="a" style="left:10.7px;top:558.5px;width:25px;height:24.5px;background:linear-gradient(#f4f4f4,#e6e6e6);border:1px solid #dadada;border-radius:3px"></div>
<div class="a" style="left:40px;top:558.5px;width:25px;height:24.5px;background:linear-gradient(#f4f4f4,#e6e6e6);border:1px solid #dadada;border-radius:3px"></div>
<div class="a" style="left:10.7px;top:587px;width:25px;height:24.5px;background:linear-gradient(#f4f4f4,#e6e6e6);border:1px solid #dadada;border-radius:3px"></div>
<div class="a" style="left:40px;top:587px;width:25px;height:24.5px;background:linear-gradient(#f4f4f4,#e6e6e6);border:1px solid #dadada;border-radius:3px"></div>
<svg class="a" style="left:14.2px;top:533.5px" width="18" height="18" viewBox="0 0 16 16"><path d="M1,1 H5 M3,1 V7" stroke="#444" stroke-width="1.3"/><circle cx="3" cy="8" r="1" fill="#e02020"/><path d="M4,7 L10,4 L15,6.5 L9,9.5Z" fill="#80c8f8"/><path d="M4,7 L9,9.5 L9,15 L4,12.5Z" fill="#2a78c8"/><path d="M9,9.5 L15,6.5 L15,12 L9,15Z" fill="#0e4a90"/></svg>
<svg class="a" style="left:43.5px;top:533.5px" width="18" height="18" viewBox="0 0 16 16"><path d="M5,1 L15,11 L5,11Z" fill="#8ab8f0" stroke="#3a6ac0" stroke-width="1"/><path d="M7,6 L11,10 L7,10Z" fill="#e8f0fc"/><rect x="1" y="10" width="15" height="3" fill="#5a90e0" stroke="#2a5ab0" stroke-width="0.6"/><rect x="1" y="8" width="3" height="7" rx="1" fill="#5a90e0"/></svg>
<svg class="a" style="left:14.2px;top:562.0px" width="18" height="18" viewBox="0 0 16 16"><rect x="5" y="1" width="7" height="8" rx="2" fill="#222"/><circle cx="9" cy="4" r="1.3" fill="#e03030"/><ellipse cx="8" cy="10" rx="3" ry="2" fill="#6a7aa0"/><path d="M7,11 L4,15" stroke="#e06060" stroke-width="1"/></svg>
<svg class="a" style="left:43.5px;top:562.0px" width="18" height="18" viewBox="0 0 16 16"><rect x="1" y="1" width="14" height="4" fill="#e8c050" stroke="#806020" stroke-width="0.6"/><path d="M2,6 L8,4 L14,6 L14,13 L8,15 L2,13Z" fill="#d8a070" stroke="#804020" stroke-width="0.7"/><path d="M8,7 L8,15 M2,6 L8,8 L14,6" stroke="#804020" stroke-width="0.6" fill="none"/></svg>
<svg class="a" style="left:14.2px;top:590.5px" width="18" height="18" viewBox="0 0 16 16"><path d="M6,11 L6,2" stroke="#1a3ae0" stroke-width="1.8"/><path d="M4,4 L6,0.5 L8,4Z" fill="#1a3ae0"/><path d="M6,11 L14,11" stroke="#e02020" stroke-width="1.8"/><path d="M12,9 L15.5,11 L12,13Z" fill="#e02020"/><path d="M6,11 L2,15" stroke="#20a040" stroke-width="2"/></svg>
<svg class="a" style="left:43.5px;top:590.5px" width="18" height="18" viewBox="0 0 16 16"><rect x="1" y="10" width="10" height="4" fill="#2a2a2a"/><rect x="3" y="6" width="7" height="5" fill="#333"/><rect x="5" y="1" width="3" height="5" fill="#d8d0a0" stroke="#555" stroke-width="0.5"/><path d="M12,2 L12,14 M14,2 L14,14" stroke="#e8e0c8" stroke-width="2.5"/><circle cx="13" cy="3" r="2" fill="none" stroke="#a09880" stroke-width="0.8"/><circle cx="13" cy="13" r="2" fill="none" stroke="#a09880" stroke-width="0.8"/></svg>
<div class="a" style="left:70px;top:520px;width:949.5px;height:102px;background:#fff;border:1px solid #c8d0d8;border-radius:3px"></div>
<div class="a" style="left:71px;top:521px;width:947.5px;height:17px;background:linear-gradient(#c4dcf8,#e8f2fc 70%,#f8fbff)"></div>
<div class="a" style="left:71px;top:538px;width:947.5px;height:1px;background:#e6e6e6"></div>
<div class="a" style="left:431.5px;top:522.6px;width:15.5px;height:14.5px;background:linear-gradient(#fff4d0,#ffe0a0);border:1px solid #f0a840;border-radius:2px"></div>
<svg class="a" style="left:74.5px;top:522.7px" width="13" height="13" viewBox="0 0 16 16"><rect x="2" y="2" width="6" height="7" rx="1.5" fill="#222"/><circle cx="5" cy="5" r="1" fill="#e03030"/><path d="M7,8 L12,15" stroke="#e0a030" stroke-width="3"/><path d="M8,10 L11,9" stroke="#806020" stroke-width="0.8"/></svg>
<svg class="a" style="left:94.3px;top:522.7px" width="13" height="13" viewBox="0 0 16 16"><circle cx="8" cy="8" r="2" fill="#e0e8f8" stroke="#3a5aa8" stroke-width="1.2"/></svg>
<svg class="a" style="left:114.1px;top:522.7px" width="13" height="13" viewBox="0 0 16 16"><rect x="2" y="8" width="9" height="6" fill="#80b0f0"/><rect x="2" y="11" width="9" height="3" fill="#1a4aa0"/><path d="M5,9 L5,2 M3,4 L5,1.5 L7,4" stroke="#20a020" stroke-width="1.5" fill="#20a020"/><path d="M9,10 L15,10" stroke="#20a020" stroke-width="1.5"/><circle cx="9" cy="9" r="1.5" fill="#e02020"/></svg>
<svg class="a" style="left:133.9px;top:522.7px" width="13" height="13" viewBox="0 0 16 16"><path d="M2.5,14 L13.5,2" stroke="#3a5aa8" stroke-width="2.8" stroke-linecap="round"/><path d="M2.5,14 L13.5,2" stroke="#b8ccf0" stroke-width="1"/></svg>
<svg class="a" style="left:153.7px;top:522.7px" width="13" height="13" viewBox="0 0 16 16"><path d="M4,3 L15,3 L12,13 L1,13Z" fill="#e0e8f8" stroke="#3a5aa8" stroke-width="1.4" stroke-linejoin="round"/></svg>
<svg class="a" style="left:173.5px;top:522.7px" width="13" height="13" viewBox="0 0 16 16"><circle cx="8" cy="8" r="6.3" fill="none" stroke="#3a5aa8" stroke-width="1.3"/><circle cx="8" cy="8" r="4" fill="none" stroke="#3a5aa8" stroke-width="1.3"/></svg>
<svg class="a" style="left:193.3px;top:522.7px" width="13" height="13" viewBox="0 0 16 16"><path d="M1,7 Q8,1 15,7" fill="none" stroke="#3a5aa8" stroke-width="1.5"/><path d="M4,10 Q8,6 12,10" fill="none" stroke="#3a5aa8" stroke-width="1.3"/><path d="M1,7 L8,13 L15,7" fill="none" stroke="#3a5aa8" stroke-width="1.2"/></svg>
<svg class="a" style="left:213.1px;top:522.7px" width="13" height="13" viewBox="0 0 16 16"><circle cx="8" cy="8" r="6.5" fill="#3a5aa8"/><circle cx="6.5" cy="6" r="4.5" fill="#c8dcf8"/><circle cx="5.5" cy="5" r="2" fill="#fff"/></svg>
<svg class="a" style="left:232.9px;top:522.7px" width="13" height="13" viewBox="0 0 16 16"><path d="M3,3 Q8,0 13,3 L13,13 Q8,16 3,13Z" fill="#d0e0f8" stroke="#3a5aa8" stroke-width="1.2"/><path d="M9,4 L9,14" stroke="#3a5aa8" stroke-width="1.8"/></svg>
<svg class="a" style="left:252.70000000000005px;top:522.7px" width="13" height="13" viewBox="0 0 16 16"><path d="M8,1 L14,13 Q8,16 2,13Z" fill="#b8d0f4" stroke="#3a5aa8" stroke-width="1.2"/><path d="M8,1 L9,14" stroke="#3a5aa8" stroke-width="0.8"/></svg>
<svg class="a" style="left:272.5px;top:522.7px" width="13" height="13" viewBox="0 0 16 16"><ellipse cx="8" cy="8" rx="7" ry="5" fill="none" stroke="#3a5aa8" stroke-width="1.3"/><ellipse cx="8" cy="8" rx="4.5" ry="2.8" fill="none" stroke="#3a5aa8" stroke-width="1.3"/></svg>
<svg class="a" style="left:292.3px;top:522.7px" width="13" height="13" viewBox="0 0 16 16"><rect x="1" y="3" width="14" height="10" rx="5" fill="none" stroke="#3a5aa8" stroke-width="1.4"/><rect x="4" y="6" width="8" height="4" rx="2" fill="none" stroke="#3a5aa8" stroke-width="1.2"/></svg>
<svg class="a" style="left:312.1px;top:522.7px" width="13" height="13" viewBox="0 0 16 16"><rect x="1" y="6" width="10" height="8" fill="#b8d0f0" stroke="#3a5aa8" stroke-width="1"/><rect x="5" y="2" width="10" height="8" fill="#d8e8fa" stroke="#3a5aa8" stroke-width="1"/></svg>
<svg class="a" style="left:331.90000000000003px;top:522.7px" width="13" height="13" viewBox="0 0 16 16"><circle cx="8" cy="8" r="6.5" fill="#e8f0fc" stroke="#3a5aa8" stroke-width="1.4"/><circle cx="8" cy="8" r="2.5" fill="none" stroke="#3a5aa8" stroke-width="1.4"/></svg>
<svg class="a" style="left:351.7px;top:522.7px" width="13" height="13" viewBox="0 0 16 16"><path d="M2,13 Q2,8 6,8 Q10,8 10,4 Q10,2 14,3" fill="none" stroke="#3a5aa8" stroke-width="2.6"/><path d="M2,13 Q2,8 6,8 Q10,8 10,4 Q10,2 14,3" fill="none" stroke="#c0d4f4" stroke-width="1"/></svg>
<svg class="a" style="left:371.5px;top:522.7px" width="13" height="13" viewBox="0 0 16 16"><path d="M1,9 L7,2 L15,7 L9,14Z" fill="#d8e4f8" stroke="#3a5aa8" stroke-width="1.5"/><path d="M4,9 Q8,5 12,8" fill="none" stroke="#3a5aa8" stroke-width="1"/></svg>
<svg class="a" style="left:391.3px;top:522.7px" width="13" height="13" viewBox="0 0 16 16"><path d="M8,1 L14,4.5 L14,11.5 L8,15 L2,11.5 L2,4.5Z" fill="#e8f0fa" stroke="#3a5aa8" stroke-width="1.4"/><path d="M8,4 L11,6 L11,10 L8,12 L5,10 L5,6Z" fill="none" stroke="#3a5aa8" stroke-width="1.2"/></svg>
<svg class="a" style="left:411.1px;top:522.7px" width="13" height="13" viewBox="0 0 16 16"><ellipse cx="8" cy="9" rx="7" ry="4.5" fill="#d0e0f8" stroke="#3a5aa8" stroke-width="1.4"/><circle cx="5.5" cy="8.5" r="1.6" fill="#3a5aa8"/><path d="M1,9 L1,11 Q8,16 15,11 L15,9" fill="none" stroke="#3a5aa8" stroke-width="1"/></svg>
<svg class="a" style="left:430.90000000000003px;top:522.7px" width="13" height="13" viewBox="0 0 16 16"><circle cx="8" cy="8" r="6.8" fill="#3a5aa8"/><circle cx="8" cy="7.5" r="5" fill="#d8e6f8"/><circle cx="8" cy="7.5" r="2" fill="#3a5aa8"/><path d="M3,5 L5,3 M11,3 L13,5 M3,11 L5,13" stroke="#3a5aa8" stroke-width="1"/></svg>
<svg class="a" style="left:450.7px;top:522.7px" width="13" height="13" viewBox="0 0 16 16"><path d="M1,5 Q3,1 7,5 L13,10 Q15,13 11,14 L6,9 Q2,8 1,5Z" fill="#3a5aa8"/><path d="M3,5 Q4,3 6,5" stroke="#c0d4f4" stroke-width="1" fill="none"/></svg>
<div class="a" style="left:76.5px;top:545.5px;width:92.7px;height:63.5px;background:linear-gradient(#2c2c2c,#363636 30%,#3a3a3a 37%,#2a2a2a 38%,#262626 70%,#1e1e1e);border:1px solid #1a1a1a;border-radius:2px"></div>
<div class="a" style="left:76.5px;top:609.5px;width:92.7px;height:7px;background:linear-gradient(#c8c8c8,rgba(255,255,255,0))"></div>
<svg class="a" style="left:76px;top:545px" width="94" height="64" viewBox="0 0 94 64"><ellipse cx="12.4" cy="14.5" rx="5" ry="7.8" fill="none" stroke="#4a6e98" stroke-width="2.5"/><ellipse cx="12.4" cy="37.2" rx="5" ry="7.8" fill="none" stroke="#4a6e98" stroke-width="2.5"/><path d="M27.5,25.5 L42.5,13.5 L41.5,51" fill="none" stroke="#3cdca0" stroke-width="6.6" stroke-linecap="round" stroke-linejoin="round"/><ellipse cx="72.1" cy="32.4" rx="11" ry="17.8" fill="none" stroke="#3cdca0" stroke-width="6.6"/></svg>
<div class="a" style="left:176.5px;top:539px;width:1px;height:82px;background:#e8e8e8"></div>
<div class="t" style="left:186.0px;top:544.2px;font-size:8px;color:#222">名称</div>
<div class="a" style="left:211.3px;top:541.3px;width:59.099999999999966px;height:12.0px;background:#fff;border:1px solid #a6c4e4;border-radius:2.5px;box-shadow:inset 0 1px 1px #e4ecf4"></div>
<div class="t" style="left:214.3px;top:543.7px;font-size:7.5px;color:#222">GEAR1</div>
<div class="a" style="left:177px;top:555px;width:842px;height:1px;background:#ececec"></div>
<div class="a" style="left:179.3px;top:560px;width:66.0px;height:12px;background:#fff;border:1px solid #a6c4e4;border-radius:2.5px;box-shadow:inset 0 1px 1px #e4ecf4"></div>
<div class="t" style="left:182.3px;top:562.4px;font-size:8px;color:#111;text-shadow:0 0 0.25px #111">齿形测量</div>
<svg class="a" style="left:234.3px;top:564.0px" width="7" height="4" viewBox="0 0 7 4"><path d="M0,0 L7,0 L3.5,4Z" fill="#10305a"/></svg>
<svg class="a" style="left:180px;top:575.5px" width="74" height="44" viewBox="0 0 74 44"><defs><linearGradient id="sky" x1="0" y1="0" x2="0" y2="1"><stop offset="0" stop-color="#9eaad0"/><stop offset="1" stop-color="#c4cae0"/></linearGradient></defs><rect x="0" y="0" width="74" height="44" fill="url(#sky)"/><path d="M0,10 L11,8 L13,9 Q14,16 20,19 L22,22 L22,40 L0,40Z" fill="#7a82a8"/><path d="M11,8 L13,9 Q14,16 20,19 L20,40 L11,40Z" fill="#a4acc8"/><path d="M20,19 Q28,17 34,12 L38,12 L40,14 L40,40 L20,40Z" fill="#8890b4"/><path d="M34,12 L38,12 L40,14 L40,40 L34,40Z" fill="#b0b8d4"/><path d="M40,14 Q41,22 44,25 L54,24 L56,21 L62,20 L66,21 L68,26 L74,30 L74,40 L40,40Z" fill="#7c84aa"/><path d="M44,25 L54,24 L54,40 L44,40Z" fill="#969ec0"/><path d="M62,20 L66,21 L68,26 L68,40 L62,40Z" fill="#aab2cc"/><path d="M0,31 L20,29 L40,31 L74,36 L74,44 L0,44Z" fill="#283058"/><path d="M22,22 Q28,19 36,14" stroke="#30a030" stroke-width="1.3" fill="none"/><path d="M6,27 L24,21 M7,31 L28,26 M6,27 L7,31" stroke="#e8e820" stroke-width="0.9" fill="none"/><rect x="0.5" y="0.5" width="73" height="43" fill="none" stroke="#7aa0d0" stroke-width="1"/><text x="27" y="11.5" font-family="Liberation Sans" font-size="8" fill="#40a040" letter-spacing="-0.3">Profile</text><text x="12.5" y="40.5" font-family="Liberation Sans" font-size="8" fill="#e8e830" letter-spacing="-0.3">Offset</text></svg>
<div class="a" style="left:259px;top:558px;width:1px;height:62px;background:#e8e8e8"></div>
<div class="a" style="left:264px;top:558.4px;width:86px;height:58.3px;background:#fff;border:1px solid #d0d4d8"></div>
<div class="a" style="left:265px;top:559.4px;width:84px;height:11px;background:linear-gradient(#f0f0f0,#e6e6e6)"></div>
<div class="a" style="left:265px;top:570px;width:84px;height:1px;background:#e8c878"></div>
<div class="a" style="left:337px;top:560px;width:1px;height:10px;background:#d4d4d4"></div>
<div class="a" style="left:276.3px;top:560px;width:1px;height:10px;background:#d4d4d4"></div>
<div class="t" style="left:206.5px;width:200px;text-align:center;top:561.0px;font-size:8px;color:#111;text-shadow:0 0 0.3px #111">值</div>
<div class="a" style="left:341.3px;top:543.3px;width:8.5px;height:8.5px;background:#fff;border:1px solid #a8bcd8;border-radius:2px"></div>
<div class="t" style="left:354.3px;top:543.9px;font-size:8px;color:#111;text-shadow:0 0 0.2px #111">使用测量点</div>
<div class="a" style="left:421.3px;top:541.3px;width:18.69999999999999px;height:13.4px;background:linear-gradient(#fbfbfb,#f0f0f0);border:1px solid #e0e0e0;border-bottom:none;border-radius:3px 3px 0 0"></div>
<div class="a" style="left:440.7px;top:541.3px;width:18.600000000000023px;height:13.4px;background:linear-gradient(#fbfbfb,#f0f0f0);border:1px solid #e0e0e0;border-bottom:none;border-radius:3px 3px 0 0"></div>
<div class="a" style="left:460.4px;top:541.3px;width:19.600000000000023px;height:14px;background:linear-gradient(#eaf6fc,#fff);border:1px solid #9ed0f0;border-bottom:none;border-radius:3px 3px 0 0"></div>
<div class="a" style="left:481px;top:541.3px;width:18.30000000000001px;height:13.4px;background:linear-gradient(#fbfbfb,#f0f0f0);border:1px solid #e0e0e0;border-bottom:none;border-radius:3px 3px 0 0"></div>
<div class="a" style="left:500.7px;top:541.3px;width:18.599999999999966px;height:13.4px;background:linear-gradient(#fbfbfb,#f0f0f0);border:1px solid #e0e0e0;border-bottom:none;border-radius:3px 3px 0 0"></div>
<div class="a" style="left:410px;top:554.7px;width:117px;height:1px;background:#d8d8d8"></div>
<svg class="a" style="left:424.15px;top:542.3px" width="13" height="12" viewBox="0 0 16 16"><path d="M2,6 L7,3.5 L11,5.5 L6,8Z" fill="#70c0f0"/><path d="M2,6 L6,8 L6,14 L2,12Z" fill="#1a5aa8"/><path d="M6,8 L11,5.5 L11,11.5 L6,14Z" fill="#0a3a78"/><path d="M12,3 Q15,8 12,13" stroke="#333" stroke-width="1.5" fill="none"/></svg>
<svg class="a" style="left:443.5px;top:542.3px" width="13" height="12" viewBox="0 0 16 16"><rect x="1" y="3" width="14" height="10" fill="#1a3a80"/><path d="M2,9 Q5,4 8,8 Q11,12 14,6" stroke="#80c0f0" stroke-width="1.2" fill="none"/></svg>
<svg class="a" style="left:463.7px;top:542.3px" width="13" height="12" viewBox="0 0 16 16"><rect x="4" y="4" width="11" height="10" fill="#e8eef8" stroke="#3a5aa8" stroke-width="1"/><rect x="4" y="4" width="11" height="2.5" fill="#3a5aa8"/><path d="M4,9 H15 M4,11.5 H15 M9,6 V14" stroke="#3a5aa8" stroke-width="0.6"/><path d="M1,1 H5 M3,1 V8" stroke="#444" stroke-width="1.2"/><circle cx="3" cy="9" r="1" fill="#e02020"/></svg>
<svg class="a" style="left:483.65px;top:542.3px" width="13" height="12" viewBox="0 0 16 16"><path d="M2,5 Q3,14 12,12" stroke="#4aa0f0" stroke-width="4" fill="none"/><path d="M10,2 H15 M12.5,2 V9" stroke="#444" stroke-width="1.3"/><circle cx="12.5" cy="10" r="1.2" fill="#e02020"/></svg>
<svg class="a" style="left:503.5px;top:542.3px" width="13" height="12" viewBox="0 0 16 16"><rect x="6" y="3" width="9" height="10" fill="#a8c0e8" stroke="#3a5aa8" stroke-width="0.8"/><path d="M9,6 H14 M9,9 H14" stroke="#fff" stroke-width="1"/><path d="M1,8 L5,6 L9,8 L5,10Z" fill="#70c0f0"/><path d="M1,8 L5,10 L5,15 L1,13Z" fill="#1a5aa8"/><path d="M5,10 L9,8 L9,13 L5,15Z" fill="#0a3a78"/></svg>
<div class="a" style="left:355.3px;top:560px;width:55.69999999999999px;height:11.700000000000045px;background:#fff;border:1px solid #a6c4e4;border-radius:2.5px;box-shadow:inset 0 1px 1px #e4ecf4"></div>
<div class="t" style="left:358.3px;top:562.3px;font-size:8px;color:#111;text-shadow:0 0 0.25px #111">两侧翼</div>
<svg class="a" style="left:400px;top:563.85px" width="7" height="4" viewBox="0 0 7 4"><path d="M0,0 L7,0 L3.5,4Z" fill="#10305a"/></svg>
<div class="t" style="left:355.0px;top:577.2px;font-size:8px;color:#222">测量齿</div>
<div class="a" style="left:354.7px;top:587.3px;width:27.0px;height:11.700000000000045px;background:#fff;border:1px solid #a6c4e4;border-radius:2.5px;box-shadow:inset 0 1px 1px #e4ecf4"></div>
<div class="t" style="left:357.7px;top:589.4px;font-size:7.5px;color:#111;text-shadow:0 0 0.25px #111">1</div>
<svg class="a" style="left:370.7px;top:591.15px" width="7" height="4" viewBox="0 0 7 4"><path d="M0,0 L7,0 L3.5,4Z" fill="#10305a"/></svg>
<div class="a" style="left:384.7px;top:587.3px;width:26.900000000000034px;height:11.700000000000045px;background:#fff;border:1px solid #a6c4e4;border-radius:2.5px;box-shadow:inset 0 1px 1px #e4ecf4"></div>
<div class="t" style="left:387.7px;top:589.4px;font-size:7.5px;color:#111;text-shadow:0 0 0.25px #111">5</div>
<svg class="a" style="left:400.6px;top:591.15px" width="7" height="4" viewBox="0 0 7 4"><path d="M0,0 L7,0 L3.5,4Z" fill="#10305a"/></svg>
<div class="a" style="left:354.7px;top:603.3px;width:27.0px;height:12.0px;background:#fff;border:1px solid #a6c4e4;border-radius:2.5px;box-shadow:inset 0 1px 1px #e4ecf4"></div>
<div class="t" style="left:357.7px;top:605.6px;font-size:7.5px;color:#111;text-shadow:0 0 0.25px #111">10</div>
<svg class="a" style="left:370.7px;top:607.3px" width="7" height="4" viewBox="0 0 7 4"><path d="M0,0 L7,0 L3.5,4Z" fill="#10305a"/></svg>
<div class="a" style="left:384.7px;top:603.3px;width:26.900000000000034px;height:12.0px;background:#fff;border:1px solid #a6c4e4;border-radius:2.5px;box-shadow:inset 0 1px 1px #e4ecf4"></div>
<div class="t" style="left:387.7px;top:605.6px;font-size:7.5px;color:#111;text-shadow:0 0 0.25px #111">15</div>
<svg class="a" style="left:400.6px;top:607.3px" width="7" height="4" viewBox="0 0 7 4"><path d="M0,0 L7,0 L3.5,4Z" fill="#10305a"/></svg>
<svg class="a" style="left:416px;top:558px" width="15" height="15" viewBox="0 0 16 16"><rect x="1" y="2" width="6" height="6" rx="1" fill="#333"/><path d="M6,8 L10,6 M8,10 H14 M11,10 V15" stroke="#333" stroke-width="1.4"/><path d="M3,8 Q4,13 7,14" stroke="#333" stroke-width="0.8" fill="none"/></svg>
<svg class="a" style="left:432px;top:558px" width="15" height="15" viewBox="0 0 16 16"><ellipse cx="5" cy="4" rx="3.5" ry="2.5" fill="#333"/><path d="M6,6 L11,11" stroke="#555" stroke-width="1"/><circle cx="11.5" cy="11.5" r="2.5" fill="#fff" stroke="#444" stroke-width="0.8"/><path d="M9,14 L14,15" stroke="#444" stroke-width="0.8"/></svg>
<div class="a" style="left:453.7px;top:559.7px;width:53.0px;height:12.0px;background:#fff;border:1px solid #a6c4e4;border-radius:2.5px;box-shadow:inset 0 1px 1px #e4ecf4"></div>
<svg class="a" style="left:495.7px;top:563.7px" width="7" height="4" viewBox="0 0 7 4"><path d="M0,0 L7,0 L3.5,4Z" fill="#10305a"/></svg>
<svg class="a" style="left:512px;top:558.5px" width="15" height="15" viewBox="0 0 16 16"><path d="M7,2 Q2,3 2,8 Q2,13 7,13" stroke="#222" stroke-width="2" fill="none"/><ellipse cx="10" cy="9" rx="4.5" ry="4.5" fill="#1a90e0"/><text x="7.5" y="12" font-family="Liberation Sans" font-weight="bold" font-size="7" fill="#111">D</text></svg>
<div class="a" style="left:415.3px;top:578px;width:111.4px;height:1px;background:#e4e4e4"></div>
<div class="t" style="left:417.0px;top:584.7px;font-size:8px;color:#222">偏移</div>
<div class="a" style="left:447.3px;top:582.3px;width:44.0px;height:12.0px;background:#fff;border:1px solid #a6c4e4;border-radius:2.5px;box-shadow:inset 0 1px 1px #e4ecf4"></div>
<div class="t" style="left:450.3px;top:584.7px;font-size:7.5px;color:#222">0.0000</div>
<svg class="a" style="left:496px;top:581px" width="15" height="15" viewBox="0 0 16 16"><path d="M3,1 H8 M5.5,1 V9" stroke="#444" stroke-width="1.4"/><path d="M2,9 L14,9 L15,14 L1,14Z" fill="#b8cce8" stroke="#5a7ab0" stroke-width="0.8"/><circle cx="5.5" cy="10" r="1.3" fill="#e02020"/><circle cx="11" cy="11" r="1.3" fill="#e02020"/></svg>
<svg class="a" style="left:513px;top:581px" width="15" height="15" viewBox="0 0 16 16"><rect x="1" y="4" width="13" height="11" fill="#a8b8d8" stroke="#5a6a90" stroke-width="0.8"/><path d="M4,12 L13,3" stroke="#e04040" stroke-width="3"/><path d="M4,12 L8,8" stroke="#40a040" stroke-width="3"/></svg>
<div class="a" style="left:415.3px;top:598px;width:111.4px;height:1px;background:#e4e4e4"></div>
<div class="t" style="left:417.0px;top:605.5px;font-size:7.5px;color:#3a4a6a">SD</div>
<div class="a" style="left:428.4px;top:603.3px;width:23.200000000000045px;height:12.300000000000068px;background:#fff;border:1px solid #a6c4e4;border-radius:2.5px;box-shadow:inset 0 1px 1px #e4ecf4"></div>
<div class="t" style="left:456.7px;top:605.5px;font-size:7.5px;color:#3a4a6a">ED</div>
<div class="a" style="left:468.7px;top:603.3px;width:23.30000000000001px;height:12.300000000000068px;background:#fff;border:1px solid #a6c4e4;border-radius:2.5px;box-shadow:inset 0 1px 1px #e4ecf4"></div>
<svg class="a" style="left:496px;top:602px" width="15" height="15" viewBox="0 0 16 16"><path d="M1,1 H6 M3.5,1 V12" stroke="#444" stroke-width="1.4"/><circle cx="3.5" cy="12.5" r="1.3" fill="#e02020"/><path d="M8,5 L14,9 L8,13Z" fill="#2a7ae0"/></svg>
<svg class="a" style="left:513px;top:602px" width="15" height="15" viewBox="0 0 16 16"><path d="M1,1 H6 M3.5,1 V9" stroke="#444" stroke-width="1.4"/><circle cx="3.5" cy="9.5" r="1.3" fill="#e02020"/><path d="M14,6 L6,11 L14,15Z" fill="#1a5ab0"/></svg>
<div class="a" style="left:1020px;top:520px;width:168.5px;height:102px;background:#fff;border:1px solid #c8d0d8;border-radius:3px"></div>
<div class="a" style="left:1021px;top:521px;width:151px;height:7px;background:linear-gradient(#d8e8f8,#fff)"></div>
<div class="t" style="left:1041.0px;top:530.9px;font-size:8px;color:#111;text-shadow:0 0 0.2px #111">接近距离</div>
<div class="t" style="left:1041.0px;top:545.9px;font-size:8px;color:#111;text-shadow:0 0 0.2px #111">回退距离</div>
<div class="t" style="left:1041.0px;top:560.9px;font-size:8px;color:#111;text-shadow:0 0 0.2px #111">深度</div>
<div class="t" style="left:1041.0px;top:591.4px;font-size:8px;color:#111;text-shadow:0 0 0.2px #111">搜索距离</div>
<div class="a" style="left:1042px;top:573.5px;width:62.5px;height:12.100000000000023px;background:#fff;border:1px solid #a6c4e4;border-radius:2.5px;box-shadow:inset 0 1px 1px #e4ecf4"></div>
<div class="t" style="left:1045.0px;top:576.0px;font-size:8px;color:#111;text-shadow:0 0 0.25px #111">间距面</div>
<svg class="a" style="left:1093.5px;top:577.55px" width="7" height="4" viewBox="0 0 7 4"><path d="M0,0 L7,0 L3.5,4Z" fill="#10305a"/></svg>
<div class="a" style="left:1114.2px;top:527.5px;width:52.0px;height:12.0px;background:#fff;border:1px solid #a6c4e4;border-radius:2.5px;box-shadow:inset 0 1px 1px #e4ecf4"></div>
<div class="t" style="left:1117.2px;top:529.9px;font-size:7.5px;color:#222">3.0000</div>
<div class="a" style="left:1114.2px;top:543px;width:52.0px;height:12px;background:#fff;border:1px solid #a6c4e4;border-radius:2.5px;box-shadow:inset 0 1px 1px #e4ecf4"></div>
<div class="t" style="left:1117.2px;top:545.4px;font-size:7.5px;color:#222">3.0000</div>
<div class="a" style="left:1114.2px;top:558px;width:52.0px;height:12px;background:#fff;border:1px solid #a6c4e4;border-radius:2.5px;box-shadow:inset 0 1px 1px #e4ecf4"></div>
<div class="t" style="left:1117.2px;top:560.4px;font-size:7.5px;color:#222">10.0000</div>
<div class="a" style="left:1114.2px;top:573px;width:52.0px;height:12px;background:#fff;border:1px solid #a6c4e4;border-radius:2.5px;box-shadow:inset 0 1px 1px #e4ecf4"></div>
<div class="t" style="left:1117.2px;top:575.4px;font-size:7.5px;color:#222">10.0000</div>
<div class="a" style="left:1114.2px;top:588px;width:52.0px;height:12px;background:#fff;border:1px solid #a6c4e4;border-radius:2.5px;box-shadow:inset 0 1px 1px #e4ecf4"></div>
<div class="t" style="left:1117.2px;top:590.4px;font-size:7.5px;color:#222">10.0000</div>
<div class="a" style="left:1134.8px;top:604.2px;width:30.6px;height:11.2px;background:linear-gradient(#fff,#e8e8e8);border:1px solid #90bede;border-radius:3px"></div>
<div class="t" style="left:1050.0px;width:200px;text-align:center;top:606.0px;font-size:8px;color:#111;text-shadow:0 0 0.3px #111">应用</div>
<div class="a" style="left:1172.5px;top:521px;width:15px;height:97px;background:#fafafa"></div>
<div class="a" style="left:1172.5px;top:521px;width:14.5px;height:17px;background:linear-gradient(90deg,#f6f6f6,#ececec);border:1px solid #e2e2e2;border-left:none;border-radius:0 3px 3px 0"></div>
<div class="a" style="left:1172.5px;top:538.5px;width:14.5px;height:17.5px;background:linear-gradient(90deg,#f6f6f6,#ececec);border:1px solid #e2e2e2;border-left:none;border-radius:0 3px 3px 0"></div>
<div class="a" style="left:1172.5px;top:556.5px;width:14.5px;height:17.5px;background:linear-gradient(90deg,#f6f6f6,#ececec);border:1px solid #e2e2e2;border-left:none;border-radius:0 3px 3px 0"></div>
<div class="a" style="left:1172.5px;top:574.5px;width:14.5px;height:17.5px;background:linear-gradient(90deg,#f6f6f6,#ececec);border:1px solid #e2e2e2;border-left:none;border-radius:0 3px 3px 0"></div>
<div class="a" style="left:1172px;top:595px;width:15px;height:18.8px;background:linear-gradient(90deg,#ffffff,#f0f8fc);border:1px solid #a8d8f4;border-left:none;border-radius:0 3px 3px 0"></div>
<svg class="a" style="left:1174.5px;top:524.5px" width="11" height="11" viewBox="0 0 16 16"><rect x="3" y="7" width="10" height="7" rx="1" fill="#222"/><rect x="6" y="2" width="4" height="6" fill="#d8d0c0" stroke="#555" stroke-width="0.6"/></svg>
<svg class="a" style="left:1174.5px;top:542.5px" width="11" height="11" viewBox="0 0 16 16"><rect x="2" y="2" width="10" height="10" fill="#4a7ad8" stroke="#1a3a88" stroke-width="0.8"/><path d="M12,6 L15,6 L15,14 L9,14" stroke="#222" stroke-width="1.2" fill="none"/></svg>
<svg class="a" style="left:1174.5px;top:560.5px" width="11" height="11" viewBox="0 0 16 16"><circle cx="7" cy="7" r="5" fill="#a8d0f0" stroke="#2a5ab0" stroke-width="1.6"/><path d="M10.5,10.5 L15,15" stroke="#222" stroke-width="2.2"/></svg>
<svg class="a" style="left:1174.5px;top:578.5px" width="11" height="11" viewBox="0 0 16 16"><path d="M1,1 H6 M3.5,1 V7" stroke="#444" stroke-width="1.2"/><circle cx="3.5" cy="8" r="1" fill="#e02020"/><path d="M6,9 L11,6.5 L15,8.5 L10,11Z" fill="#80c8f8"/><path d="M6,9 L10,11 L10,15 L6,13Z" fill="#2a78c8"/><path d="M10,11 L15,8.5 L15,12.5 L10,15Z" fill="#0e4a90"/></svg>
<svg class="a" style="left:1174.5px;top:598.5px" width="11" height="11" viewBox="0 0 16 16"><circle cx="8" cy="8" r="6.5" fill="#e8b830"/><circle cx="8" cy="8" r="3" fill="#b8c8e8"/><g stroke="#e8b830" stroke-width="2.5"><path d="M8,0 V16 M0,8 H16 M2.3,2.3 L13.7,13.7 M13.7,2.3 L2.3,13.7"/></g><circle cx="8" cy="8" r="5" fill="#e8b830"/><circle cx="8" cy="8" r="2.5" fill="#9aacd0"/></svg>
<svg class="a" style="left:1175px;top:616px" width="14" height="5" viewBox="0 0 14 5"><path d="M0,0 L5,0 L2.5,4Z" fill="#10305a"/><path d="M7,4 L12,4 L9.5,0Z" fill="#10305a"/></svg>
<div class="t" style="left:8.4px;top:631.2px;font-size:8px;color:#333;text-shadow:0 0 0.4px #333">就绪</div>
<div class="a" style="left:949.8px;top:627.4px;width:52.30000000000007px;height:12.0px;background:#fff;border:1px solid #a6c4e4;border-radius:2.5px;box-shadow:inset 0 1px 1px #e4ecf4"></div>
<div class="t" style="left:952.8px;top:629.8px;font-size:8px;color:#111;text-shadow:0 0 0.25px #111">毫米</div>
<svg class="a" style="left:991.1px;top:631.4px" width="7" height="4" viewBox="0 0 7 4"><path d="M0,0 L7,0 L3.5,4Z" fill="#10305a"/></svg>
<div class="a" style="left:1010.9px;top:627.4px;width:52.500000000000114px;height:12.0px;background:#fff;border:1px solid #a6c4e4;border-radius:2.5px;box-shadow:inset 0 1px 1px #e4ecf4"></div>
<div class="t" style="left:1013.9px;top:629.8px;font-size:8px;color:#111;text-shadow:0 0 0.25px #111">角度</div>
<svg class="a" style="left:1052.4px;top:631.4px" width="7" height="4" viewBox="0 0 7 4"><path d="M0,0 L7,0 L3.5,4Z" fill="#10305a"/></svg>
<div class="a" style="left:1071.7px;top:627.4px;width:39.899999999999864px;height:12.0px;background:#fff;border:1px solid #a6c4e4;border-radius:2.5px;box-shadow:inset 0 1px 1px #e4ecf4"></div>
<div class="t" style="left:1074.7px;top:629.7px;font-size:7.5px;color:#111;text-shadow:0 0 0.25px #111">Cart</div>
<svg class="a" style="left:1100.6px;top:631.4px" width="7" height="4" viewBox="0 0 7 4"><path d="M0,0 L7,0 L3.5,4Z" fill="#10305a"/></svg>
<div class="a" style="left:1123.2px;top:627.5px;width:11.899999999999864px;height:12px;background:linear-gradient(#e8f4fc,#c0e0f8);border:1px solid #80c4f0;border-radius:3px"></div>
<svg class="a" style="left:1124.7px;top:629px" width="9" height="9" viewBox="0 0 16 16"><rect x="2" y="2" width="9" height="8" fill="#90a8e0"/><path d="M3,13 H13 V3" stroke="#e8e060" stroke-width="1.5" fill="none"/><circle cx="3" cy="13" r="1.5" fill="#e02020"/><circle cx="13" cy="13" r="1.5" fill="#e02020"/><circle cx="13" cy="3" r="1.5" fill="#e02020"/></svg>
<div class="a" style="left:1140.7px;top:627.5px;width:11.799999999999955px;height:12px;background:linear-gradient(#fff0c0,#ffd890);border:1px solid #f0b050;border-radius:3px"></div>
<svg class="a" style="left:1142.2px;top:629px" width="9" height="9" viewBox="0 0 16 16"><circle cx="8" cy="7" r="5" fill="#e02020"/><path d="M4,13 H12" stroke="#40a0f0" stroke-width="2"/><rect x="7" y="11" width="2" height="4" fill="#20b020"/></svg>
<div class="a" style="left:1158px;top:627.5px;width:12px;height:12px;background:linear-gradient(#e8f4fc,#c0e0f8);border:1px solid #80c4f0;border-radius:3px"></div>
<svg class="a" style="left:1159.5px;top:629px" width="9" height="9" viewBox="0 0 16 16"><path d="M3,2 H8 M5.5,2 V12" stroke="#444" stroke-width="1.5"/><circle cx="5.5" cy="12" r="1.3" fill="#e02020"/><path d="M8,14 H14 V6" stroke="#5a9a40" stroke-width="1.5" fill="none"/></svg>
<div class="a" style="left:1175.2px;top:627.5px;width:11.799999999999955px;height:12px;background:linear-gradient(#e8f4fc,#c0e0f8);border:1px solid #80c4f0;border-radius:3px"></div>
<svg class="a" style="left:1176.7px;top:629px" width="9" height="9" viewBox="0 0 16 16"><rect x="2" y="2" width="5" height="5" fill="#30a030"/><rect x="9" y="9" width="5" height="5" fill="#e05050"/><path d="M3,14 L13,3" stroke="#e02020" stroke-width="2"/><path d="M9,3 L13,7" stroke="#555" stroke-width="1"/></svg>
</body></html>
